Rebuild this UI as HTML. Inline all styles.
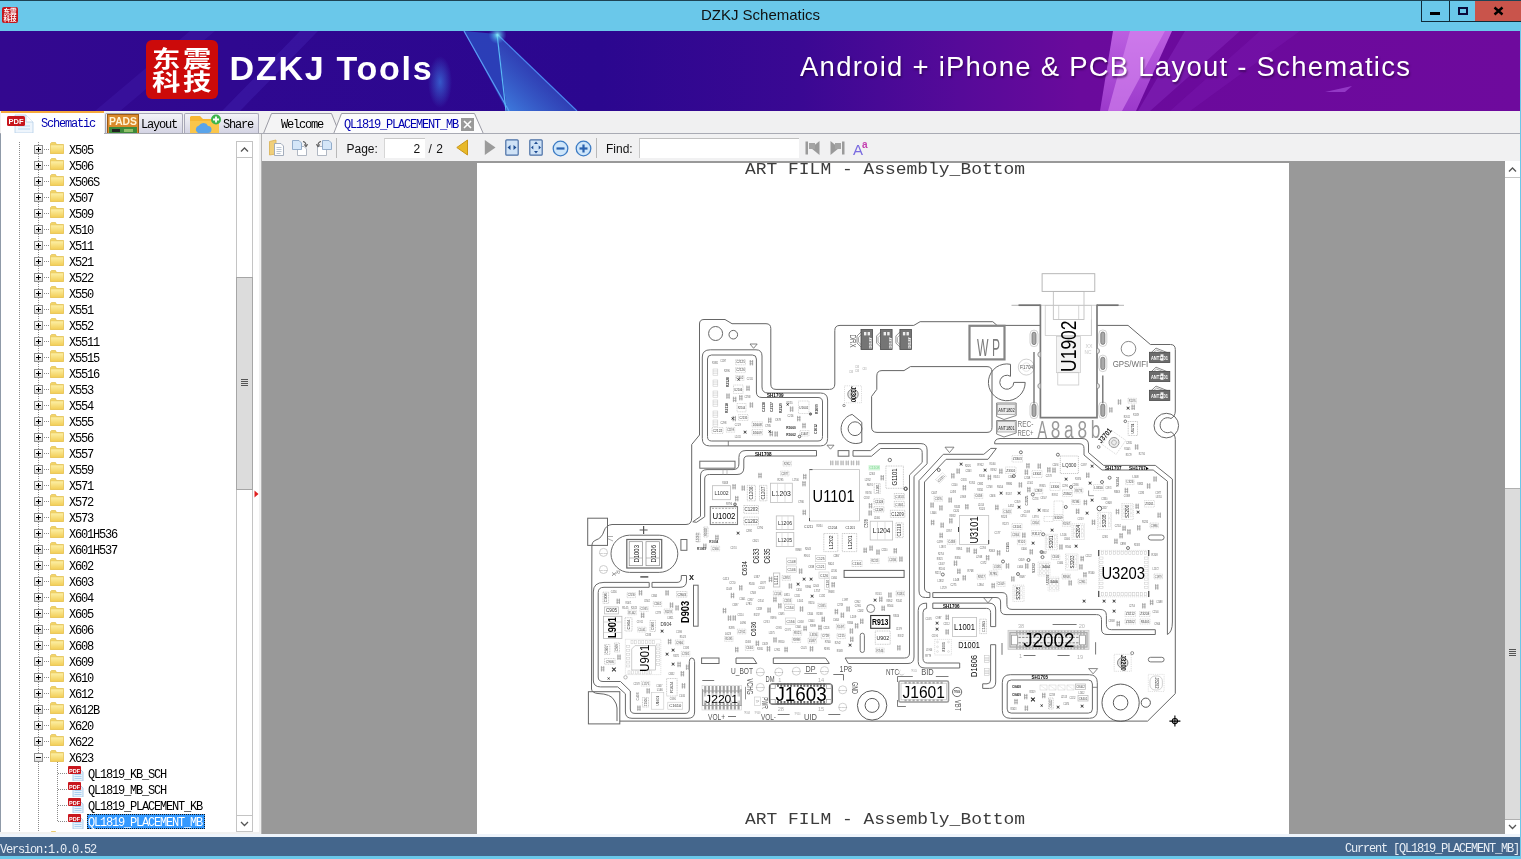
<!DOCTYPE html>
<html lang="en"><head><meta charset="utf-8"><title>DZKJ Schematics</title>
<style>
*{box-sizing:border-box;margin:0;padding:0}
html,body{width:1521px;height:859px;overflow:hidden;background:#6ac8ea;font-family:"Liberation Sans",sans-serif}
#win{position:absolute;left:0;top:0;width:1521px;height:859px;background:#6ac8ea;overflow:hidden;will-change:transform}
.abs{position:absolute}
.mono{font-family:"Liberation Mono","Noto Sans CJK SC",monospace;font-size:12px;letter-spacing:-1.2px;white-space:pre;line-height:12px}
#titlebar{left:0;top:0;width:1521px;height:31px;background:#6ac8ea;border-top:1px solid #1d4354}
#title{left:0;top:6px;width:1521px;text-align:center;font-size:15px;color:#111;line-height:18px}
#banner{left:0;top:31px;width:1520px;height:80px;overflow:hidden;background:linear-gradient(90deg,#33088f 0,#2f0890 230px,#2b078f 600px,#3a0893 800px,#560a99 960px,#6a0a9c 1080px,#6e0a9d 1520px)}
#tabbar{left:0;top:111px;width:1520px;height:23px;background:#f0f0f1}
#tree{left:1px;top:134px;width:258px;height:698px;background:#fff;overflow:hidden;will-change:transform}
.row{position:absolute;left:0;height:16px;width:258px}
.pm{position:absolute;left:33px;top:3px;width:9px;height:9px;border:1px solid #919191;background:linear-gradient(#fff,#ddd)}
.pm:before{content:"";position:absolute;left:1px;top:3px;width:5px;height:1px;background:#000}
.pm.plus:after{content:"";position:absolute;left:3px;top:1px;width:1px;height:5px;background:#000}
.fold{position:absolute;left:49px;top:0px;width:14px;height:12px}
.lbl{position:absolute;left:68px;top:3px;color:#000}
.flbl{position:absolute;left:87px;top:3px;color:#000}
.hdot{position:absolute;height:1px;top:7px;background-image:linear-gradient(90deg,#8a8a8a 1px,transparent 1px);background-size:2px 1px}
.vdot{position:absolute;width:1px;background-image:linear-gradient(#8a8a8a 1px,transparent 1px);background-size:1px 2px}
#status{left:0;top:837px;width:1520px;height:19px;background:#44668c;color:#e8eef5;will-change:transform}
</style></head>
<body><div id="win">
<div id="titlebar" class="abs"></div>
<svg class="abs" style="left:2px;top:7px" width="16" height="16" viewBox="0 0 16 16"><rect width="16" height="16" rx="2" fill="#c4161c"/><text x="8" y="7.3" font-family="Noto Sans CJK SC,sans-serif" font-weight="bold" font-size="6.6" fill="#fff" text-anchor="middle">东震</text><text x="8" y="14.2" font-family="Noto Sans CJK SC,sans-serif" font-weight="bold" font-size="6.6" fill="#fff" text-anchor="middle">科技</text></svg>
<div id="title" class="abs"><span id="titlespan">DZKJ Schematics</span></div>
<div class="abs" style="left:1421px;top:1px;width:29px;height:21px;border:1px solid #0f2a38;border-top:none;background:#6ac8ea"></div>
<div class="abs" style="left:1449px;top:1px;width:27px;height:21px;border:1px solid #0f2a38;border-top:none;background:#6ac8ea"></div>
<div class="abs" style="left:1475px;top:1px;width:46px;height:21px;background:#c9544b;border-bottom:1px solid #0f2a38"></div>
<div class="abs" style="left:1430px;top:12px;width:10px;height:3px;background:#000"></div>
<div class="abs" style="left:1458px;top:7px;width:10px;height:8px;border:2px solid #0a0a3a;border-top-width:2px"></div>
<svg class="abs" style="left:1493px;top:6px" width="11" height="10" viewBox="0 0 11 10"><path d="M1.5 1.5 L9.5 8.5 M9.5 1.5 L1.5 8.5" stroke="#000" stroke-width="2.4"/></svg>
<div id="banner" class="abs"><svg class="abs" style="left:0;top:0" width="1520" height="80" viewBox="0 31 1520 80"><defs><linearGradient id="tri" x1="0.1" y1="1" x2="0.8" y2="0.3"><stop offset="0" stop-color="#3f82e2" stop-opacity="0.95"/><stop offset="1" stop-color="#2a3fb4" stop-opacity="0.55"/></linearGradient><radialGradient id="glow"><stop offset="0" stop-color="#3c8ef0" stop-opacity="0.6"/><stop offset="1" stop-color="#3c8ef0" stop-opacity="0"/></radialGradient><radialGradient id="apx"><stop offset="0" stop-color="#8ff0f8" stop-opacity="0.95"/><stop offset="0.35" stop-color="#5fd0f0" stop-opacity="0.6"/><stop offset="1" stop-color="#4aa0f0" stop-opacity="0"/></radialGradient><linearGradient id="pk" x1="0" y1="0" x2="0" y2="1"><stop offset="0" stop-color="#c468e8"/><stop offset="1" stop-color="#a13fd0"/></linearGradient></defs><path d="M190 31 L215 31 L120 111 L95 111 Z" fill="#4420b0" opacity="0.35"/><path d="M300 31 L318 31 L240 111 L222 111 Z" fill="#4b2fc0" opacity="0.3"/><ellipse cx="440" cy="82" rx="12" ry="26" fill="url(#glow)"/><path d="M464 31 L497 34 L507 111 Z" fill="#2c4cc0" opacity="0.8"/><path d="M497 34 L577 111 L507 111 Z" fill="url(#tri)"/><path d="M464 31 L509 111" stroke="#5a9cf5" stroke-width="1.2" fill="none"/><path d="M497 34 L506 111" stroke="#59b8f5" stroke-width="1.2" fill="none"/><path d="M497 34 L577 111" stroke="#4a86ee" stroke-width="1.2" fill="none"/><circle cx="497.5" cy="35" r="9" fill="url(#apx)"/><path d="M1113 31 L1172 31 L1136 111 L1100 111 Z" fill="url(#pk)" opacity="0.9"/><path d="M1130 31 L1165 31 L1122 111 L1108 111 Z" fill="#d98af2" opacity="0.6"/><path d="M1185 31 L1240 31 L1150 111 L1138 111 Z" fill="#8a2cc0" opacity="0.45"/><path d="M1260 31 L1300 31 L1190 111 L1170 111 Z" fill="#7d1eb4" opacity="0.35"/><path d="M1325 92 L1352 86 L1345 92 Z" fill="#a24bd6" opacity="0.7"/></svg><div class="abs" style="left:146px;top:9px;width:72px;height:59px;background:#cc0a0a;border-radius:6px"></div><div class="abs" style="left:147px;top:14.5px;width:72px;text-align:center;font-family:'Noto Sans CJK SC',sans-serif;font-weight:bold;font-size:22.5px;line-height:23.4px;color:#fff;letter-spacing:2px;transform:scaleX(1.26);transform-origin:36px 0">东震<br>科技</div><div class="abs" style="left:229.6px;top:16.5px;font-weight:bold;font-size:34px;line-height:40px;color:#fff;white-space:nowrap;letter-spacing:1.75px" id="dzkj">DZKJ Tools</div><div class="abs" style="left:800px;top:18.6px;font-size:27.5px;line-height:34px;color:#fff;white-space:nowrap;letter-spacing:1.25px;text-shadow:1px 2px 2px rgba(40,0,60,0.6)" id="slogan">Android + iPhone &amp; PCB Layout - Schematics</div></div>
<div id="tabbar" class="abs"><div class="abs" style="left:1px;top:0px;width:103px;height:23px;background:#fff;border-top:2px solid #f5a93b"></div><span class="abs mono" style="left:41px;top:7px;color:#0000b0">Schematic</span><div class="abs" style="left:105px;top:2px;width:78px;height:20px;background:linear-gradient(#f4f4f8,#d4d4e4);border:1px solid #a8a8b8;border-bottom:none;border-radius:2px 2px 0 0"></div><svg class="abs" style="left:107px;top:3px" width="32" height="20" viewBox="0 0 32 20"><rect x="0.5" y="0.5" width="31" height="20" fill="#d98a2b" stroke="#9c5a14"/><text x="16" y="11" font-family="Liberation Sans,sans-serif" font-weight="bold" font-size="10.5" fill="#fff5d6" text-anchor="middle" textLength="28" lengthAdjust="spacingAndGlyphs">PADS</text><rect x="2" y="13" width="28" height="7" fill="#3d8a3a"/><rect x="5" y="15" width="8" height="3" fill="#222"/><rect x="17" y="15" width="9" height="3" fill="#8fc06a"/></svg><span class="abs mono" style="left:141px;top:8px;color:#000">Layout</span><div class="abs" style="left:184px;top:2px;width:75px;height:20px;background:linear-gradient(#f4f4f8,#d4d4e4);border:1px solid #a8a8b8;border-bottom:none;border-radius:2px 2px 0 0"></div><svg class="abs" style="left:189px;top:3px" width="34" height="20" viewBox="0 0 34 20"><path d="M1 3 L1 20 L30 20 L30 5 L14 5 L11 2 L2 2 Z" fill="#f7b733"/><rect x="1" y="7" width="29" height="13" fill="#fbc64a"/><path d="M9 19 a4 4 0 0 1 1 -7.5 a5 5 0 0 1 9 0.5 a3.5 3.5 0 0 1 0 7 Z" fill="#5aa4ea"/><circle cx="27" cy="5.5" r="5" fill="#3db54a"/><path d="M27 2.5v6M24 5.5h6" stroke="#fff" stroke-width="1.8"/></svg><span class="abs mono" style="left:223px;top:8px;color:#000">Share</span><svg class="abs" style="left:258px;top:0" width="240" height="23" viewBox="258 111 240 23"><path d="M263.5 133.5 L271.5 113.5 L331.5 113.5 L339.5 133.5" fill="#f4f4f5" stroke="#9b9ba5" stroke-width="1"/><path d="M333.5 134 L341.5 113.5 L474.5 113.5 L483.5 134 Z" fill="#fcfcfd" stroke="#9b9ba5" stroke-width="1"/><path d="M258 133.5 L334 133.5 M483 133.5 L498 133.5" stroke="#9b9ba5" stroke-width="1"/><rect x="461" y="118" width="13" height="13" fill="#9a9a9a"/><path d="M464 121 L471 128 M471 121 L464 128" stroke="#fff" stroke-width="1.6"/></svg><span class="abs mono" style="left:281px;top:8px;color:#000">Welcome</span><span class="abs mono" style="left:344px;top:8px;color:#0000b0">QL1819_PLACEMENT_MB</span></div>
<div class="abs" style="left:0;top:133px;width:1520px;height:1px;background:#a9abb4"></div>
<div class="abs" style="left:1px;top:111px;width:103px;height:24px;background:#fff;border-top:2px solid #f5a93b"></div>
<svg class="abs" style="left:6px;top:113px" width="34" height="20" viewBox="0 0 34 20"><path d="M9 2 L20 2 L27 9 L27 20 L9 20 Z" fill="#eef5fc" stroke="#b5cfe8" stroke-width="0.8"/><path d="M20 2 L20 9 L27 9" fill="#fff" stroke="#b5cfe8" stroke-width="0.8"/><path d="M12 13h12M12 16h12" stroke="#b9d8f2" stroke-width="1.2"/><rect x="1" y="3" width="18" height="10" rx="1.5" fill="#c8161d"/><text x="10" y="11" font-family="Liberation Sans,sans-serif" font-weight="bold" font-size="8" fill="#fff" text-anchor="middle" textLength="15" lengthAdjust="spacingAndGlyphs">PDF</text></svg>
<span class="abs mono" style="left:41px;top:118px;color:#0000b0">Schematic</span>
<div class="abs" style="left:0;top:134px;width:1px;height:703px;background:#8f9aa8"></div>
<div id="tree" class="abs"><div class="vdot" style="left:18px;top:8px;height:690px"></div>
<div class="vdot" style="left:37px;top:8px;height:690px"></div>
<div class="row" style="top:8px"><div class="hdot" style="left:43px;width:6px"></div><div class="pm plus"></div><svg class="fold" viewBox="0 0 14 12"><defs><linearGradient id="fg" x1="0" y1="0" x2="0" y2="1"><stop offset="0" stop-color="#fdf1a8"/><stop offset="1" stop-color="#f2cd55"/></linearGradient></defs><path d="M0.5 1.5 L0.5 11.5 L13.5 11.5 L13.5 2.5 L6.5 2.5 L5.5 0.5 L1.5 0.5 Z" fill="#f2d468" stroke="#dfb840" stroke-width="0.6"/><rect x="0.5" y="3" width="13" height="8.5" fill="url(#fg)" stroke="#e6c25a" stroke-width="0.5"/></svg><span class="lbl mono">X505</span></div>
<div class="row" style="top:24px"><div class="hdot" style="left:43px;width:6px"></div><div class="pm plus"></div><svg class="fold" viewBox="0 0 14 12"><path d="M0.5 1.5 L0.5 11.5 L13.5 11.5 L13.5 2.5 L6.5 2.5 L5.5 0.5 L1.5 0.5 Z" fill="#f2d468" stroke="#dfb840" stroke-width="0.6"/><rect x="0.5" y="3" width="13" height="8.5" fill="url(#fg)" stroke="#e6c25a" stroke-width="0.5"/></svg><span class="lbl mono">X506</span></div>
<div class="row" style="top:40px"><div class="hdot" style="left:43px;width:6px"></div><div class="pm plus"></div><svg class="fold" viewBox="0 0 14 12"><path d="M0.5 1.5 L0.5 11.5 L13.5 11.5 L13.5 2.5 L6.5 2.5 L5.5 0.5 L1.5 0.5 Z" fill="#f2d468" stroke="#dfb840" stroke-width="0.6"/><rect x="0.5" y="3" width="13" height="8.5" fill="url(#fg)" stroke="#e6c25a" stroke-width="0.5"/></svg><span class="lbl mono">X506S</span></div>
<div class="row" style="top:56px"><div class="hdot" style="left:43px;width:6px"></div><div class="pm plus"></div><svg class="fold" viewBox="0 0 14 12"><path d="M0.5 1.5 L0.5 11.5 L13.5 11.5 L13.5 2.5 L6.5 2.5 L5.5 0.5 L1.5 0.5 Z" fill="#f2d468" stroke="#dfb840" stroke-width="0.6"/><rect x="0.5" y="3" width="13" height="8.5" fill="url(#fg)" stroke="#e6c25a" stroke-width="0.5"/></svg><span class="lbl mono">X507</span></div>
<div class="row" style="top:72px"><div class="hdot" style="left:43px;width:6px"></div><div class="pm plus"></div><svg class="fold" viewBox="0 0 14 12"><path d="M0.5 1.5 L0.5 11.5 L13.5 11.5 L13.5 2.5 L6.5 2.5 L5.5 0.5 L1.5 0.5 Z" fill="#f2d468" stroke="#dfb840" stroke-width="0.6"/><rect x="0.5" y="3" width="13" height="8.5" fill="url(#fg)" stroke="#e6c25a" stroke-width="0.5"/></svg><span class="lbl mono">X509</span></div>
<div class="row" style="top:88px"><div class="hdot" style="left:43px;width:6px"></div><div class="pm plus"></div><svg class="fold" viewBox="0 0 14 12"><path d="M0.5 1.5 L0.5 11.5 L13.5 11.5 L13.5 2.5 L6.5 2.5 L5.5 0.5 L1.5 0.5 Z" fill="#f2d468" stroke="#dfb840" stroke-width="0.6"/><rect x="0.5" y="3" width="13" height="8.5" fill="url(#fg)" stroke="#e6c25a" stroke-width="0.5"/></svg><span class="lbl mono">X510</span></div>
<div class="row" style="top:104px"><div class="hdot" style="left:43px;width:6px"></div><div class="pm plus"></div><svg class="fold" viewBox="0 0 14 12"><path d="M0.5 1.5 L0.5 11.5 L13.5 11.5 L13.5 2.5 L6.5 2.5 L5.5 0.5 L1.5 0.5 Z" fill="#f2d468" stroke="#dfb840" stroke-width="0.6"/><rect x="0.5" y="3" width="13" height="8.5" fill="url(#fg)" stroke="#e6c25a" stroke-width="0.5"/></svg><span class="lbl mono">X511</span></div>
<div class="row" style="top:120px"><div class="hdot" style="left:43px;width:6px"></div><div class="pm plus"></div><svg class="fold" viewBox="0 0 14 12"><path d="M0.5 1.5 L0.5 11.5 L13.5 11.5 L13.5 2.5 L6.5 2.5 L5.5 0.5 L1.5 0.5 Z" fill="#f2d468" stroke="#dfb840" stroke-width="0.6"/><rect x="0.5" y="3" width="13" height="8.5" fill="url(#fg)" stroke="#e6c25a" stroke-width="0.5"/></svg><span class="lbl mono">X521</span></div>
<div class="row" style="top:136px"><div class="hdot" style="left:43px;width:6px"></div><div class="pm plus"></div><svg class="fold" viewBox="0 0 14 12"><path d="M0.5 1.5 L0.5 11.5 L13.5 11.5 L13.5 2.5 L6.5 2.5 L5.5 0.5 L1.5 0.5 Z" fill="#f2d468" stroke="#dfb840" stroke-width="0.6"/><rect x="0.5" y="3" width="13" height="8.5" fill="url(#fg)" stroke="#e6c25a" stroke-width="0.5"/></svg><span class="lbl mono">X522</span></div>
<div class="row" style="top:152px"><div class="hdot" style="left:43px;width:6px"></div><div class="pm plus"></div><svg class="fold" viewBox="0 0 14 12"><path d="M0.5 1.5 L0.5 11.5 L13.5 11.5 L13.5 2.5 L6.5 2.5 L5.5 0.5 L1.5 0.5 Z" fill="#f2d468" stroke="#dfb840" stroke-width="0.6"/><rect x="0.5" y="3" width="13" height="8.5" fill="url(#fg)" stroke="#e6c25a" stroke-width="0.5"/></svg><span class="lbl mono">X550</span></div>
<div class="row" style="top:168px"><div class="hdot" style="left:43px;width:6px"></div><div class="pm plus"></div><svg class="fold" viewBox="0 0 14 12"><path d="M0.5 1.5 L0.5 11.5 L13.5 11.5 L13.5 2.5 L6.5 2.5 L5.5 0.5 L1.5 0.5 Z" fill="#f2d468" stroke="#dfb840" stroke-width="0.6"/><rect x="0.5" y="3" width="13" height="8.5" fill="url(#fg)" stroke="#e6c25a" stroke-width="0.5"/></svg><span class="lbl mono">X551</span></div>
<div class="row" style="top:184px"><div class="hdot" style="left:43px;width:6px"></div><div class="pm plus"></div><svg class="fold" viewBox="0 0 14 12"><path d="M0.5 1.5 L0.5 11.5 L13.5 11.5 L13.5 2.5 L6.5 2.5 L5.5 0.5 L1.5 0.5 Z" fill="#f2d468" stroke="#dfb840" stroke-width="0.6"/><rect x="0.5" y="3" width="13" height="8.5" fill="url(#fg)" stroke="#e6c25a" stroke-width="0.5"/></svg><span class="lbl mono">X552</span></div>
<div class="row" style="top:200px"><div class="hdot" style="left:43px;width:6px"></div><div class="pm plus"></div><svg class="fold" viewBox="0 0 14 12"><path d="M0.5 1.5 L0.5 11.5 L13.5 11.5 L13.5 2.5 L6.5 2.5 L5.5 0.5 L1.5 0.5 Z" fill="#f2d468" stroke="#dfb840" stroke-width="0.6"/><rect x="0.5" y="3" width="13" height="8.5" fill="url(#fg)" stroke="#e6c25a" stroke-width="0.5"/></svg><span class="lbl mono">X5511</span></div>
<div class="row" style="top:216px"><div class="hdot" style="left:43px;width:6px"></div><div class="pm plus"></div><svg class="fold" viewBox="0 0 14 12"><path d="M0.5 1.5 L0.5 11.5 L13.5 11.5 L13.5 2.5 L6.5 2.5 L5.5 0.5 L1.5 0.5 Z" fill="#f2d468" stroke="#dfb840" stroke-width="0.6"/><rect x="0.5" y="3" width="13" height="8.5" fill="url(#fg)" stroke="#e6c25a" stroke-width="0.5"/></svg><span class="lbl mono">X5515</span></div>
<div class="row" style="top:232px"><div class="hdot" style="left:43px;width:6px"></div><div class="pm plus"></div><svg class="fold" viewBox="0 0 14 12"><path d="M0.5 1.5 L0.5 11.5 L13.5 11.5 L13.5 2.5 L6.5 2.5 L5.5 0.5 L1.5 0.5 Z" fill="#f2d468" stroke="#dfb840" stroke-width="0.6"/><rect x="0.5" y="3" width="13" height="8.5" fill="url(#fg)" stroke="#e6c25a" stroke-width="0.5"/></svg><span class="lbl mono">X5516</span></div>
<div class="row" style="top:248px"><div class="hdot" style="left:43px;width:6px"></div><div class="pm plus"></div><svg class="fold" viewBox="0 0 14 12"><path d="M0.5 1.5 L0.5 11.5 L13.5 11.5 L13.5 2.5 L6.5 2.5 L5.5 0.5 L1.5 0.5 Z" fill="#f2d468" stroke="#dfb840" stroke-width="0.6"/><rect x="0.5" y="3" width="13" height="8.5" fill="url(#fg)" stroke="#e6c25a" stroke-width="0.5"/></svg><span class="lbl mono">X553</span></div>
<div class="row" style="top:264px"><div class="hdot" style="left:43px;width:6px"></div><div class="pm plus"></div><svg class="fold" viewBox="0 0 14 12"><path d="M0.5 1.5 L0.5 11.5 L13.5 11.5 L13.5 2.5 L6.5 2.5 L5.5 0.5 L1.5 0.5 Z" fill="#f2d468" stroke="#dfb840" stroke-width="0.6"/><rect x="0.5" y="3" width="13" height="8.5" fill="url(#fg)" stroke="#e6c25a" stroke-width="0.5"/></svg><span class="lbl mono">X554</span></div>
<div class="row" style="top:280px"><div class="hdot" style="left:43px;width:6px"></div><div class="pm plus"></div><svg class="fold" viewBox="0 0 14 12"><path d="M0.5 1.5 L0.5 11.5 L13.5 11.5 L13.5 2.5 L6.5 2.5 L5.5 0.5 L1.5 0.5 Z" fill="#f2d468" stroke="#dfb840" stroke-width="0.6"/><rect x="0.5" y="3" width="13" height="8.5" fill="url(#fg)" stroke="#e6c25a" stroke-width="0.5"/></svg><span class="lbl mono">X555</span></div>
<div class="row" style="top:296px"><div class="hdot" style="left:43px;width:6px"></div><div class="pm plus"></div><svg class="fold" viewBox="0 0 14 12"><path d="M0.5 1.5 L0.5 11.5 L13.5 11.5 L13.5 2.5 L6.5 2.5 L5.5 0.5 L1.5 0.5 Z" fill="#f2d468" stroke="#dfb840" stroke-width="0.6"/><rect x="0.5" y="3" width="13" height="8.5" fill="url(#fg)" stroke="#e6c25a" stroke-width="0.5"/></svg><span class="lbl mono">X556</span></div>
<div class="row" style="top:312px"><div class="hdot" style="left:43px;width:6px"></div><div class="pm plus"></div><svg class="fold" viewBox="0 0 14 12"><path d="M0.5 1.5 L0.5 11.5 L13.5 11.5 L13.5 2.5 L6.5 2.5 L5.5 0.5 L1.5 0.5 Z" fill="#f2d468" stroke="#dfb840" stroke-width="0.6"/><rect x="0.5" y="3" width="13" height="8.5" fill="url(#fg)" stroke="#e6c25a" stroke-width="0.5"/></svg><span class="lbl mono">X557</span></div>
<div class="row" style="top:328px"><div class="hdot" style="left:43px;width:6px"></div><div class="pm plus"></div><svg class="fold" viewBox="0 0 14 12"><path d="M0.5 1.5 L0.5 11.5 L13.5 11.5 L13.5 2.5 L6.5 2.5 L5.5 0.5 L1.5 0.5 Z" fill="#f2d468" stroke="#dfb840" stroke-width="0.6"/><rect x="0.5" y="3" width="13" height="8.5" fill="url(#fg)" stroke="#e6c25a" stroke-width="0.5"/></svg><span class="lbl mono">X559</span></div>
<div class="row" style="top:344px"><div class="hdot" style="left:43px;width:6px"></div><div class="pm plus"></div><svg class="fold" viewBox="0 0 14 12"><path d="M0.5 1.5 L0.5 11.5 L13.5 11.5 L13.5 2.5 L6.5 2.5 L5.5 0.5 L1.5 0.5 Z" fill="#f2d468" stroke="#dfb840" stroke-width="0.6"/><rect x="0.5" y="3" width="13" height="8.5" fill="url(#fg)" stroke="#e6c25a" stroke-width="0.5"/></svg><span class="lbl mono">X571</span></div>
<div class="row" style="top:360px"><div class="hdot" style="left:43px;width:6px"></div><div class="pm plus"></div><svg class="fold" viewBox="0 0 14 12"><path d="M0.5 1.5 L0.5 11.5 L13.5 11.5 L13.5 2.5 L6.5 2.5 L5.5 0.5 L1.5 0.5 Z" fill="#f2d468" stroke="#dfb840" stroke-width="0.6"/><rect x="0.5" y="3" width="13" height="8.5" fill="url(#fg)" stroke="#e6c25a" stroke-width="0.5"/></svg><span class="lbl mono">X572</span></div>
<div class="row" style="top:376px"><div class="hdot" style="left:43px;width:6px"></div><div class="pm plus"></div><svg class="fold" viewBox="0 0 14 12"><path d="M0.5 1.5 L0.5 11.5 L13.5 11.5 L13.5 2.5 L6.5 2.5 L5.5 0.5 L1.5 0.5 Z" fill="#f2d468" stroke="#dfb840" stroke-width="0.6"/><rect x="0.5" y="3" width="13" height="8.5" fill="url(#fg)" stroke="#e6c25a" stroke-width="0.5"/></svg><span class="lbl mono">X573</span></div>
<div class="row" style="top:392px"><div class="hdot" style="left:43px;width:6px"></div><div class="pm plus"></div><svg class="fold" viewBox="0 0 14 12"><path d="M0.5 1.5 L0.5 11.5 L13.5 11.5 L13.5 2.5 L6.5 2.5 L5.5 0.5 L1.5 0.5 Z" fill="#f2d468" stroke="#dfb840" stroke-width="0.6"/><rect x="0.5" y="3" width="13" height="8.5" fill="url(#fg)" stroke="#e6c25a" stroke-width="0.5"/></svg><span class="lbl mono">X601H536</span></div>
<div class="row" style="top:408px"><div class="hdot" style="left:43px;width:6px"></div><div class="pm plus"></div><svg class="fold" viewBox="0 0 14 12"><path d="M0.5 1.5 L0.5 11.5 L13.5 11.5 L13.5 2.5 L6.5 2.5 L5.5 0.5 L1.5 0.5 Z" fill="#f2d468" stroke="#dfb840" stroke-width="0.6"/><rect x="0.5" y="3" width="13" height="8.5" fill="url(#fg)" stroke="#e6c25a" stroke-width="0.5"/></svg><span class="lbl mono">X601H537</span></div>
<div class="row" style="top:424px"><div class="hdot" style="left:43px;width:6px"></div><div class="pm plus"></div><svg class="fold" viewBox="0 0 14 12"><path d="M0.5 1.5 L0.5 11.5 L13.5 11.5 L13.5 2.5 L6.5 2.5 L5.5 0.5 L1.5 0.5 Z" fill="#f2d468" stroke="#dfb840" stroke-width="0.6"/><rect x="0.5" y="3" width="13" height="8.5" fill="url(#fg)" stroke="#e6c25a" stroke-width="0.5"/></svg><span class="lbl mono">X602</span></div>
<div class="row" style="top:440px"><div class="hdot" style="left:43px;width:6px"></div><div class="pm plus"></div><svg class="fold" viewBox="0 0 14 12"><path d="M0.5 1.5 L0.5 11.5 L13.5 11.5 L13.5 2.5 L6.5 2.5 L5.5 0.5 L1.5 0.5 Z" fill="#f2d468" stroke="#dfb840" stroke-width="0.6"/><rect x="0.5" y="3" width="13" height="8.5" fill="url(#fg)" stroke="#e6c25a" stroke-width="0.5"/></svg><span class="lbl mono">X603</span></div>
<div class="row" style="top:456px"><div class="hdot" style="left:43px;width:6px"></div><div class="pm plus"></div><svg class="fold" viewBox="0 0 14 12"><path d="M0.5 1.5 L0.5 11.5 L13.5 11.5 L13.5 2.5 L6.5 2.5 L5.5 0.5 L1.5 0.5 Z" fill="#f2d468" stroke="#dfb840" stroke-width="0.6"/><rect x="0.5" y="3" width="13" height="8.5" fill="url(#fg)" stroke="#e6c25a" stroke-width="0.5"/></svg><span class="lbl mono">X604</span></div>
<div class="row" style="top:472px"><div class="hdot" style="left:43px;width:6px"></div><div class="pm plus"></div><svg class="fold" viewBox="0 0 14 12"><path d="M0.5 1.5 L0.5 11.5 L13.5 11.5 L13.5 2.5 L6.5 2.5 L5.5 0.5 L1.5 0.5 Z" fill="#f2d468" stroke="#dfb840" stroke-width="0.6"/><rect x="0.5" y="3" width="13" height="8.5" fill="url(#fg)" stroke="#e6c25a" stroke-width="0.5"/></svg><span class="lbl mono">X605</span></div>
<div class="row" style="top:488px"><div class="hdot" style="left:43px;width:6px"></div><div class="pm plus"></div><svg class="fold" viewBox="0 0 14 12"><path d="M0.5 1.5 L0.5 11.5 L13.5 11.5 L13.5 2.5 L6.5 2.5 L5.5 0.5 L1.5 0.5 Z" fill="#f2d468" stroke="#dfb840" stroke-width="0.6"/><rect x="0.5" y="3" width="13" height="8.5" fill="url(#fg)" stroke="#e6c25a" stroke-width="0.5"/></svg><span class="lbl mono">X606</span></div>
<div class="row" style="top:504px"><div class="hdot" style="left:43px;width:6px"></div><div class="pm plus"></div><svg class="fold" viewBox="0 0 14 12"><path d="M0.5 1.5 L0.5 11.5 L13.5 11.5 L13.5 2.5 L6.5 2.5 L5.5 0.5 L1.5 0.5 Z" fill="#f2d468" stroke="#dfb840" stroke-width="0.6"/><rect x="0.5" y="3" width="13" height="8.5" fill="url(#fg)" stroke="#e6c25a" stroke-width="0.5"/></svg><span class="lbl mono">X608</span></div>
<div class="row" style="top:520px"><div class="hdot" style="left:43px;width:6px"></div><div class="pm plus"></div><svg class="fold" viewBox="0 0 14 12"><path d="M0.5 1.5 L0.5 11.5 L13.5 11.5 L13.5 2.5 L6.5 2.5 L5.5 0.5 L1.5 0.5 Z" fill="#f2d468" stroke="#dfb840" stroke-width="0.6"/><rect x="0.5" y="3" width="13" height="8.5" fill="url(#fg)" stroke="#e6c25a" stroke-width="0.5"/></svg><span class="lbl mono">X609</span></div>
<div class="row" style="top:536px"><div class="hdot" style="left:43px;width:6px"></div><div class="pm plus"></div><svg class="fold" viewBox="0 0 14 12"><path d="M0.5 1.5 L0.5 11.5 L13.5 11.5 L13.5 2.5 L6.5 2.5 L5.5 0.5 L1.5 0.5 Z" fill="#f2d468" stroke="#dfb840" stroke-width="0.6"/><rect x="0.5" y="3" width="13" height="8.5" fill="url(#fg)" stroke="#e6c25a" stroke-width="0.5"/></svg><span class="lbl mono">X610</span></div>
<div class="row" style="top:552px"><div class="hdot" style="left:43px;width:6px"></div><div class="pm plus"></div><svg class="fold" viewBox="0 0 14 12"><path d="M0.5 1.5 L0.5 11.5 L13.5 11.5 L13.5 2.5 L6.5 2.5 L5.5 0.5 L1.5 0.5 Z" fill="#f2d468" stroke="#dfb840" stroke-width="0.6"/><rect x="0.5" y="3" width="13" height="8.5" fill="url(#fg)" stroke="#e6c25a" stroke-width="0.5"/></svg><span class="lbl mono">X612</span></div>
<div class="row" style="top:568px"><div class="hdot" style="left:43px;width:6px"></div><div class="pm plus"></div><svg class="fold" viewBox="0 0 14 12"><path d="M0.5 1.5 L0.5 11.5 L13.5 11.5 L13.5 2.5 L6.5 2.5 L5.5 0.5 L1.5 0.5 Z" fill="#f2d468" stroke="#dfb840" stroke-width="0.6"/><rect x="0.5" y="3" width="13" height="8.5" fill="url(#fg)" stroke="#e6c25a" stroke-width="0.5"/></svg><span class="lbl mono">X612B</span></div>
<div class="row" style="top:584px"><div class="hdot" style="left:43px;width:6px"></div><div class="pm plus"></div><svg class="fold" viewBox="0 0 14 12"><path d="M0.5 1.5 L0.5 11.5 L13.5 11.5 L13.5 2.5 L6.5 2.5 L5.5 0.5 L1.5 0.5 Z" fill="#f2d468" stroke="#dfb840" stroke-width="0.6"/><rect x="0.5" y="3" width="13" height="8.5" fill="url(#fg)" stroke="#e6c25a" stroke-width="0.5"/></svg><span class="lbl mono">X620</span></div>
<div class="row" style="top:600px"><div class="hdot" style="left:43px;width:6px"></div><div class="pm plus"></div><svg class="fold" viewBox="0 0 14 12"><path d="M0.5 1.5 L0.5 11.5 L13.5 11.5 L13.5 2.5 L6.5 2.5 L5.5 0.5 L1.5 0.5 Z" fill="#f2d468" stroke="#dfb840" stroke-width="0.6"/><rect x="0.5" y="3" width="13" height="8.5" fill="url(#fg)" stroke="#e6c25a" stroke-width="0.5"/></svg><span class="lbl mono">X622</span></div>
<div class="row" style="top:616px"><div class="hdot" style="left:43px;width:6px"></div><div class="pm"></div><svg class="fold" viewBox="0 0 14 12"><path d="M0.5 1.5 L0.5 11.5 L13.5 11.5 L13.5 2.5 L6.5 2.5 L5.5 0.5 L1.5 0.5 Z" fill="#f2d468" stroke="#dfb840" stroke-width="0.6"/><rect x="0.5" y="3" width="13" height="8.5" fill="url(#fg)" stroke="#e6c25a" stroke-width="0.5"/></svg><span class="lbl mono">X623</span></div>
<div class="vdot" style="left:56px;top:628px;height:60px"></div>
<div class="row" style="top:632px"><div class="hdot" style="left:57px;width:10px"></div><svg class="abs" style="left:67px;top:-1px" width="16.0" height="16.0" viewBox="0 0 16 16"><path d="M5 3.5 L11.5 3.5 L15 7 L15 16 L5 16 Z" fill="#e8f2fb" stroke="#9fc3e6" stroke-width="0.8"/><path d="M6.5 9.5h7M6.5 11.5h7M6.5 13.5h7" stroke="#a9d0f0" stroke-width="1"/><rect x="0" y="1" width="13" height="8" rx="1" fill="#c8161d"/><text x="6.5" y="7.6" font-family="Liberation Sans,sans-serif" font-weight="bold" font-size="6.2" fill="#fff" text-anchor="middle" textLength="11" lengthAdjust="spacingAndGlyphs">PDF</text></svg><span class="flbl mono">QL1819_KB_SCH</span></div>
<div class="row" style="top:648px"><div class="hdot" style="left:57px;width:10px"></div><svg class="abs" style="left:67px;top:-1px" width="16.0" height="16.0" viewBox="0 0 16 16"><path d="M5 3.5 L11.5 3.5 L15 7 L15 16 L5 16 Z" fill="#e8f2fb" stroke="#9fc3e6" stroke-width="0.8"/><path d="M6.5 9.5h7M6.5 11.5h7M6.5 13.5h7" stroke="#a9d0f0" stroke-width="1"/><rect x="0" y="1" width="13" height="8" rx="1" fill="#c8161d"/><text x="6.5" y="7.6" font-family="Liberation Sans,sans-serif" font-weight="bold" font-size="6.2" fill="#fff" text-anchor="middle" textLength="11" lengthAdjust="spacingAndGlyphs">PDF</text></svg><span class="flbl mono">QL1819_MB_SCH</span></div>
<div class="row" style="top:664px"><div class="hdot" style="left:57px;width:10px"></div><svg class="abs" style="left:67px;top:-1px" width="16.0" height="16.0" viewBox="0 0 16 16"><path d="M5 3.5 L11.5 3.5 L15 7 L15 16 L5 16 Z" fill="#e8f2fb" stroke="#9fc3e6" stroke-width="0.8"/><path d="M6.5 9.5h7M6.5 11.5h7M6.5 13.5h7" stroke="#a9d0f0" stroke-width="1"/><rect x="0" y="1" width="13" height="8" rx="1" fill="#c8161d"/><text x="6.5" y="7.6" font-family="Liberation Sans,sans-serif" font-weight="bold" font-size="6.2" fill="#fff" text-anchor="middle" textLength="11" lengthAdjust="spacingAndGlyphs">PDF</text></svg><span class="flbl mono">QL1819_PLACEMENT_KB</span></div>
<div class="row" style="top:680px"><div class="hdot" style="left:57px;width:10px"></div><svg class="abs" style="left:67px;top:-1px" width="16.0" height="16.0" viewBox="0 0 16 16"><path d="M5 3.5 L11.5 3.5 L15 7 L15 16 L5 16 Z" fill="#e8f2fb" stroke="#9fc3e6" stroke-width="0.8"/><path d="M6.5 9.5h7M6.5 11.5h7M6.5 13.5h7" stroke="#a9d0f0" stroke-width="1"/><rect x="0" y="1" width="13" height="8" rx="1" fill="#c8161d"/><text x="6.5" y="7.6" font-family="Liberation Sans,sans-serif" font-weight="bold" font-size="6.2" fill="#fff" text-anchor="middle" textLength="11" lengthAdjust="spacingAndGlyphs">PDF</text></svg><div class="abs" style="left:86px;top:0px;width:118px;height:15px;background:#3399ff;outline:1px dotted #1a1a1a;outline-offset:-1px"></div><span class="flbl mono" style="color:#fff">QL1819_PLACEMENT_MB</span></div>
<div class="row" style="top:697px"><svg class="fold" viewBox="0 0 14 12"><path d="M0.5 1.5 L0.5 11.5 L13.5 11.5 L13.5 2.5 L6.5 2.5 L5.5 0.5 L1.5 0.5 Z" fill="#f2d468" stroke="#dfb840" stroke-width="0.6"/><rect x="0.5" y="3" width="13" height="8.5" fill="url(#fg)" stroke="#e6c25a" stroke-width="0.5"/></svg></div>
<div class="abs" style="left:235px;top:7px;width:17px;height:691px;background:#fff;border:1px solid #c4c4c4"></div>
<div class="abs" style="left:235px;top:7px;width:17px;height:17px;border:1px solid #c4c4c4;background:#fff"></div>
<svg class="abs" style="left:235px;top:7px" width="17" height="17"><path d="M5 10.5 L8.5 7 L12 10.5" fill="none" stroke="#555" stroke-width="1.3"/></svg>
<div class="abs" style="left:235px;top:681px;width:17px;height:17px;border:1px solid #c4c4c4;background:#fff"></div>
<svg class="abs" style="left:235px;top:681px" width="17" height="17"><path d="M5 7 L8.5 10.5 L12 7" fill="none" stroke="#555" stroke-width="1.3"/></svg>
<div class="abs" style="left:235px;top:143px;width:17px;height:213px;background:#dcdcdc;border:1px solid #a6a6a6"></div>
<div class="abs" style="left:240px;top:245px;width:7px;height:8px;background:linear-gradient(#555 1px,transparent 1px);background-size:7px 2px"></div></div>
<div class="abs" style="left:0px;top:832px;width:262px;height:5px;background:#f0f0f0"></div>
<div class="abs" style="left:259px;top:134px;width:3px;height:703px;background:#f0f0f0"></div>
<div class="abs" style="left:261px;top:134px;width:1px;height:700px;background:#b4b4b4"></div>
<svg class="abs" style="left:254px;top:490px" width="5" height="8"><path d="M0.5 0.5 L4.5 4 L0.5 7.5 Z" fill="#e02020"/></svg>
<div class="abs" style="left:262px;top:134px;width:1258px;height:27px;background:#f1f1f2"></div><svg class="abs" style="left:268px;top:139px" width="17" height="18" viewBox="0 0 17 18"><path d="M1.5 2.5 L8 1 L8 15 L1.5 16 Z" fill="#f0cf7a" stroke="#d9b050" stroke-width="0.8"/><path d="M6.5 4.5 L13 4.5 L15.5 7 L15.5 16.5 L6.5 16.5 Z" fill="#fdfdfd" stroke="#9aa5b5" stroke-width="0.9"/><path d="M8.5 8.5h5M8.5 10.5h5M8.5 12.5h5M8.5 14.5h4" stroke="#a9b8c8" stroke-width="0.8"/></svg><svg class="abs" style="left:291px;top:139px" width="18" height="18" viewBox="0 0 18 18"><path d="M6.5 7.5 L13 7.5 L15.5 10 L15.5 16.5 L6.5 16.5 Z" fill="#fff" stroke="#a8b0bc" stroke-width="0.9"/><path d="M1.5 1.5 L8 1.5 L10.5 4 L10.5 10.5 L1.5 10.5 Z" fill="#d4e6f8" stroke="#8aa6c6" stroke-width="0.9"/><path d="M12 2.5 q3 0.5 3 4" fill="none" stroke="#555" stroke-width="1.1"/><path d="M13.3 5.5 l1.7 2 l1.6 -2.2" fill="none" stroke="#555" stroke-width="1.1"/></svg><svg class="abs" style="left:315px;top:139px" width="18" height="18" viewBox="0 0 18 18"><path d="M2.5 7.5 L9 7.5 L11.5 10 L11.5 16.5 L2.5 16.5 Z" fill="#fff" stroke="#a8b0bc" stroke-width="0.9"/><path d="M7.5 1.5 L14 1.5 L16.5 4 L16.5 10.5 L7.5 10.5 Z" fill="#d4e6f8" stroke="#8aa6c6" stroke-width="0.9"/><path d="M6 2.5 q-3 0.5 -3 4" fill="none" stroke="#555" stroke-width="1.1"/><path d="M4.7 5.5 l-1.7 2 l-1.6 -2.2" fill="none" stroke="#555" stroke-width="1.1"/></svg><div class="abs" style="left:336px;top:138px;width:1px;height:20px;background:#b9b9b9"></div><span class="abs" style="left:346.5px;top:141px;font-size:12px;line-height:16px;color:#111" id="pagelbl">Page:</span><div class="abs" style="left:384px;top:138px;width:41px;height:20px;background:#fff;border-top:1px solid #c9c9c9;border-left:1px solid #d6d6d6"></div><span class="abs" style="left:413.5px;top:141px;font-size:12px;line-height:16px;color:#111">2</span><span class="abs" style="left:428.5px;top:141px;font-size:12px;line-height:16px;color:#111;letter-spacing:0.6px">/ 2</span><svg class="abs" style="left:456px;top:139px" width="13" height="17"><path d="M0.8 8.5 L11.5 1 L11.5 16 Z" fill="#e8b92a" stroke="#c9961a" stroke-width="1"/></svg><svg class="abs" style="left:484px;top:139px" width="13" height="17"><path d="M11.5 8.5 L0.8 1 L0.8 16 Z" fill="#9b9b9b"/></svg><svg class="abs" style="left:505px;top:139px" width="14" height="17" viewBox="0 0 14 17"><rect x="0.8" y="0.8" width="12.4" height="15.4" rx="1" fill="#cfe2f6" stroke="#4a6fa5" stroke-width="1.2"/><path d="M5.5 6 L2.5 8.5 L5.5 11 Z M8.5 6 L11.5 8.5 L8.5 11 Z" fill="#1f4e94"/></svg><svg class="abs" style="left:529px;top:139px" width="14" height="17" viewBox="0 0 14 17"><rect x="0.8" y="0.8" width="12.4" height="15.4" rx="1" fill="#cfe2f6" stroke="#4a6fa5" stroke-width="1.2"/><path d="M7 2.5 L9 5 L5 5 Z M7 14.5 L9 12 L5 12 Z M2 8.5 L4.3 6.5 L4.3 10.5 Z M12 8.5 L9.7 6.5 L9.7 10.5 Z" fill="#1f4e94"/></svg><svg class="abs" style="left:552px;top:140px" width="17" height="17" viewBox="0 0 17 17"><circle cx="8.5" cy="8.5" r="7.3" fill="#cfe6fa" stroke="#3d7cc4" stroke-width="1.3"/><rect x="4.5" y="7.4" width="8" height="2.2" fill="#2a63b0"/></svg><svg class="abs" style="left:575px;top:140px" width="17" height="17" viewBox="0 0 17 17"><circle cx="8.5" cy="8.5" r="7.3" fill="#cfe6fa" stroke="#3d7cc4" stroke-width="1.3"/><rect x="4.5" y="7.4" width="8" height="2.2" fill="#2a63b0"/><rect x="7.4" y="4.5" width="2.2" height="8" fill="#2a63b0"/></svg><div class="abs" style="left:596px;top:138px;width:1px;height:20px;background:#b9b9b9"></div><span class="abs" style="left:606px;top:141px;font-size:12px;line-height:16px;color:#111" id="findlbl">Find:</span><div class="abs" style="left:639px;top:138px;width:160px;height:20px;background:#fff;border-top:1px solid #c0c0c0;border-left:1px solid #c9c9c9"></div><svg class="abs" style="left:805px;top:140px" width="16" height="16" viewBox="0 0 16 16"><rect x="0.5" y="1.5" width="2.5" height="13" fill="#9a9a9a"/><path d="M14.5 1 L14.5 15 L6 8 Z" fill="#9a9a9a"/><rect x="4" y="3" width="6" height="6" fill="#a4a4a4"/></svg><svg class="abs" style="left:829px;top:140px" width="16" height="16" viewBox="0 0 16 16"><rect x="13" y="1.5" width="2.5" height="13" fill="#9a9a9a"/><path d="M1.5 1 L1.5 15 L10 8 Z" fill="#9a9a9a"/><rect x="6" y="3" width="6" height="6" fill="#a4a4a4"/></svg><svg class="abs" style="left:853px;top:139px" width="16" height="18" viewBox="0 0 16 18"><text x="0" y="16" font-family="Liberation Sans,sans-serif" font-size="15" fill="#7a6be0">A</text><text x="9" y="9" font-family="Liberation Sans,sans-serif" font-weight="bold" font-size="10" fill="#c43fb0">a</text></svg>
<div class="abs" style="left:262px;top:161px;width:1243px;height:673px;background:#999"></div>
<div class="abs" style="left:477px;top:163px;width:812px;height:671px;background:#fff"></div>
<div class="abs" style="left:1505px;top:161px;width:15px;height:673px;background:#fff"></div>
<div class="abs" style="left:1505px;top:161px;width:15px;height:17px;background:#fff;border-bottom:1px solid #c4c4c4"></div>
<svg class="abs" style="left:1505px;top:161px" width="15" height="17"><path d="M4 10.5 L7.5 7 L11 10.5" fill="none" stroke="#555" stroke-width="1.3"/></svg>
<div class="abs" style="left:1505px;top:488px;width:15px;height:332px;background:#dcdcdc;border-top:1px solid #b0b0b0;border-bottom:1px solid #b0b0b0"></div>
<div class="abs" style="left:1509px;top:649px;width:7px;height:8px;background:linear-gradient(#555 1px,transparent 1px);background-size:7px 2px"></div>
<svg class="abs" style="left:1505px;top:820px" width="15" height="14"><path d="M4 5 L7.5 8.5 L11 5" fill="none" stroke="#555" stroke-width="1.3"/></svg>
<div class="abs" style="left:0;top:834px;width:1520px;height:3px;background:#eef4fb"></div>
<div id="status" class="abs"><span class="abs mono" style="left:0px;top:7px">Version:1.0.0.52</span><span class="abs mono" style="right:1px;top:6px">Current [QL1819_PLACEMENT_MB]</span></div>
<svg class="abs" style="left:0;top:0;will-change:transform" width="1521" height="859" viewBox="0 0 1521 859" id="pcb">
<text x="745.0" y="173.8" font-family="Liberation Mono,monospace" font-size="15.6" font-weight="normal" fill="#3c3c3c" text-anchor="start" textLength="280" lengthAdjust="spacingAndGlyphs" >ART FILM - Assembly_Bottom</text>
<text x="745.0" y="824.2" font-family="Liberation Mono,monospace" font-size="15.6" font-weight="normal" fill="#3c3c3c" text-anchor="start" textLength="280" lengthAdjust="spacingAndGlyphs" >ART FILM - Assembly_Bottom</text>
<path d="M699.5 435 L699.5 324 Q699.5 319.5 704 319.5 L725 319.5 L732 323.7 L766 323.7 Q770.8 323.7 770.8 328.5 L770.8 384 Q770.8 389.4 776 389.4 L829.5 389.4 Q834.8 389.4 834.8 384 L834.8 330.5 Q834.8 325.4 840 325.4 L913.8 325.4 L920.1 321.7 L992.8 321.7 L997 325.4 L1040.4 325.4" fill="none" stroke="#666666" stroke-width="1.0" />
<path d="M1097 325.4 L1128 325.4 L1150.4 344.5 L1170.5 344.5 Q1175.3 344.5 1175.3 349.5 L1175.3 411 Q1175.2 416.5 1171 418.5 A7.5 7.5 0 1 0 1171 431.9 Q1175.2 434 1175.3 439.5 L1175.3 693.6 L1147.6 721.1 L619.8 721.1" fill="none" stroke="#666666" stroke-width="1.0" />
<path d="M699.5 435 L691.7 444.5 L691.7 518 Q691.7 524.5 686 524.5 L612 524.5 Q606 525 604 531 Q602 538 596 540 Q591.9 541.5 591.9 546 L591.5 689 Q592 693 598 693.5 Q611 694 614 700 Q617 704 617 708 L617 721.1" fill="none" stroke="#666666" stroke-width="1.0" />
<rect x="587.7" y="518.2" width="19.8" height="27.2" rx="0" fill="none" stroke="#666666" stroke-width="1.0" />
<rect x="588.4" y="691.7" width="31.4" height="32.2" rx="0" fill="none" stroke="#666666" stroke-width="1.0" />
<circle cx="1166.3" cy="425.6" r="12.3" fill="none" stroke="#666666" stroke-width="1.0"/>
<circle cx="715.6" cy="333.5" r="7.0" fill="none" stroke="#666666" stroke-width="1.0"/>
<circle cx="733.3" cy="334.7" r="4.3" fill="none" stroke="#666666" stroke-width="1.0"/>
<path d="M750 344 L757.2 344 L753.6 348.3 Z" fill="none" stroke="#666666" stroke-width="0.8" />
<path d="M910.4 366.6 L987 366.6 Q992 366.6 992 372 L992 427.4 Q992 432.4 987 432.4 L877 432.4 Q871.6 432.4 871.6 427 L871.6 396.4 L876.8 389.4 L876.8 376 Q876.8 370.6 882 370.6 L904 370.6 Z" fill="none" stroke="#666666" stroke-width="1.0" />
<path d="M861.8 422.3 L852.2 414.4 A14.8 14.8 0 1 0 861.8 442.3 Z" fill="none" stroke="#666666" stroke-width="1.0" />
<circle cx="855.0" cy="428.7" r="6.9" fill="none" stroke="#666666" stroke-width="1.0"/>
<path d="M1010.5 364.3 A18.4 18.4 0 1 0 1025.2 382.4 L1013.8 382.4 A7 7 0 1 1 1010.5 376.3 Z" fill="none" stroke="#666666" stroke-width="1.0" />
<circle cx="1026.3" cy="367.1" r="8.0" fill="none" stroke="#c4c4c4" stroke-width="0.8"/>
<circle cx="1026.3" cy="367.1" r="4.2" fill="none" stroke="#dadada" stroke-width="0.7"/>
<text x="1026.6" y="369.2" font-family="Liberation Sans,sans-serif" font-size="5.8" font-weight="normal" fill="#555" text-anchor="middle" textLength="13" lengthAdjust="spacingAndGlyphs" >F1704</text>
<rect x="969.5" y="325.8" width="35.0" height="33.6" rx="0" fill="none" stroke="#858585" stroke-width="2.2" />
<text x="977.0" y="356.0" font-family="Liberation Sans,sans-serif" font-size="23" font-weight="normal" fill="#7c7c7c" text-anchor="start" textLength="11.5" lengthAdjust="spacingAndGlyphs" >W</text>
<text x="992.0" y="356.0" font-family="Liberation Sans,sans-serif" font-size="23" font-weight="normal" fill="#7c7c7c" text-anchor="start" textLength="8" lengthAdjust="spacingAndGlyphs" >P</text>
<text x="850.0" y="341.0" font-family="Liberation Sans,sans-serif" font-size="9" font-weight="normal" fill="#6a6a6a" text-anchor="middle" transform="rotate(90 850.0 341.0)" textLength="13" lengthAdjust="spacingAndGlyphs" >DRX</text>
<path d="M862 331 L857 336 L857 343 L862 348" fill="none" stroke="#7a7a7a" stroke-width="0.8" />
<path d="M862 334 L858.5 337.5 L858.5 342 L862 345.5" fill="none" stroke="#8a8a8a" stroke-width="0.7" />
<rect x="861.0" y="329.5" width="11.5" height="20.0" rx="0" fill="#757575" stroke="#4a4a4a" stroke-width="0.8" />
<rect x="864.0" y="332.0" width="2.4" height="3.4" rx="0" fill="#eee" stroke="none" stroke-width="0" />
<rect x="867.6" y="332.0" width="2.4" height="3.4" rx="0" fill="#eee" stroke="none" stroke-width="0" />
<text x="869.2" y="343.0" font-family="Liberation Sans,sans-serif" font-size="4.2" font-weight="bold" fill="#fff" text-anchor="middle" transform="rotate(90 869.2 343.0)" textLength="11" lengthAdjust="spacingAndGlyphs" >ANT1803</text>
<path d="M881.6 331 L876.6 336 L876.6 343 L881.6 348" fill="none" stroke="#7a7a7a" stroke-width="0.8" />
<path d="M881.6 334 L878.1 337.5 L878.1 342 L881.6 345.5" fill="none" stroke="#8a8a8a" stroke-width="0.7" />
<rect x="880.6" y="329.5" width="11.5" height="20.0" rx="0" fill="#757575" stroke="#4a4a4a" stroke-width="0.8" />
<rect x="883.6" y="332.0" width="2.4" height="3.4" rx="0" fill="#eee" stroke="none" stroke-width="0" />
<rect x="887.2" y="332.0" width="2.4" height="3.4" rx="0" fill="#eee" stroke="none" stroke-width="0" />
<text x="888.8" y="343.0" font-family="Liberation Sans,sans-serif" font-size="4.2" font-weight="bold" fill="#fff" text-anchor="middle" transform="rotate(90 888.8 343.0)" textLength="11" lengthAdjust="spacingAndGlyphs" >ANT1803</text>
<path d="M900.9 331 L895.9 336 L895.9 343 L900.9 348" fill="none" stroke="#7a7a7a" stroke-width="0.8" />
<path d="M900.9 334 L897.4 337.5 L897.4 342 L900.9 345.5" fill="none" stroke="#8a8a8a" stroke-width="0.7" />
<rect x="899.9" y="329.5" width="11.5" height="20.0" rx="0" fill="#757575" stroke="#4a4a4a" stroke-width="0.8" />
<rect x="902.9" y="332.0" width="2.4" height="3.4" rx="0" fill="#eee" stroke="none" stroke-width="0" />
<rect x="906.5" y="332.0" width="2.4" height="3.4" rx="0" fill="#eee" stroke="none" stroke-width="0" />
<text x="908.1" y="343.0" font-family="Liberation Sans,sans-serif" font-size="4.2" font-weight="bold" fill="#fff" text-anchor="middle" transform="rotate(90 908.1 343.0)" textLength="11" lengthAdjust="spacingAndGlyphs" >ANT1803</text>
<path d="M1150.5 353.3 L1156 348.1 L1169 353.3" fill="none" stroke="#6a6a6a" stroke-width="0.8" />
<path d="M1152.5 353.3 L1156.5 350.1 L1166 353.3" fill="none" stroke="#8a8a8a" stroke-width="0.7" />
<rect x="1149.4" y="352.3" width="20.4" height="10.2" rx="0" fill="#6c6c6c" stroke="#4a4a4a" stroke-width="0.8" />
<rect x="1160.5" y="354.3" width="3.0" height="2.4" rx="0" fill="#eee" stroke="none" stroke-width="0" />
<rect x="1160.5" y="358.3" width="3.0" height="2.4" rx="0" fill="#eee" stroke="none" stroke-width="0" />
<text x="1151.0" y="359.9" font-family="Liberation Sans,sans-serif" font-size="4.6" font-weight="bold" fill="#fff" text-anchor="start" textLength="17" lengthAdjust="spacingAndGlyphs" >ANT1701</text>
<path d="M1150.5 372.4 L1156 367.2 L1169 372.4" fill="none" stroke="#6a6a6a" stroke-width="0.8" />
<path d="M1152.5 372.4 L1156.5 369.2 L1166 372.4" fill="none" stroke="#8a8a8a" stroke-width="0.7" />
<rect x="1149.4" y="371.4" width="20.4" height="10.2" rx="0" fill="#6c6c6c" stroke="#4a4a4a" stroke-width="0.8" />
<rect x="1160.5" y="373.4" width="3.0" height="2.4" rx="0" fill="#eee" stroke="none" stroke-width="0" />
<rect x="1160.5" y="377.4" width="3.0" height="2.4" rx="0" fill="#eee" stroke="none" stroke-width="0" />
<text x="1151.0" y="379.0" font-family="Liberation Sans,sans-serif" font-size="4.6" font-weight="bold" fill="#fff" text-anchor="start" textLength="17" lengthAdjust="spacingAndGlyphs" >ANT1701</text>
<path d="M1150.5 391.3 L1156 386.1 L1169 391.3" fill="none" stroke="#6a6a6a" stroke-width="0.8" />
<path d="M1152.5 391.3 L1156.5 388.1 L1166 391.3" fill="none" stroke="#8a8a8a" stroke-width="0.7" />
<rect x="1149.4" y="390.3" width="20.4" height="10.2" rx="0" fill="#6c6c6c" stroke="#4a4a4a" stroke-width="0.8" />
<rect x="1160.5" y="392.3" width="3.0" height="2.4" rx="0" fill="#eee" stroke="none" stroke-width="0" />
<rect x="1160.5" y="396.3" width="3.0" height="2.4" rx="0" fill="#eee" stroke="none" stroke-width="0" />
<text x="1151.0" y="397.9" font-family="Liberation Sans,sans-serif" font-size="4.6" font-weight="bold" fill="#fff" text-anchor="start" textLength="17" lengthAdjust="spacingAndGlyphs" >ANT1701</text>
<text x="1112.7" y="367.2" font-family="Liberation Sans,sans-serif" font-size="9" font-weight="normal" fill="#6f6f6f" text-anchor="start" textLength="35.5" lengthAdjust="spacingAndGlyphs" >GPS/WIFI</text>
<circle cx="1128.5" cy="348.7" r="7.3" fill="none" stroke="#6a6a6a" stroke-width="0.8"/>
<rect x="1042.1" y="273.7" width="52.7" height="17.7" rx="0" fill="none" stroke="#b0b0b0" stroke-width="0.9" />
<rect x="1053.3" y="291.4" width="30.7" height="28.0" rx="0" fill="none" stroke="#b8b8b8" stroke-width="0.8" />
<path d="M1040.4 305.3 L1097 305.3" fill="none" stroke="#c4c4c4" stroke-width="0.8" />
<rect x="1045.2" y="305.3" width="46.2" height="30.3" rx="0" fill="none" stroke="#c4c4c4" stroke-width="0.7" />
<path d="M1058.7 305.3 L1058.7 319.4 M1078.7 305.3 L1078.7 319.4 M1091.4 319.4 L1091.4 336" fill="none" stroke="#c4c4c4" stroke-width="0.7" />
<rect x="1056.4" y="336.6" width="24.1" height="36.1" rx="0" fill="#f4f4f4" stroke="#c9c9c9" stroke-width="0.7" />
<rect x="1057.8" y="372.7" width="21.0" height="12.3" rx="0" fill="none" stroke="#c4c4c4" stroke-width="0.7" />
<path d="M1011.5 305.3 L1040.4 305.3 M1097 305.3 L1124 305.3" fill="none" stroke="#b4b4b4" stroke-width="1.0" />
<path d="M1018.5 305.2 L1040.4 305.2" fill="none" stroke="#727272" stroke-width="1.7" />
<path d="M1097 305.2 L1118.6 305.2" fill="none" stroke="#727272" stroke-width="1.7" />
<path d="M1040.4 304.6 L1040.4 417.6 L1097 417.6 L1097 304.6" fill="none" stroke="#7a7a7a" stroke-width="1.7" />
<text x="1076.4" y="346.2" font-family="Liberation Sans,sans-serif" font-size="21.6" font-weight="normal" fill="#000" text-anchor="middle" transform="rotate(-90 1076.4 346.2)" textLength="51.6" lengthAdjust="spacingAndGlyphs" >U1902</text>
<text x="1089.0" y="348.0" font-family="Liberation Sans,sans-serif" font-size="5" font-weight="normal" fill="#c8c8c8" text-anchor="middle" textLength="7" lengthAdjust="spacingAndGlyphs" >XX</text>
<text x="1088.0" y="354.0" font-family="Liberation Sans,sans-serif" font-size="5" font-weight="normal" fill="#c8c8c8" text-anchor="middle" textLength="7" lengthAdjust="spacingAndGlyphs" >NC</text>
<rect x="1030.0" y="330.1" width="8.0" height="16.6" rx="4" fill="none" stroke="#c0c0c0" stroke-width="0.7" />
<rect x="1032.0" y="332.2" width="4.0" height="12.4" rx="2" fill="#a9a9a9" stroke="#6f6f6f" stroke-width="0.8" />
<rect x="1030.0" y="402.1" width="8.0" height="16.6" rx="4" fill="none" stroke="#c0c0c0" stroke-width="0.7" />
<rect x="1032.0" y="404.2" width="4.0" height="12.4" rx="2" fill="#a9a9a9" stroke="#6f6f6f" stroke-width="0.8" />
<rect x="1098.8" y="329.9" width="8.0" height="16.6" rx="4" fill="none" stroke="#c0c0c0" stroke-width="0.7" />
<rect x="1100.8" y="332.0" width="4.0" height="12.4" rx="2" fill="#a9a9a9" stroke="#6f6f6f" stroke-width="0.8" />
<rect x="1098.8" y="355.1" width="8.0" height="16.6" rx="4" fill="none" stroke="#c0c0c0" stroke-width="0.7" />
<rect x="1100.8" y="357.2" width="4.0" height="12.4" rx="2" fill="#a9a9a9" stroke="#6f6f6f" stroke-width="0.8" />
<rect x="1098.8" y="401.9" width="8.0" height="16.6" rx="4" fill="none" stroke="#c0c0c0" stroke-width="0.7" />
<rect x="1100.8" y="404.0" width="4.0" height="12.4" rx="2" fill="#a9a9a9" stroke="#6f6f6f" stroke-width="0.8" />
<path d="M1034 352 L1034 403.5" fill="none" stroke="#6a6a6a" stroke-width="1.3" />
<path d="M1102.8 375.5 L1102.8 403" fill="none" stroke="#6a6a6a" stroke-width="1.3" />
<path d="M1040.4 351.9 A2.6 2.6 0 0 0 1040.4 357.1" fill="#ddd" stroke="#8a8a8a" stroke-width="0.8" />
<path d="M1040.4 383.4 A2.6 2.6 0 0 0 1040.4 388.6" fill="#ddd" stroke="#8a8a8a" stroke-width="0.8" />
<path d="M1097 348.4 A2.6 2.6 0 0 1 1097 353.6" fill="#ddd" stroke="#8a8a8a" stroke-width="0.8" />
<path d="M1097 383.4 A2.6 2.6 0 0 1 1097 388.6" fill="#ddd" stroke="#8a8a8a" stroke-width="0.8" />
<path d="M996.6 403 L1016.2 403 L1016.2 415.5 L1004 419.5 L996.6 416.5 Z" fill="none" stroke="#6a6a6a" stroke-width="0.8" />
<rect x="997.6" y="404.2" width="17.6" height="10.3" rx="0" fill="#ececec" stroke="#8a8a8a" stroke-width="0.6" />
<text x="998.2" y="412.0" font-family="Liberation Sans,sans-serif" font-size="5.2" font-weight="normal" fill="#222" text-anchor="start" textLength="16.5" lengthAdjust="spacingAndGlyphs" >ANT1802</text>
<path d="M996.6 420.5 L1016.2 420.5 L1016.2 433.0 L1004 437.0 L996.6 434.0 Z" fill="none" stroke="#6a6a6a" stroke-width="0.8" />
<rect x="997.6" y="421.7" width="17.6" height="10.3" rx="0" fill="#ececec" stroke="#8a8a8a" stroke-width="0.6" />
<text x="998.2" y="429.5" font-family="Liberation Sans,sans-serif" font-size="5.2" font-weight="normal" fill="#222" text-anchor="start" textLength="16.5" lengthAdjust="spacingAndGlyphs" >ANT1801</text>
<text x="1017.5" y="427.2" font-family="Liberation Sans,sans-serif" font-size="8.5" font-weight="normal" fill="#777" text-anchor="start" textLength="16" lengthAdjust="spacingAndGlyphs" >REC-</text>
<text x="1017.5" y="436.4" font-family="Liberation Sans,sans-serif" font-size="8.5" font-weight="normal" fill="#777" text-anchor="start" textLength="16" lengthAdjust="spacingAndGlyphs" >REC+</text>
<text x="1037.5" y="437.6" font-family="Liberation Sans,sans-serif" font-size="23.5" font-weight="normal" fill="#999" text-anchor="start" textLength="9.6" lengthAdjust="spacingAndGlyphs" >A</text>
<text x="1050.8" y="437.6" font-family="Liberation Sans,sans-serif" font-size="23.5" font-weight="normal" fill="#999" text-anchor="start" textLength="9.6" lengthAdjust="spacingAndGlyphs" >8</text>
<text x="1064.1" y="437.6" font-family="Liberation Sans,sans-serif" font-size="23.5" font-weight="normal" fill="#999" text-anchor="start" textLength="9.6" lengthAdjust="spacingAndGlyphs" >a</text>
<text x="1077.4" y="437.6" font-family="Liberation Sans,sans-serif" font-size="23.5" font-weight="normal" fill="#999" text-anchor="start" textLength="9.6" lengthAdjust="spacingAndGlyphs" >8</text>
<text x="1090.7" y="437.6" font-family="Liberation Sans,sans-serif" font-size="23.5" font-weight="normal" fill="#999" text-anchor="start" textLength="9.6" lengthAdjust="spacingAndGlyphs" >b</text>
<path d="M710.3 349.8 L756 349.8 Q762 349.8 762 356 L762 387 Q762 393 768 393 L820.5 393 Q827.6 393 827.6 400 L827.6 438.5 Q827.6 445.9 820.5 445.9 L709.5 445.9 Q702.3 445.9 702.3 438.5 L702.3 357 Q702.3 349.8 710.3 349.8 Z" fill="none" stroke="#6a6a6a" stroke-width="1.0" />
<path d="M711.5 355 L752.4 355 Q756.4 355 756.4 359 L756.4 392 Q756.4 397.5 762 397.5 L818 397.5 Q822.5 397.5 822.5 402 L822.5 436.5 Q822.5 441 818 441 L711.5 441 Q707.5 441 707.5 436.5 L707.5 359 Q707.5 355 711.5 355 Z" fill="none" stroke="#6a6a6a" stroke-width="1.0" />
<path d="M728.3 441 L728.3 445.9" fill="none" stroke="#6a6a6a" stroke-width="0.8" />
<text x="767.0" y="397.1" font-family="Liberation Sans,sans-serif" font-size="5.6" font-weight="bold" fill="#000" text-anchor="start" textLength="16.5" lengthAdjust="spacingAndGlyphs" >SH1709</text>
<path d="M816.5 450.5 L746 450.5 Q738.9 450.5 738.9 457.5 L738.9 464 Q738.9 469.6 733 469.6 L707 469.6 Q700.5 469.6 700.5 476 L700.5 516.4 L692.8 521.8 L696.5 522.3 L704.7 516.8 L704.7 479 Q704.7 474.5 709.5 474.5 L737 474.5 Q743.8 474.5 743.8 468 L743.8 460 Q743.8 456 748 456 L816.5 456 Z" fill="none" stroke="#6a6a6a" stroke-width="1.0" />
<text x="755.0" y="455.6" font-family="Liberation Sans,sans-serif" font-size="5.6" font-weight="bold" fill="#000" text-anchor="start" textLength="16.5" lengthAdjust="spacingAndGlyphs" >SH1708</text>
<rect x="699.8" y="461.2" width="35.2" height="7.0" rx="0" fill="none" stroke="#6a6a6a" stroke-width="1.0" />
<path d="M723 469.6 L723 474.5 M727 469.6 L727 474.5" fill="none" stroke="#999" stroke-width="0.6" />
<rect x="838.1" y="450.6" width="10.8" height="5.6" rx="0" fill="none" stroke="#6a6a6a" stroke-width="1.0" />
<path d="M827 445.2 L834 445.2 L830.5 449.2 Z" fill="none" stroke="#666666" stroke-width="0.8" />
<path d="M853 450.6 L870.5 450.6 L878.9 443.6 L921 443.6 Q927.1 443.6 927.1 450 L927.1 463.8 L914 476.4 L914 657 Q914 663.5 908 663.5 L848.3 663.5 L845.1 658 L904.5 658 Q909.5 658 909.5 653 L909.5 475 L922.2 462.4 L922.2 452.5 Q922.2 448.5 918 448.5 L880.5 448.5 L871.5 456.2 L853 456.2 Z" fill="none" stroke="#6a6a6a" stroke-width="1.0" />
<rect x="701.6" y="658.0" width="17.4" height="5.5" rx="0" fill="none" stroke="#6a6a6a" stroke-width="1.0" />
<path d="M736 658 L753.3 658 L756.8 663.5 L736 663.5 Z" fill="none" stroke="#6a6a6a" stroke-width="1.0" />
<path d="M773.3 658 L825.5 658 L829.4 663.5 L773.3 663.5 Z" fill="none" stroke="#6a6a6a" stroke-width="1.0" />
<path d="M919 591 L919 480.6 L943.3 454.3 L983.8 454.3 L990.8 448.4 L996.4 448.4 L988 459.3 L946.1 459.3 L924.5 482 L924.5 588 Q924.5 592.6 929.9 592.6 L929.9 597.5 L925.5 597.5 Q919 597.5 919 591 Z" fill="none" stroke="#6a6a6a" stroke-width="1.0" />
<path d="M945 447.2 L954 447.2 L949.5 452.6 Z" fill="none" stroke="#666666" stroke-width="0.8" />
<path d="M932.8 592.6 L1002 592.6 Q1006.9 592.6 1006.9 597.5 L1006.9 604.5 Q1006.9 609.4 1012 609.4 L1100 609.4 Q1106.4 609.4 1106.4 615.5 L1106.4 624.5 Q1106.4 629.7 1111.5 629.7 L1155.3 629.7 L1155.3 634.5 L1107 634.5 Q1101.5 634.5 1101.5 629 L1101.5 619.5 Q1101.5 614.6 1096.5 614.6 L1006 614.6 Q1000.6 614.6 1000.6 609.4 L1000.6 602 Q1000.6 597.5 996 597.5 L932.8 597.5 Z" fill="none" stroke="#6a6a6a" stroke-width="1.0" />
<path d="M1000 438.5 Q994.2 439 994.6 443.8 L1079 443.8 Q1084 443.5 1084 448.5 L1084 455 L1102 470 L1153.2 470 L1167.4 481.2 L1167.4 634.5 Q1172.4 632 1172.4 622 L1172.4 479.1 L1155.3 465.4 L1103.6 465.4 L1088.5 452.6 L1088.5 445 Q1088.5 438.5 1082 438.5 L1000 438.5 Z" fill="none" stroke="#6a6a6a" stroke-width="1.0" />
<text x="1105.0" y="469.5" font-family="Liberation Sans,sans-serif" font-size="5.6" font-weight="bold" fill="#000" text-anchor="start" textLength="16.5" lengthAdjust="spacingAndGlyphs" >SH1707</text>
<text x="1129.0" y="469.5" font-family="Liberation Sans,sans-serif" font-size="5.6" font-weight="bold" fill="#000" text-anchor="start" textLength="19.5" lengthAdjust="spacingAndGlyphs" >SH1707▸</text>
<path d="M932.8 603.1 L989 603.1 Q995.7 603.1 995.7 610 L995.7 626.6 L990.6 626.6 L990.6 612.5 Q990.6 608.4 986.5 608.4 L932.8 608.4 Z" fill="none" stroke="#6a6a6a" stroke-width="1.0" />
<path d="M926.6 603.1 L926.6 608.4 Q923 608.6 923 612.5 L923 658.5 Q923 663 927.5 663 L959.7 663 L959.7 668 L925 668 Q918.2 668 918.2 661.5 L918.2 610.5 Q918.2 603.1 926.6 603.1 Z" fill="none" stroke="#6a6a6a" stroke-width="1.0" />
<path d="M990.6 644.7 L995.7 644.7 L995.7 682 Q995.7 688.4 989.5 688.4 L982.7 688.4 L982.7 683.8 L987 683.8 Q990.6 683.8 990.6 680 Z" fill="none" stroke="#6a6a6a" stroke-width="1.0" />
<text x="943.0" y="607.6" font-family="Liberation Sans,sans-serif" font-size="5.6" font-weight="bold" fill="#000" text-anchor="start" textLength="16.5" lengthAdjust="spacingAndGlyphs" >SH1706</text>
<path d="M983.5 597.6 L992.5 597.6 L988 602.8 Z" fill="none" stroke="#666666" stroke-width="0.8" />
<path d="M1010.3 674.7 L1089.3 674.7 Q1097.3 674.7 1097.3 682.7 L1097.3 710.3 Q1097.3 718.3 1089.3 718.3 L1010.3 718.3 Q1002.3 718.3 1002.3 710.3 L1002.3 682.7 Q1002.3 674.7 1010.3 674.7 Z" fill="none" stroke="#6a6a6a" stroke-width="1.0" />
<path d="M1011.2 680 L1088.4 680 Q1092.4 680 1092.4 684 L1092.4 709.1 Q1092.4 713.1 1088.4 713.1 L1011.2 713.1 Q1007.2 713.1 1007.2 709.1 L1007.2 684 Q1007.2 680 1011.2 680 Z" fill="none" stroke="#6a6a6a" stroke-width="1.0" />
<path d="M1092.4 687.3 L1097.3 687.3" fill="none" stroke="#6a6a6a" stroke-width="0.8" />
<text x="1031.5" y="679.4" font-family="Liberation Sans,sans-serif" font-size="5.6" font-weight="bold" fill="#000" text-anchor="start" textLength="16.5" lengthAdjust="spacingAndGlyphs" >SH1705</text>
<path d="M1088.6 668.6 L1097.6 668.6 L1093.1 673.8 Z" fill="none" stroke="#666666" stroke-width="0.8" />
<path d="M649.2 582.4 L604 582.4 Q593.3 582.4 593.3 592 L593.3 680 Q593.3 686.9 600.5 686.9 L617.7 686.9 L625.4 693.8 L625.4 712 Q625.4 718.3 632 718.3 L688 718.3 Q694.6 718.3 694.6 712 L694.6 661.7 Q694.6 658 691.8 658 Q689.3 658 689.3 661.7 L689.3 709 Q689.3 713.4 685 713.4 L635 713.4 Q630.3 713.4 630.3 709 L630.3 691 L620.5 681.5 L603 681.5 Q598.2 681.5 598.2 677 L598.2 592.5 Q598.2 587.3 604 587.3 L649.2 587.3 Z" fill="none" stroke="#6a6a6a" stroke-width="1.0" />
<path d="M652 582.4 L677 582.4 Q681.3 582.4 681.3 578 L681.3 575.5 L686.5 575.5 L686.5 581 Q686.5 587.3 680 587.3 L652 587.3 Z" fill="none" stroke="#6a6a6a" stroke-width="1.0" />
<rect x="693.5" y="585.2" width="4.6" height="41.0" rx="0" fill="none" stroke="#6a6a6a" stroke-width="1.0" />
<text x="691.4" y="579.5" font-family="Liberation Sans,sans-serif" font-size="9" font-weight="bold" fill="#222" text-anchor="middle" >x</text>
<rect x="611.0" y="535.2" width="66.8" height="37.2" rx="18.6" fill="none" stroke="#6a6a6a" stroke-width="1.0" />
<rect x="626.8" y="539.5" width="34.9" height="28.5" rx="0" fill="none" stroke="#666" stroke-width="1.2" />
<rect x="629.2" y="541.7" width="13.2" height="24.0" rx="0" fill="none" stroke="#8a8a8a" stroke-width="0.7" />
<rect x="646.0" y="541.7" width="13.4" height="24.0" rx="0" fill="none" stroke="#8a8a8a" stroke-width="0.7" />
<path d="M629.2 558 L642.4 558 M646 558 L659.4 558" fill="none" stroke="#9a9a9a" stroke-width="0.6" />
<text x="638.6" y="553.8" font-family="Liberation Sans,sans-serif" font-size="7" font-weight="normal" fill="#111" text-anchor="middle" transform="rotate(-90 638.6 553.8)" textLength="17.5" lengthAdjust="spacingAndGlyphs" >D1003</text>
<text x="655.6" y="553.8" font-family="Liberation Sans,sans-serif" font-size="7" font-weight="normal" fill="#111" text-anchor="middle" transform="rotate(-90 655.6 553.8)" textLength="17.5" lengthAdjust="spacingAndGlyphs" >D1006</text>
<path d="M639.6 530 L647.6 530 M643.6 526 L643.6 534" fill="none" stroke="#555" stroke-width="1.2" />
<path d="M640.3 576.9 L648.3 576.9" fill="none" stroke="#555" stroke-width="1.5" />
<rect x="680.9" y="539.5" width="6.0" height="10.8" rx="0" fill="none" stroke="#6a6a6a" stroke-width="1.0" />
<circle cx="603.5" cy="552.4" r="4.0" fill="none" stroke="#c2c2c2" stroke-width="0.8"/>
<text x="603.5" y="553.6" font-family="Liberation Sans,sans-serif" font-size="2.4" font-weight="normal" fill="#999" text-anchor="middle" >TP1601</text>
<circle cx="603.5" cy="569.5" r="4.0" fill="none" stroke="#c2c2c2" stroke-width="0.8"/>
<text x="603.5" y="570.7" font-family="Liberation Sans,sans-serif" font-size="2.4" font-weight="normal" fill="#999" text-anchor="middle" >TP1601</text>
<text x="612.0" y="574.0" font-family="Liberation Sans,sans-serif" font-size="6" font-weight="normal" fill="#555" text-anchor="middle" transform="rotate(90 612.0 574.0)" >X</text>
<text x="616.0" y="572.0" font-family="Liberation Sans,sans-serif" font-size="5" font-weight="normal" fill="#888" text-anchor="middle" transform="rotate(90 616.0 572.0)" >R</text>
<path d="M607.5 536.5 L613 536.5 M607.5 538.5 L613 541" fill="none" stroke="#777" stroke-width="0.6" />
<text x="737.8" y="425.6" font-family="Liberation Sans,sans-serif" font-size="3.2" font-weight="normal" fill="#5e5e5e" text-anchor="middle" textLength="6" lengthAdjust="spacingAndGlyphs" >C2129</text>
<text x="790.5" y="417.4" font-family="Liberation Sans,sans-serif" font-size="3.2" font-weight="normal" fill="#5e5e5e" text-anchor="middle" textLength="6" lengthAdjust="spacingAndGlyphs" >C216</text>
<rect x="774.5" y="431.3" width="1.2" height="5.4" rx="0" fill="#b4b4b4" stroke="none" stroke-width="0" />
<rect x="776.7" y="431.3" width="1.2" height="5.4" rx="0" fill="#b4b4b4" stroke="none" stroke-width="0" />
<path d="M774.5 432.9 h3.4 M774.5 435.1 h3.4" fill="none" stroke="#959595" stroke-width="0.6" />
<text x="744.9" y="434.1" font-family="Liberation Sans,sans-serif" font-size="4.6" font-weight="bold" fill="#2a2a2a" text-anchor="middle" >✕</text>
<rect x="726.3" y="427.4" width="8.4" height="4.8" rx="0" fill="none" stroke="#bdbdbd" stroke-width="0.6" stroke-dasharray="1 0.6"/>
<text x="730.5" y="430.9" font-family="Liberation Sans,sans-serif" font-size="3.2" font-weight="normal" fill="#4a4a4a" text-anchor="middle" textLength="7" lengthAdjust="spacingAndGlyphs" >C2199</text>
<text x="789.6" y="403.7" font-family="Liberation Sans,sans-serif" font-size="3.2" font-weight="normal" fill="#5e5e5e" text-anchor="middle" textLength="6" lengthAdjust="spacingAndGlyphs" >R2355</text>
<text x="768.0" y="427.0" font-family="Liberation Sans,sans-serif" font-size="3.2" font-weight="normal" fill="#5e5e5e" text-anchor="middle" textLength="6" lengthAdjust="spacingAndGlyphs" >C785</text>
<rect x="735.6" y="375.6" width="8.4" height="4.8" rx="0" fill="none" stroke="#bdbdbd" stroke-width="0.6" stroke-dasharray="1 0.6"/>
<text x="739.8" y="379.1" font-family="Liberation Sans,sans-serif" font-size="3.2" font-weight="normal" fill="#4a4a4a" text-anchor="middle" textLength="7" lengthAdjust="spacingAndGlyphs" >C802</text>
<text x="715.1" y="363.9" font-family="Liberation Sans,sans-serif" font-size="3.2" font-weight="normal" fill="#5e5e5e" text-anchor="middle" textLength="6" lengthAdjust="spacingAndGlyphs" >R3831</text>
<rect x="746.3" y="385.6" width="1.2" height="5.4" rx="0" fill="#b4b4b4" stroke="none" stroke-width="0" />
<rect x="748.5" y="385.6" width="1.2" height="5.4" rx="0" fill="#b4b4b4" stroke="none" stroke-width="0" />
<path d="M746.3 387.2 h3.4 M746.3 389.4 h3.4" fill="none" stroke="#959595" stroke-width="0.6" />
<text x="737.7" y="437.7" font-family="Liberation Sans,sans-serif" font-size="3.2" font-weight="normal" fill="#5e5e5e" text-anchor="middle" textLength="6" lengthAdjust="spacingAndGlyphs" >L2411</text>
<rect x="768.0" y="417.6" width="1.2" height="5.4" rx="0" fill="#b4b4b4" stroke="none" stroke-width="0" />
<rect x="770.2" y="417.6" width="1.2" height="5.4" rx="0" fill="#b4b4b4" stroke="none" stroke-width="0" />
<path d="M768.0 419.2 h3.4 M768.0 421.4 h3.4" fill="none" stroke="#959595" stroke-width="0.6" />
<rect x="769.6" y="430.9" width="1.2" height="5.4" rx="0" fill="#b4b4b4" stroke="none" stroke-width="0" />
<rect x="771.8" y="430.9" width="1.2" height="5.4" rx="0" fill="#b4b4b4" stroke="none" stroke-width="0" />
<path d="M769.6 432.5 h3.4 M769.6 434.7 h3.4" fill="none" stroke="#959595" stroke-width="0.6" />
<text x="723.2" y="362.3" font-family="Liberation Sans,sans-serif" font-size="3.2" font-weight="normal" fill="#5e5e5e" text-anchor="middle" textLength="6" lengthAdjust="spacingAndGlyphs" >C1197</text>
<rect x="789.9" y="406.4" width="1.2" height="5.4" rx="0" fill="#b4b4b4" stroke="none" stroke-width="0" />
<rect x="792.1" y="406.4" width="1.2" height="5.4" rx="0" fill="#b4b4b4" stroke="none" stroke-width="0" />
<path d="M789.9 408.0 h3.4 M789.9 410.2 h3.4" fill="none" stroke="#959595" stroke-width="0.6" />
<rect x="749.7" y="360.0" width="1.2" height="5.4" rx="0" fill="#b4b4b4" stroke="none" stroke-width="0" />
<rect x="751.9" y="360.0" width="1.2" height="5.4" rx="0" fill="#b4b4b4" stroke="none" stroke-width="0" />
<path d="M749.7 361.6 h3.4 M749.7 363.8 h3.4" fill="none" stroke="#959595" stroke-width="0.6" />
<rect x="797.0" y="415.9" width="1.2" height="5.4" rx="0" fill="#b4b4b4" stroke="none" stroke-width="0" />
<rect x="799.2" y="415.9" width="1.2" height="5.4" rx="0" fill="#b4b4b4" stroke="none" stroke-width="0" />
<path d="M797.0 417.5 h3.4 M797.0 419.7 h3.4" fill="none" stroke="#959595" stroke-width="0.6" />
<rect x="749.7" y="402.3" width="1.2" height="5.4" rx="0" fill="#b4b4b4" stroke="none" stroke-width="0" />
<rect x="751.9" y="402.3" width="1.2" height="5.4" rx="0" fill="#b4b4b4" stroke="none" stroke-width="0" />
<path d="M749.7 403.9 h3.4 M749.7 406.1 h3.4" fill="none" stroke="#959595" stroke-width="0.6" />
<text x="778.0" y="421.3" font-family="Liberation Sans,sans-serif" font-size="3.2" font-weight="normal" fill="#5e5e5e" text-anchor="middle" textLength="6" lengthAdjust="spacingAndGlyphs" >C978</text>
<text x="727.0" y="371.9" font-family="Liberation Sans,sans-serif" font-size="3.2" font-weight="normal" fill="#5e5e5e" text-anchor="middle" textLength="6" lengthAdjust="spacingAndGlyphs" >R2890</text>
<text x="747.5" y="398.0" font-family="Liberation Sans,sans-serif" font-size="3.2" font-weight="normal" fill="#5e5e5e" text-anchor="middle" textLength="6" lengthAdjust="spacingAndGlyphs" >C2768</text>
<text x="723.4" y="423.7" font-family="Liberation Sans,sans-serif" font-size="3.2" font-weight="normal" fill="#5e5e5e" text-anchor="middle" textLength="6" lengthAdjust="spacingAndGlyphs" >C298</text>
<rect x="726.3" y="393.4" width="1.2" height="5.4" rx="0" fill="#b4b4b4" stroke="none" stroke-width="0" />
<rect x="728.5" y="393.4" width="1.2" height="5.4" rx="0" fill="#b4b4b4" stroke="none" stroke-width="0" />
<path d="M726.3 395.0 h3.4 M726.3 397.2 h3.4" fill="none" stroke="#959595" stroke-width="0.6" />
<rect x="739.1" y="395.0" width="1.2" height="5.4" rx="0" fill="#b4b4b4" stroke="none" stroke-width="0" />
<rect x="741.3" y="395.0" width="1.2" height="5.4" rx="0" fill="#b4b4b4" stroke="none" stroke-width="0" />
<path d="M739.1 396.6 h3.4 M739.1 398.8 h3.4" fill="none" stroke="#959595" stroke-width="0.6" />
<rect x="802.3" y="422.9" width="1.2" height="5.4" rx="0" fill="#b4b4b4" stroke="none" stroke-width="0" />
<rect x="804.5" y="422.9" width="1.2" height="5.4" rx="0" fill="#b4b4b4" stroke="none" stroke-width="0" />
<path d="M802.3 424.5 h3.4 M802.3 426.7 h3.4" fill="none" stroke="#959595" stroke-width="0.6" />
<rect x="732.6" y="415.9" width="1.2" height="5.4" rx="0" fill="#b4b4b4" stroke="none" stroke-width="0" />
<rect x="734.8" y="415.9" width="1.2" height="5.4" rx="0" fill="#b4b4b4" stroke="none" stroke-width="0" />
<path d="M732.6 417.5 h3.4 M732.6 419.7 h3.4" fill="none" stroke="#959595" stroke-width="0.6" />
<rect x="732.9" y="396.7" width="1.2" height="5.4" rx="0" fill="#b4b4b4" stroke="none" stroke-width="0" />
<rect x="735.1" y="396.7" width="1.2" height="5.4" rx="0" fill="#b4b4b4" stroke="none" stroke-width="0" />
<path d="M732.9 398.3 h3.4 M732.9 400.5 h3.4" fill="none" stroke="#959595" stroke-width="0.6" />
<text x="749.8" y="380.2" font-family="Liberation Sans,sans-serif" font-size="3.2" font-weight="normal" fill="#5e5e5e" text-anchor="middle" textLength="6" lengthAdjust="spacingAndGlyphs" >C2115</text>
<text x="735.3" y="605.8" font-family="Liberation Sans,sans-serif" font-size="3.2" font-weight="normal" fill="#5e5e5e" text-anchor="middle" textLength="6" lengthAdjust="spacingAndGlyphs" >C3597</text>
<text x="752.9" y="594.2" font-family="Liberation Sans,sans-serif" font-size="3.2" font-weight="normal" fill="#5e5e5e" text-anchor="middle" textLength="6" lengthAdjust="spacingAndGlyphs" >C748</text>
<rect x="792.2" y="637.7" width="8.4" height="4.8" rx="0" fill="none" stroke="#bdbdbd" stroke-width="0.6" stroke-dasharray="1 0.6"/>
<text x="796.4" y="641.2" font-family="Liberation Sans,sans-serif" font-size="3.2" font-weight="normal" fill="#4a4a4a" text-anchor="middle" textLength="7" lengthAdjust="spacingAndGlyphs" >R3988</text>
<rect x="817.8" y="603.4" width="8.4" height="4.8" rx="0" fill="none" stroke="#bdbdbd" stroke-width="0.6" stroke-dasharray="1 0.6"/>
<text x="822.0" y="606.9" font-family="Liberation Sans,sans-serif" font-size="3.2" font-weight="normal" fill="#4a4a4a" text-anchor="middle" textLength="7" lengthAdjust="spacingAndGlyphs" >C1835</text>
<text x="786.9" y="596.0" font-family="Liberation Sans,sans-serif" font-size="3.2" font-weight="normal" fill="#5e5e5e" text-anchor="middle" textLength="6" lengthAdjust="spacingAndGlyphs" >L811</text>
<rect x="778.1" y="603.1" width="1.2" height="5.4" rx="0" fill="#b4b4b4" stroke="none" stroke-width="0" />
<rect x="780.3" y="603.1" width="1.2" height="5.4" rx="0" fill="#b4b4b4" stroke="none" stroke-width="0" />
<path d="M778.1 604.7 h3.4 M778.1 606.9 h3.4" fill="none" stroke="#959595" stroke-width="0.6" />
<rect x="809.6" y="632.3" width="8.4" height="4.8" rx="0" fill="none" stroke="#bdbdbd" stroke-width="0.6" stroke-dasharray="1 0.6"/>
<text x="813.8" y="635.8" font-family="Liberation Sans,sans-serif" font-size="3.2" font-weight="normal" fill="#4a4a4a" text-anchor="middle" textLength="7" lengthAdjust="spacingAndGlyphs" >L3334</text>
<text x="765.0" y="644.6" font-family="Liberation Sans,sans-serif" font-size="3.2" font-weight="normal" fill="#5e5e5e" text-anchor="middle" textLength="6" lengthAdjust="spacingAndGlyphs" >C3029</text>
<text x="797.2" y="597.1" font-family="Liberation Sans,sans-serif" font-size="3.2" font-weight="normal" fill="#5e5e5e" text-anchor="middle" textLength="6" lengthAdjust="spacingAndGlyphs" >C2151</text>
<rect x="784.4" y="646.8" width="1.2" height="5.4" rx="0" fill="#b4b4b4" stroke="none" stroke-width="0" />
<rect x="786.6" y="646.8" width="1.2" height="5.4" rx="0" fill="#b4b4b4" stroke="none" stroke-width="0" />
<path d="M784.4 648.4 h3.4 M784.4 650.6 h3.4" fill="none" stroke="#959595" stroke-width="0.6" />
<text x="810.2" y="615.0" font-family="Liberation Sans,sans-serif" font-size="3.2" font-weight="normal" fill="#5e5e5e" text-anchor="middle" textLength="6" lengthAdjust="spacingAndGlyphs" >C3504</text>
<text x="811.5" y="604.2" font-family="Liberation Sans,sans-serif" font-size="3.2" font-weight="normal" fill="#5e5e5e" text-anchor="middle" textLength="6" lengthAdjust="spacingAndGlyphs" >R3150</text>
<text x="731.7" y="628.5" font-family="Liberation Sans,sans-serif" font-size="3.2" font-weight="normal" fill="#5e5e5e" text-anchor="middle" textLength="6" lengthAdjust="spacingAndGlyphs" >R2895</text>
<text x="808.2" y="588.2" font-family="Liberation Sans,sans-serif" font-size="3.2" font-weight="normal" fill="#5e5e5e" text-anchor="middle" textLength="6" lengthAdjust="spacingAndGlyphs" >R3964</text>
<text x="771.7" y="633.5" font-family="Liberation Sans,sans-serif" font-size="3.2" font-weight="normal" fill="#5e5e5e" text-anchor="middle" textLength="6" lengthAdjust="spacingAndGlyphs" >L1575</text>
<text x="728.0" y="634.5" font-family="Liberation Sans,sans-serif" font-size="3.2" font-weight="normal" fill="#5e5e5e" text-anchor="middle" textLength="6" lengthAdjust="spacingAndGlyphs" >L623</text>
<text x="811.9" y="597.9" font-family="Liberation Sans,sans-serif" font-size="4.6" font-weight="bold" fill="#2a2a2a" text-anchor="middle" >✕</text>
<text x="756.7" y="615.7" font-family="Liberation Sans,sans-serif" font-size="3.2" font-weight="normal" fill="#5e5e5e" text-anchor="middle" textLength="6" lengthAdjust="spacingAndGlyphs" >R3237</text>
<rect x="821.2" y="633.9" width="8.4" height="4.8" rx="0" fill="none" stroke="#bdbdbd" stroke-width="0.6" stroke-dasharray="1 0.6"/>
<text x="825.4" y="637.4" font-family="Liberation Sans,sans-serif" font-size="3.2" font-weight="normal" fill="#4a4a4a" text-anchor="middle" textLength="7" lengthAdjust="spacingAndGlyphs" >C728</text>
<rect x="724.7" y="636.5" width="8.4" height="4.8" rx="0" fill="none" stroke="#bdbdbd" stroke-width="0.6" stroke-dasharray="1 0.6"/>
<text x="728.9" y="640.0" font-family="Liberation Sans,sans-serif" font-size="3.2" font-weight="normal" fill="#4a4a4a" text-anchor="middle" textLength="7" lengthAdjust="spacingAndGlyphs" >R2495</text>
<text x="728.9" y="590.2" font-family="Liberation Sans,sans-serif" font-size="3.2" font-weight="normal" fill="#5e5e5e" text-anchor="middle" textLength="6" lengthAdjust="spacingAndGlyphs" >C1048</text>
<rect x="730.8" y="592.8" width="1.2" height="5.4" rx="0" fill="#b4b4b4" stroke="none" stroke-width="0" />
<rect x="733.0" y="592.8" width="1.2" height="5.4" rx="0" fill="#b4b4b4" stroke="none" stroke-width="0" />
<path d="M730.8 594.4 h3.4 M730.8 596.6 h3.4" fill="none" stroke="#959595" stroke-width="0.6" />
<text x="751.7" y="585.4" font-family="Liberation Sans,sans-serif" font-size="3.2" font-weight="normal" fill="#5e5e5e" text-anchor="middle" textLength="6" lengthAdjust="spacingAndGlyphs" >R530</text>
<rect x="745.4" y="645.7" width="8.4" height="4.8" rx="0" fill="none" stroke="#bdbdbd" stroke-width="0.6" stroke-dasharray="1 0.6"/>
<text x="749.6" y="649.2" font-family="Liberation Sans,sans-serif" font-size="3.2" font-weight="normal" fill="#4a4a4a" text-anchor="middle" textLength="7" lengthAdjust="spacingAndGlyphs" >C3401</text>
<rect x="768.8" y="576.7" width="1.2" height="5.4" rx="0" fill="#b4b4b4" stroke="none" stroke-width="0" />
<rect x="771.0" y="576.7" width="1.2" height="5.4" rx="0" fill="#b4b4b4" stroke="none" stroke-width="0" />
<path d="M768.8 578.3 h3.4 M768.8 580.5 h3.4" fill="none" stroke="#959595" stroke-width="0.6" />
<text x="826.5" y="629.3" font-family="Liberation Sans,sans-serif" font-size="3.2" font-weight="normal" fill="#5e5e5e" text-anchor="middle" textLength="6" lengthAdjust="spacingAndGlyphs" >C2226</text>
<rect x="755.7" y="640.6" width="1.2" height="5.4" rx="0" fill="#b4b4b4" stroke="none" stroke-width="0" />
<rect x="757.9" y="640.6" width="1.2" height="5.4" rx="0" fill="#b4b4b4" stroke="none" stroke-width="0" />
<path d="M755.7 642.2 h3.4 M755.7 644.4 h3.4" fill="none" stroke="#959595" stroke-width="0.6" />
<text x="725.8" y="579.5" font-family="Liberation Sans,sans-serif" font-size="3.2" font-weight="normal" fill="#5e5e5e" text-anchor="middle" textLength="6" lengthAdjust="spacingAndGlyphs" >C413</text>
<text x="827.7" y="642.8" font-family="Liberation Sans,sans-serif" font-size="3.2" font-weight="normal" fill="#5e5e5e" text-anchor="middle" textLength="6" lengthAdjust="spacingAndGlyphs" >R740</text>
<rect x="809.8" y="646.1" width="1.2" height="5.4" rx="0" fill="#b4b4b4" stroke="none" stroke-width="0" />
<rect x="812.0" y="646.1" width="1.2" height="5.4" rx="0" fill="#b4b4b4" stroke="none" stroke-width="0" />
<path d="M809.8 647.7 h3.4 M809.8 649.9 h3.4" fill="none" stroke="#959595" stroke-width="0.6" />
<text x="773.5" y="618.5" font-family="Liberation Sans,sans-serif" font-size="3.2" font-weight="normal" fill="#5e5e5e" text-anchor="middle" textLength="6" lengthAdjust="spacingAndGlyphs" >R3990</text>
<rect x="732.6" y="615.3" width="1.2" height="5.4" rx="0" fill="#b4b4b4" stroke="none" stroke-width="0" />
<rect x="734.8" y="615.3" width="1.2" height="5.4" rx="0" fill="#b4b4b4" stroke="none" stroke-width="0" />
<path d="M732.6 616.9 h3.4 M732.6 619.1 h3.4" fill="none" stroke="#959595" stroke-width="0.6" />
<text x="811.3" y="622.3" font-family="Liberation Sans,sans-serif" font-size="3.2" font-weight="normal" fill="#5e5e5e" text-anchor="middle" textLength="6" lengthAdjust="spacingAndGlyphs" >C3044</text>
<text x="781.3" y="615.2" font-family="Liberation Sans,sans-serif" font-size="3.2" font-weight="normal" fill="#5e5e5e" text-anchor="middle" textLength="6" lengthAdjust="spacingAndGlyphs" >C3095</text>
<text x="803.7" y="648.7" font-family="Liberation Sans,sans-serif" font-size="3.2" font-weight="normal" fill="#5e5e5e" text-anchor="middle" textLength="6" lengthAdjust="spacingAndGlyphs" >C1021</text>
<rect x="773.4" y="591.0" width="8.4" height="4.8" rx="0" fill="none" stroke="#bdbdbd" stroke-width="0.6" stroke-dasharray="1 0.6"/>
<text x="777.6" y="594.5" font-family="Liberation Sans,sans-serif" font-size="3.2" font-weight="normal" fill="#4a4a4a" text-anchor="middle" textLength="7" lengthAdjust="spacingAndGlyphs" >C1534</text>
<rect x="821.6" y="616.6" width="1.2" height="5.4" rx="0" fill="#b4b4b4" stroke="none" stroke-width="0" />
<rect x="823.8" y="616.6" width="1.2" height="5.4" rx="0" fill="#b4b4b4" stroke="none" stroke-width="0" />
<path d="M821.6 618.2 h3.4 M821.6 620.4 h3.4" fill="none" stroke="#959595" stroke-width="0.6" />
<text x="826.9" y="649.5" font-family="Liberation Sans,sans-serif" font-size="3.2" font-weight="normal" fill="#5e5e5e" text-anchor="middle" textLength="6" lengthAdjust="spacingAndGlyphs" >R1985</text>
<text x="742.3" y="599.6" font-family="Liberation Sans,sans-serif" font-size="3.2" font-weight="normal" fill="#5e5e5e" text-anchor="middle" textLength="6" lengthAdjust="spacingAndGlyphs" >C1601</text>
<text x="813.0" y="626.6" font-family="Liberation Sans,sans-serif" font-size="3.2" font-weight="normal" fill="#5e5e5e" text-anchor="middle" textLength="6" lengthAdjust="spacingAndGlyphs" >R3989</text>
<text x="748.7" y="605.4" font-family="Liberation Sans,sans-serif" font-size="3.2" font-weight="normal" fill="#5e5e5e" text-anchor="middle" textLength="6" lengthAdjust="spacingAndGlyphs" >L781</text>
<text x="760.0" y="649.8" font-family="Liberation Sans,sans-serif" font-size="3.2" font-weight="normal" fill="#5e5e5e" text-anchor="middle" textLength="6" lengthAdjust="spacingAndGlyphs" >R3310</text>
<text x="761.6" y="588.6" font-family="Liberation Sans,sans-serif" font-size="3.2" font-weight="normal" fill="#5e5e5e" text-anchor="middle" textLength="6" lengthAdjust="spacingAndGlyphs" >C1503</text>
<rect x="793.3" y="630.4" width="8.4" height="4.8" rx="0" fill="none" stroke="#bdbdbd" stroke-width="0.6" stroke-dasharray="1 0.6"/>
<text x="797.5" y="633.9" font-family="Liberation Sans,sans-serif" font-size="3.2" font-weight="normal" fill="#4a4a4a" text-anchor="middle" textLength="7" lengthAdjust="spacingAndGlyphs" >R321</text>
<rect x="735.0" y="646.9" width="1.2" height="5.4" rx="0" fill="#b4b4b4" stroke="none" stroke-width="0" />
<rect x="737.2" y="646.9" width="1.2" height="5.4" rx="0" fill="#b4b4b4" stroke="none" stroke-width="0" />
<path d="M735.0 648.5 h3.4 M735.0 650.7 h3.4" fill="none" stroke="#959595" stroke-width="0.6" />
<text x="798.2" y="585.8" font-family="Liberation Sans,sans-serif" font-size="4.6" font-weight="bold" fill="#2a2a2a" text-anchor="middle" >✕</text>
<text x="819.6" y="614.6" font-family="Liberation Sans,sans-serif" font-size="3.2" font-weight="normal" fill="#5e5e5e" text-anchor="middle" textLength="6" lengthAdjust="spacingAndGlyphs" >R2388</text>
<rect x="782.1" y="575.5" width="8.4" height="4.8" rx="0" fill="none" stroke="#bdbdbd" stroke-width="0.6" stroke-dasharray="1 0.6"/>
<text x="786.3" y="579.0" font-family="Liberation Sans,sans-serif" font-size="3.2" font-weight="normal" fill="#4a4a4a" text-anchor="middle" textLength="7" lengthAdjust="spacingAndGlyphs" >L2892</text>
<text x="740.6" y="616.0" font-family="Liberation Sans,sans-serif" font-size="3.2" font-weight="normal" fill="#5e5e5e" text-anchor="middle" textLength="6" lengthAdjust="spacingAndGlyphs" >C1110</text>
<rect x="773.3" y="637.2" width="1.2" height="5.4" rx="0" fill="#b4b4b4" stroke="none" stroke-width="0" />
<rect x="775.5" y="637.2" width="1.2" height="5.4" rx="0" fill="#b4b4b4" stroke="none" stroke-width="0" />
<path d="M773.3 638.8 h3.4 M773.3 641.0 h3.4" fill="none" stroke="#959595" stroke-width="0.6" />
<text x="781.4" y="642.6" font-family="Liberation Sans,sans-serif" font-size="3.2" font-weight="normal" fill="#5e5e5e" text-anchor="middle" textLength="6" lengthAdjust="spacingAndGlyphs" >R810</text>
<rect x="737.4" y="629.1" width="8.4" height="4.8" rx="0" fill="none" stroke="#bdbdbd" stroke-width="0.6" stroke-dasharray="1 0.6"/>
<text x="741.6" y="632.6" font-family="Liberation Sans,sans-serif" font-size="3.2" font-weight="normal" fill="#4a4a4a" text-anchor="middle" textLength="7" lengthAdjust="spacingAndGlyphs" >C2912</text>
<rect x="767.4" y="607.4" width="1.2" height="5.4" rx="0" fill="#b4b4b4" stroke="none" stroke-width="0" />
<rect x="769.6" y="607.4" width="1.2" height="5.4" rx="0" fill="#b4b4b4" stroke="none" stroke-width="0" />
<path d="M767.4 609.0 h3.4 M767.4 611.2 h3.4" fill="none" stroke="#959595" stroke-width="0.6" />
<text x="800.2" y="601.6" font-family="Liberation Sans,sans-serif" font-size="3.2" font-weight="normal" fill="#5e5e5e" text-anchor="middle" textLength="6" lengthAdjust="spacingAndGlyphs" >L501</text>
<text x="811.3" y="580.9" font-family="Liberation Sans,sans-serif" font-size="4.6" font-weight="bold" fill="#2a2a2a" text-anchor="middle" >✕</text>
<text x="815.9" y="586.9" font-family="Liberation Sans,sans-serif" font-size="3.2" font-weight="normal" fill="#5e5e5e" text-anchor="middle" textLength="6" lengthAdjust="spacingAndGlyphs" >C2044</text>
<rect x="799.8" y="606.3" width="1.2" height="5.4" rx="0" fill="#b4b4b4" stroke="none" stroke-width="0" />
<rect x="802.0" y="606.3" width="1.2" height="5.4" rx="0" fill="#b4b4b4" stroke="none" stroke-width="0" />
<path d="M799.8 607.9 h3.4 M799.8 610.1 h3.4" fill="none" stroke="#959595" stroke-width="0.6" />
<text x="777.3" y="651.3" font-family="Liberation Sans,sans-serif" font-size="3.2" font-weight="normal" fill="#5e5e5e" text-anchor="middle" textLength="6" lengthAdjust="spacingAndGlyphs" >L2911</text>
<rect x="788.7" y="583.3" width="1.2" height="5.4" rx="0" fill="#b4b4b4" stroke="none" stroke-width="0" />
<rect x="790.9" y="583.3" width="1.2" height="5.4" rx="0" fill="#b4b4b4" stroke="none" stroke-width="0" />
<path d="M788.7 584.9 h3.4 M788.7 587.1 h3.4" fill="none" stroke="#959595" stroke-width="0.6" />
<rect x="727.8" y="615.4" width="1.2" height="5.4" rx="0" fill="#b4b4b4" stroke="none" stroke-width="0" />
<rect x="730.0" y="615.4" width="1.2" height="5.4" rx="0" fill="#b4b4b4" stroke="none" stroke-width="0" />
<path d="M727.8 617.0 h3.4 M727.8 619.2 h3.4" fill="none" stroke="#959595" stroke-width="0.6" />
<rect x="739.0" y="585.1" width="1.2" height="5.4" rx="0" fill="#b4b4b4" stroke="none" stroke-width="0" />
<rect x="741.2" y="585.1" width="1.2" height="5.4" rx="0" fill="#b4b4b4" stroke="none" stroke-width="0" />
<path d="M739.0 586.7 h3.4 M739.0 588.9 h3.4" fill="none" stroke="#959595" stroke-width="0.6" />
<text x="743.1" y="624.0" font-family="Liberation Sans,sans-serif" font-size="3.2" font-weight="normal" fill="#5e5e5e" text-anchor="middle" textLength="6" lengthAdjust="spacingAndGlyphs" >L696</text>
<text x="787.8" y="631.1" font-family="Liberation Sans,sans-serif" font-size="3.2" font-weight="normal" fill="#5e5e5e" text-anchor="middle" textLength="6" lengthAdjust="spacingAndGlyphs" >C1971</text>
<text x="798.3" y="628.2" font-family="Liberation Sans,sans-serif" font-size="3.2" font-weight="normal" fill="#5e5e5e" text-anchor="middle" textLength="6" lengthAdjust="spacingAndGlyphs" >C3001</text>
<rect x="766.8" y="646.1" width="1.2" height="5.4" rx="0" fill="#b4b4b4" stroke="none" stroke-width="0" />
<rect x="769.0" y="646.1" width="1.2" height="5.4" rx="0" fill="#b4b4b4" stroke="none" stroke-width="0" />
<path d="M766.8 647.7 h3.4 M766.8 649.9 h3.4" fill="none" stroke="#959595" stroke-width="0.6" />
<text x="760.7" y="602.3" font-family="Liberation Sans,sans-serif" font-size="3.2" font-weight="normal" fill="#5e5e5e" text-anchor="middle" textLength="6" lengthAdjust="spacingAndGlyphs" >C3514</text>
<rect x="818.3" y="624.8" width="1.2" height="5.4" rx="0" fill="#b4b4b4" stroke="none" stroke-width="0" />
<rect x="820.5" y="624.8" width="1.2" height="5.4" rx="0" fill="#b4b4b4" stroke="none" stroke-width="0" />
<path d="M818.3 626.4 h3.4 M818.3 628.6 h3.4" fill="none" stroke="#959595" stroke-width="0.6" />
<rect x="773.2" y="596.8" width="1.2" height="5.4" rx="0" fill="#b4b4b4" stroke="none" stroke-width="0" />
<rect x="775.4" y="596.8" width="1.2" height="5.4" rx="0" fill="#b4b4b4" stroke="none" stroke-width="0" />
<path d="M773.2 598.4 h3.4 M773.2 600.6 h3.4" fill="none" stroke="#959595" stroke-width="0.6" />
<rect x="803.4" y="625.7" width="1.2" height="5.4" rx="0" fill="#b4b4b4" stroke="none" stroke-width="0" />
<rect x="805.6" y="625.7" width="1.2" height="5.4" rx="0" fill="#b4b4b4" stroke="none" stroke-width="0" />
<path d="M803.4 627.3 h3.4 M803.4 629.5 h3.4" fill="none" stroke="#959595" stroke-width="0.6" />
<rect x="722.8" y="607.9" width="1.2" height="5.4" rx="0" fill="#b4b4b4" stroke="none" stroke-width="0" />
<rect x="725.0" y="607.9" width="1.2" height="5.4" rx="0" fill="#b4b4b4" stroke="none" stroke-width="0" />
<path d="M722.8 609.5 h3.4 M722.8 611.7 h3.4" fill="none" stroke="#959595" stroke-width="0.6" />
<text x="759.2" y="610.1" font-family="Liberation Sans,sans-serif" font-size="3.2" font-weight="normal" fill="#5e5e5e" text-anchor="middle" textLength="6" lengthAdjust="spacingAndGlyphs" >C3239</text>
<text x="732.3" y="583.9" font-family="Liberation Sans,sans-serif" font-size="3.2" font-weight="normal" fill="#5e5e5e" text-anchor="middle" textLength="6" lengthAdjust="spacingAndGlyphs" >C720</text>
<text x="747.9" y="643.1" font-family="Liberation Sans,sans-serif" font-size="3.2" font-weight="normal" fill="#5e5e5e" text-anchor="middle" textLength="6" lengthAdjust="spacingAndGlyphs" >C1684</text>
<text x="766.6" y="623.4" font-family="Liberation Sans,sans-serif" font-size="3.2" font-weight="normal" fill="#5e5e5e" text-anchor="middle" textLength="6" lengthAdjust="spacingAndGlyphs" >C1913</text>
<text x="778.7" y="628.8" font-family="Liberation Sans,sans-serif" font-size="3.2" font-weight="normal" fill="#5e5e5e" text-anchor="middle" textLength="6" lengthAdjust="spacingAndGlyphs" >C1981</text>
<rect x="808.0" y="638.3" width="8.4" height="4.8" rx="0" fill="none" stroke="#bdbdbd" stroke-width="0.6" stroke-dasharray="1 0.6"/>
<text x="812.2" y="641.8" font-family="Liberation Sans,sans-serif" font-size="3.2" font-weight="normal" fill="#4a4a4a" text-anchor="middle" textLength="7" lengthAdjust="spacingAndGlyphs" >L587</text>
<text x="822.1" y="596.6" font-family="Liberation Sans,sans-serif" font-size="3.2" font-weight="normal" fill="#5e5e5e" text-anchor="middle" textLength="6" lengthAdjust="spacingAndGlyphs" >C1232</text>
<text x="756.8" y="577.9" font-family="Liberation Sans,sans-serif" font-size="3.2" font-weight="normal" fill="#5e5e5e" text-anchor="middle" textLength="6" lengthAdjust="spacingAndGlyphs" >L337</text>
<rect x="783.3" y="598.4" width="8.4" height="4.8" rx="0" fill="none" stroke="#bdbdbd" stroke-width="0.6" stroke-dasharray="1 0.6"/>
<text x="787.5" y="601.9" font-family="Liberation Sans,sans-serif" font-size="3.2" font-weight="normal" fill="#4a4a4a" text-anchor="middle" textLength="7" lengthAdjust="spacingAndGlyphs" >C2333</text>
<text x="750.4" y="601.1" font-family="Liberation Sans,sans-serif" font-size="3.2" font-weight="normal" fill="#5e5e5e" text-anchor="middle" textLength="6" lengthAdjust="spacingAndGlyphs" >C1957</text>
<text x="800.6" y="623.1" font-family="Liberation Sans,sans-serif" font-size="3.2" font-weight="normal" fill="#5e5e5e" text-anchor="middle" textLength="6" lengthAdjust="spacingAndGlyphs" >C1658</text>
<text x="762.9" y="583.7" font-family="Liberation Sans,sans-serif" font-size="3.2" font-weight="normal" fill="#5e5e5e" text-anchor="middle" textLength="6" lengthAdjust="spacingAndGlyphs" >L1877</text>
<text x="850.2" y="623.6" font-family="Liberation Sans,sans-serif" font-size="3.2" font-weight="normal" fill="#5e5e5e" text-anchor="middle" textLength="6" lengthAdjust="spacingAndGlyphs" >R3346</text>
<text x="837.7" y="644.3" font-family="Liberation Sans,sans-serif" font-size="3.2" font-weight="normal" fill="#5e5e5e" text-anchor="middle" textLength="6" lengthAdjust="spacingAndGlyphs" >R2942</text>
<text x="857.4" y="602.5" font-family="Liberation Sans,sans-serif" font-size="3.2" font-weight="normal" fill="#5e5e5e" text-anchor="middle" textLength="6" lengthAdjust="spacingAndGlyphs" >C2942</text>
<text x="839.7" y="651.6" font-family="Liberation Sans,sans-serif" font-size="3.2" font-weight="normal" fill="#5e5e5e" text-anchor="middle" textLength="6" lengthAdjust="spacingAndGlyphs" >R3083</text>
<rect x="846.4" y="606.3" width="1.2" height="5.4" rx="0" fill="#b4b4b4" stroke="none" stroke-width="0" />
<rect x="848.6" y="606.3" width="1.2" height="5.4" rx="0" fill="#b4b4b4" stroke="none" stroke-width="0" />
<path d="M846.4 607.9 h3.4 M846.4 610.1 h3.4" fill="none" stroke="#959595" stroke-width="0.6" />
<rect x="834.7" y="608.9" width="1.2" height="5.4" rx="0" fill="#b4b4b4" stroke="none" stroke-width="0" />
<rect x="836.9" y="608.9" width="1.2" height="5.4" rx="0" fill="#b4b4b4" stroke="none" stroke-width="0" />
<path d="M834.7 610.5 h3.4 M834.7 612.7 h3.4" fill="none" stroke="#959595" stroke-width="0.6" />
<rect x="836.4" y="624.2" width="8.4" height="4.8" rx="0" fill="none" stroke="#bdbdbd" stroke-width="0.6" stroke-dasharray="1 0.6"/>
<text x="840.6" y="627.7" font-family="Liberation Sans,sans-serif" font-size="3.2" font-weight="normal" fill="#4a4a4a" text-anchor="middle" textLength="7" lengthAdjust="spacingAndGlyphs" >R1497</text>
<text x="853.3" y="618.1" font-family="Liberation Sans,sans-serif" font-size="3.2" font-weight="normal" fill="#5e5e5e" text-anchor="middle" textLength="6" lengthAdjust="spacingAndGlyphs" >L209</text>
<rect x="849.7" y="628.3" width="1.2" height="5.4" rx="0" fill="#b4b4b4" stroke="none" stroke-width="0" />
<rect x="851.9" y="628.3" width="1.2" height="5.4" rx="0" fill="#b4b4b4" stroke="none" stroke-width="0" />
<path d="M849.7 629.9 h3.4 M849.7 632.1 h3.4" fill="none" stroke="#959595" stroke-width="0.6" />
<rect x="860.0" y="618.6" width="1.2" height="5.4" rx="0" fill="#b4b4b4" stroke="none" stroke-width="0" />
<rect x="862.2" y="618.6" width="1.2" height="5.4" rx="0" fill="#b4b4b4" stroke="none" stroke-width="0" />
<path d="M860.0 620.2 h3.4 M860.0 622.4 h3.4" fill="none" stroke="#959595" stroke-width="0.6" />
<rect x="837.0" y="633.8" width="8.4" height="4.8" rx="0" fill="none" stroke="#bdbdbd" stroke-width="0.6" stroke-dasharray="1 0.6"/>
<text x="841.2" y="637.3" font-family="Liberation Sans,sans-serif" font-size="3.2" font-weight="normal" fill="#4a4a4a" text-anchor="middle" textLength="7" lengthAdjust="spacingAndGlyphs" >C215</text>
<text x="840.0" y="605.8" font-family="Liberation Sans,sans-serif" font-size="3.2" font-weight="normal" fill="#5e5e5e" text-anchor="middle" textLength="6" lengthAdjust="spacingAndGlyphs" >C2728</text>
<text x="860.5" y="611.9" font-family="Liberation Sans,sans-serif" font-size="3.2" font-weight="normal" fill="#5e5e5e" text-anchor="middle" textLength="6" lengthAdjust="spacingAndGlyphs" >C2482</text>
<text x="850.2" y="647.4" font-family="Liberation Sans,sans-serif" font-size="4.6" font-weight="bold" fill="#2a2a2a" text-anchor="middle" >✕</text>
<text x="836.0" y="620.9" font-family="Liberation Sans,sans-serif" font-size="3.2" font-weight="normal" fill="#5e5e5e" text-anchor="middle" textLength="6" lengthAdjust="spacingAndGlyphs" >C3404</text>
<rect x="854.9" y="623.1" width="1.2" height="5.4" rx="0" fill="#b4b4b4" stroke="none" stroke-width="0" />
<rect x="857.1" y="623.1" width="1.2" height="5.4" rx="0" fill="#b4b4b4" stroke="none" stroke-width="0" />
<path d="M854.9 624.7 h3.4 M854.9 626.9 h3.4" fill="none" stroke="#959595" stroke-width="0.6" />
<text x="857.8" y="607.3" font-family="Liberation Sans,sans-serif" font-size="3.2" font-weight="normal" fill="#5e5e5e" text-anchor="middle" textLength="6" lengthAdjust="spacingAndGlyphs" >C2965</text>
<rect x="850.0" y="636.6" width="1.2" height="5.4" rx="0" fill="#b4b4b4" stroke="none" stroke-width="0" />
<rect x="852.2" y="636.6" width="1.2" height="5.4" rx="0" fill="#b4b4b4" stroke="none" stroke-width="0" />
<path d="M850.0 638.2 h3.4 M850.0 640.4 h3.4" fill="none" stroke="#959595" stroke-width="0.6" />
<text x="845.3" y="600.9" font-family="Liberation Sans,sans-serif" font-size="3.2" font-weight="normal" fill="#5e5e5e" text-anchor="middle" textLength="6" lengthAdjust="spacingAndGlyphs" >L1997</text>
<rect x="840.7" y="612.5" width="1.2" height="5.4" rx="0" fill="#b4b4b4" stroke="none" stroke-width="0" />
<rect x="842.9" y="612.5" width="1.2" height="5.4" rx="0" fill="#b4b4b4" stroke="none" stroke-width="0" />
<path d="M840.7 614.1 h3.4 M840.7 616.3 h3.4" fill="none" stroke="#959595" stroke-width="0.6" />
<rect x="897.1" y="645.1" width="1.2" height="5.4" rx="0" fill="#b4b4b4" stroke="none" stroke-width="0" />
<rect x="899.3" y="645.1" width="1.2" height="5.4" rx="0" fill="#b4b4b4" stroke="none" stroke-width="0" />
<path d="M897.1 646.7 h3.4 M897.1 648.9 h3.4" fill="none" stroke="#959595" stroke-width="0.6" />
<rect x="896.1" y="591.1" width="8.4" height="4.8" rx="0" fill="none" stroke="#bdbdbd" stroke-width="0.6" stroke-dasharray="1 0.6"/>
<text x="900.3" y="594.6" font-family="Liberation Sans,sans-serif" font-size="3.2" font-weight="normal" fill="#4a4a4a" text-anchor="middle" textLength="7" lengthAdjust="spacingAndGlyphs" >R1181</text>
<text x="889.5" y="602.3" font-family="Liberation Sans,sans-serif" font-size="3.2" font-weight="normal" fill="#5e5e5e" text-anchor="middle" textLength="6" lengthAdjust="spacingAndGlyphs" >R3942</text>
<text x="898.9" y="630.4" font-family="Liberation Sans,sans-serif" font-size="3.2" font-weight="normal" fill="#5e5e5e" text-anchor="middle" textLength="6" lengthAdjust="spacingAndGlyphs" >C1379</text>
<rect x="881.5" y="605.6" width="1.2" height="5.4" rx="0" fill="#b4b4b4" stroke="none" stroke-width="0" />
<rect x="883.7" y="605.6" width="1.2" height="5.4" rx="0" fill="#b4b4b4" stroke="none" stroke-width="0" />
<path d="M881.5 607.2 h3.4 M881.5 609.4 h3.4" fill="none" stroke="#959595" stroke-width="0.6" />
<rect x="888.2" y="592.3" width="1.2" height="5.4" rx="0" fill="#b4b4b4" stroke="none" stroke-width="0" />
<rect x="890.4" y="592.3" width="1.2" height="5.4" rx="0" fill="#b4b4b4" stroke="none" stroke-width="0" />
<path d="M888.2 593.9 h3.4 M888.2 596.1 h3.4" fill="none" stroke="#959595" stroke-width="0.6" />
<text x="899.0" y="602.1" font-family="Liberation Sans,sans-serif" font-size="3.2" font-weight="normal" fill="#5e5e5e" text-anchor="middle" textLength="6" lengthAdjust="spacingAndGlyphs" >R1542</text>
<text x="896.2" y="616.8" font-family="Liberation Sans,sans-serif" font-size="3.2" font-weight="normal" fill="#5e5e5e" text-anchor="middle" textLength="6" lengthAdjust="spacingAndGlyphs" >R3516</text>
<text x="900.7" y="637.3" font-family="Liberation Sans,sans-serif" font-size="3.2" font-weight="normal" fill="#5e5e5e" text-anchor="middle" textLength="6" lengthAdjust="spacingAndGlyphs" >R3742</text>
<rect x="875.8" y="648.0" width="8.4" height="4.8" rx="0" fill="none" stroke="#bdbdbd" stroke-width="0.6" stroke-dasharray="1 0.6"/>
<text x="880.0" y="651.5" font-family="Liberation Sans,sans-serif" font-size="3.2" font-weight="normal" fill="#4a4a4a" text-anchor="middle" textLength="7" lengthAdjust="spacingAndGlyphs" >R746</text>
<text x="878.6" y="594.9" font-family="Liberation Sans,sans-serif" font-size="3.2" font-weight="normal" fill="#5e5e5e" text-anchor="middle" textLength="6" lengthAdjust="spacingAndGlyphs" >R1341</text>
<text x="890.3" y="607.3" font-family="Liberation Sans,sans-serif" font-size="3.2" font-weight="normal" fill="#5e5e5e" text-anchor="middle" textLength="6" lengthAdjust="spacingAndGlyphs" >R564</text>
<rect x="879.0" y="596.6" width="1.2" height="5.4" rx="0" fill="#b4b4b4" stroke="none" stroke-width="0" />
<rect x="881.2" y="596.6" width="1.2" height="5.4" rx="0" fill="#b4b4b4" stroke="none" stroke-width="0" />
<path d="M879.0 598.2 h3.4 M879.0 600.4 h3.4" fill="none" stroke="#959595" stroke-width="0.6" />
<text x="874.9" y="602.4" font-family="Liberation Sans,sans-serif" font-size="4.6" font-weight="bold" fill="#2a2a2a" text-anchor="middle" >✕</text>
<text x="807.9" y="549.5" font-family="Liberation Sans,sans-serif" font-size="3.2" font-weight="normal" fill="#5e5e5e" text-anchor="middle" textLength="6" lengthAdjust="spacingAndGlyphs" >R2643</text>
<text x="836.5" y="557.4" font-family="Liberation Sans,sans-serif" font-size="3.2" font-weight="normal" fill="#5e5e5e" text-anchor="middle" textLength="6" lengthAdjust="spacingAndGlyphs" >C2867</text>
<text x="806.8" y="557.4" font-family="Liberation Sans,sans-serif" font-size="3.2" font-weight="normal" fill="#5e5e5e" text-anchor="middle" textLength="6" lengthAdjust="spacingAndGlyphs" >R901</text>
<rect x="798.9" y="568.4" width="1.2" height="5.4" rx="0" fill="#b4b4b4" stroke="none" stroke-width="0" />
<rect x="801.1" y="568.4" width="1.2" height="5.4" rx="0" fill="#b4b4b4" stroke="none" stroke-width="0" />
<path d="M798.9 570.0 h3.4 M798.9 572.2 h3.4" fill="none" stroke="#959595" stroke-width="0.6" />
<text x="831.4" y="593.2" font-family="Liberation Sans,sans-serif" font-size="3.2" font-weight="normal" fill="#5e5e5e" text-anchor="middle" textLength="6" lengthAdjust="spacingAndGlyphs" >R683</text>
<text x="799.0" y="591.0" font-family="Liberation Sans,sans-serif" font-size="3.2" font-weight="normal" fill="#5e5e5e" text-anchor="middle" textLength="6" lengthAdjust="spacingAndGlyphs" >C410</text>
<rect x="831.5" y="582.0" width="1.2" height="5.4" rx="0" fill="#b4b4b4" stroke="none" stroke-width="0" />
<rect x="833.7" y="582.0" width="1.2" height="5.4" rx="0" fill="#b4b4b4" stroke="none" stroke-width="0" />
<path d="M831.5 583.6 h3.4 M831.5 585.8 h3.4" fill="none" stroke="#959595" stroke-width="0.6" />
<text x="817.3" y="591.9" font-family="Liberation Sans,sans-serif" font-size="3.2" font-weight="normal" fill="#5e5e5e" text-anchor="middle" textLength="6" lengthAdjust="spacingAndGlyphs" >L757</text>
<text x="834.0" y="578.6" font-family="Liberation Sans,sans-serif" font-size="3.2" font-weight="normal" fill="#5e5e5e" text-anchor="middle" textLength="6" lengthAdjust="spacingAndGlyphs" >C3406</text>
<text x="811.2" y="567.5" font-family="Liberation Sans,sans-serif" font-size="3.2" font-weight="normal" fill="#5e5e5e" text-anchor="middle" textLength="6" lengthAdjust="spacingAndGlyphs" >C838</text>
<text x="830.9" y="564.7" font-family="Liberation Sans,sans-serif" font-size="3.2" font-weight="normal" fill="#5e5e5e" text-anchor="middle" textLength="6" lengthAdjust="spacingAndGlyphs" >R424</text>
<text x="804.1" y="580.7" font-family="Liberation Sans,sans-serif" font-size="4.6" font-weight="bold" fill="#2a2a2a" text-anchor="middle" >✕</text>
<text x="833.9" y="572.2" font-family="Liberation Sans,sans-serif" font-size="3.2" font-weight="normal" fill="#5e5e5e" text-anchor="middle" textLength="6" lengthAdjust="spacingAndGlyphs" >L1530</text>
<text x="798.4" y="550.9" font-family="Liberation Sans,sans-serif" font-size="3.2" font-weight="normal" fill="#5e5e5e" text-anchor="middle" textLength="6" lengthAdjust="spacingAndGlyphs" >R3968</text>
<text x="737.8" y="534.5" font-family="Liberation Sans,sans-serif" font-size="4.6" font-weight="bold" fill="#2a2a2a" text-anchor="middle" >✕</text>
<text x="733.6" y="549.3" font-family="Liberation Sans,sans-serif" font-size="3.2" font-weight="normal" fill="#5e5e5e" text-anchor="middle" textLength="6" lengthAdjust="spacingAndGlyphs" >C2701</text>
<text x="749.0" y="532.3" font-family="Liberation Sans,sans-serif" font-size="3.2" font-weight="normal" fill="#5e5e5e" text-anchor="middle" textLength="6" lengthAdjust="spacingAndGlyphs" >C2892</text>
<rect x="703.1" y="543.5" width="1.2" height="5.4" rx="0" fill="#b4b4b4" stroke="none" stroke-width="0" />
<rect x="705.3" y="543.5" width="1.2" height="5.4" rx="0" fill="#b4b4b4" stroke="none" stroke-width="0" />
<path d="M703.1 545.1 h3.4 M703.1 547.3 h3.4" fill="none" stroke="#959595" stroke-width="0.6" />
<text x="755.6" y="541.7" font-family="Liberation Sans,sans-serif" font-size="3.2" font-weight="normal" fill="#5e5e5e" text-anchor="middle" textLength="6" lengthAdjust="spacingAndGlyphs" >C3621</text>
<rect x="711.2" y="546.1" width="8.4" height="4.8" rx="0" fill="none" stroke="#bdbdbd" stroke-width="0.6" stroke-dasharray="1 0.6"/>
<text x="715.4" y="549.6" font-family="Liberation Sans,sans-serif" font-size="3.2" font-weight="normal" fill="#4a4a4a" text-anchor="middle" textLength="7" lengthAdjust="spacingAndGlyphs" >C2460</text>
<rect x="715.2" y="534.8" width="1.2" height="5.4" rx="0" fill="#b4b4b4" stroke="none" stroke-width="0" />
<rect x="717.4" y="534.8" width="1.2" height="5.4" rx="0" fill="#b4b4b4" stroke="none" stroke-width="0" />
<path d="M715.2 536.4 h3.4 M715.2 538.6 h3.4" fill="none" stroke="#959595" stroke-width="0.6" />
<text x="760.1" y="529.0" font-family="Liberation Sans,sans-serif" font-size="3.2" font-weight="normal" fill="#5e5e5e" text-anchor="middle" textLength="6" lengthAdjust="spacingAndGlyphs" >C790</text>
<text x="795.6" y="481.0" font-family="Liberation Sans,sans-serif" font-size="3.2" font-weight="normal" fill="#5e5e5e" text-anchor="middle" textLength="6" lengthAdjust="spacingAndGlyphs" >L2706</text>
<rect x="783.0" y="461.2" width="8.4" height="4.8" rx="0" fill="none" stroke="#bdbdbd" stroke-width="0.6" stroke-dasharray="1 0.6"/>
<text x="787.2" y="464.7" font-family="Liberation Sans,sans-serif" font-size="3.2" font-weight="normal" fill="#4a4a4a" text-anchor="middle" textLength="7" lengthAdjust="spacingAndGlyphs" >R2912</text>
<rect x="802.6" y="509.7" width="1.2" height="5.4" rx="0" fill="#b4b4b4" stroke="none" stroke-width="0" />
<rect x="804.8" y="509.7" width="1.2" height="5.4" rx="0" fill="#b4b4b4" stroke="none" stroke-width="0" />
<path d="M802.6 511.3 h3.4 M802.6 513.5 h3.4" fill="none" stroke="#959595" stroke-width="0.6" />
<rect x="780.6" y="471.1" width="8.4" height="4.8" rx="0" fill="none" stroke="#bdbdbd" stroke-width="0.6" stroke-dasharray="1 0.6"/>
<text x="784.8" y="474.6" font-family="Liberation Sans,sans-serif" font-size="3.2" font-weight="normal" fill="#4a4a4a" text-anchor="middle" textLength="7" lengthAdjust="spacingAndGlyphs" >C2877</text>
<rect x="803.0" y="473.9" width="1.2" height="5.4" rx="0" fill="#b4b4b4" stroke="none" stroke-width="0" />
<rect x="805.2" y="473.9" width="1.2" height="5.4" rx="0" fill="#b4b4b4" stroke="none" stroke-width="0" />
<path d="M803.0 475.5 h3.4 M803.0 477.7 h3.4" fill="none" stroke="#959595" stroke-width="0.6" />
<text x="780.5" y="480.5" font-family="Liberation Sans,sans-serif" font-size="3.2" font-weight="normal" fill="#5e5e5e" text-anchor="middle" textLength="6" lengthAdjust="spacingAndGlyphs" >R295</text>
<rect x="802.3" y="481.0" width="1.2" height="5.4" rx="0" fill="#b4b4b4" stroke="none" stroke-width="0" />
<rect x="804.5" y="481.0" width="1.2" height="5.4" rx="0" fill="#b4b4b4" stroke="none" stroke-width="0" />
<path d="M802.3 482.6 h3.4 M802.3 484.8 h3.4" fill="none" stroke="#959595" stroke-width="0.6" />
<text x="801.0" y="503.4" font-family="Liberation Sans,sans-serif" font-size="3.2" font-weight="normal" fill="#5e5e5e" text-anchor="middle" textLength="6" lengthAdjust="spacingAndGlyphs" >C780</text>
<rect x="758.3" y="472.8" width="1.2" height="5.4" rx="0" fill="#b4b4b4" stroke="none" stroke-width="0" />
<rect x="760.5" y="472.8" width="1.2" height="5.4" rx="0" fill="#b4b4b4" stroke="none" stroke-width="0" />
<path d="M758.3 474.4 h3.4 M758.3 476.6 h3.4" fill="none" stroke="#959595" stroke-width="0.6" />
<rect x="893.6" y="548.0" width="1.2" height="5.4" rx="0" fill="#b4b4b4" stroke="none" stroke-width="0" />
<rect x="895.8" y="548.0" width="1.2" height="5.4" rx="0" fill="#b4b4b4" stroke="none" stroke-width="0" />
<path d="M893.6 549.6 h3.4 M893.6 551.8 h3.4" fill="none" stroke="#959595" stroke-width="0.6" />
<text x="866.7" y="499.1" font-family="Liberation Sans,sans-serif" font-size="3.2" font-weight="normal" fill="#5e5e5e" text-anchor="middle" textLength="6" lengthAdjust="spacingAndGlyphs" >C1592</text>
<rect x="899.2" y="556.4" width="1.2" height="5.4" rx="0" fill="#b4b4b4" stroke="none" stroke-width="0" />
<rect x="901.4" y="556.4" width="1.2" height="5.4" rx="0" fill="#b4b4b4" stroke="none" stroke-width="0" />
<path d="M899.2 558.0 h3.4 M899.2 560.2 h3.4" fill="none" stroke="#959595" stroke-width="0.6" />
<rect x="888.4" y="557.0" width="8.4" height="4.8" rx="0" fill="none" stroke="#bdbdbd" stroke-width="0.6" stroke-dasharray="1 0.6"/>
<text x="892.6" y="560.5" font-family="Liberation Sans,sans-serif" font-size="3.2" font-weight="normal" fill="#4a4a4a" text-anchor="middle" textLength="7" lengthAdjust="spacingAndGlyphs" >C1834</text>
<rect x="870.7" y="558.6" width="8.4" height="4.8" rx="0" fill="none" stroke="#bdbdbd" stroke-width="0.6" stroke-dasharray="1 0.6"/>
<text x="874.9" y="562.1" font-family="Liberation Sans,sans-serif" font-size="3.2" font-weight="normal" fill="#4a4a4a" text-anchor="middle" textLength="7" lengthAdjust="spacingAndGlyphs" >R2223</text>
<rect x="868.5" y="510.3" width="1.2" height="5.4" rx="0" fill="#b4b4b4" stroke="none" stroke-width="0" />
<rect x="870.7" y="510.3" width="1.2" height="5.4" rx="0" fill="#b4b4b4" stroke="none" stroke-width="0" />
<path d="M868.5 511.9 h3.4 M868.5 514.1 h3.4" fill="none" stroke="#959595" stroke-width="0.6" />
<rect x="863.5" y="547.6" width="1.2" height="5.4" rx="0" fill="#b4b4b4" stroke="none" stroke-width="0" />
<rect x="865.7" y="547.6" width="1.2" height="5.4" rx="0" fill="#b4b4b4" stroke="none" stroke-width="0" />
<path d="M863.5 549.2 h3.4 M863.5 551.4 h3.4" fill="none" stroke="#959595" stroke-width="0.6" />
<rect x="869.4" y="545.5" width="1.2" height="5.4" rx="0" fill="#b4b4b4" stroke="none" stroke-width="0" />
<rect x="871.6" y="545.5" width="1.2" height="5.4" rx="0" fill="#b4b4b4" stroke="none" stroke-width="0" />
<path d="M869.4 547.1 h3.4 M869.4 549.3 h3.4" fill="none" stroke="#959595" stroke-width="0.6" />
<text x="884.4" y="551.1" font-family="Liberation Sans,sans-serif" font-size="3.2" font-weight="normal" fill="#5e5e5e" text-anchor="middle" textLength="6" lengthAdjust="spacingAndGlyphs" >C2250</text>
<rect x="876.3" y="549.4" width="1.2" height="5.4" rx="0" fill="#b4b4b4" stroke="none" stroke-width="0" />
<rect x="878.5" y="549.4" width="1.2" height="5.4" rx="0" fill="#b4b4b4" stroke="none" stroke-width="0" />
<path d="M876.3 551.0 h3.4 M876.3 553.2 h3.4" fill="none" stroke="#959595" stroke-width="0.6" />
<text x="876.9" y="518.7" font-family="Liberation Sans,sans-serif" font-size="3.2" font-weight="normal" fill="#5e5e5e" text-anchor="middle" textLength="6" lengthAdjust="spacingAndGlyphs" >L2460</text>
<rect x="868.8" y="503.0" width="1.2" height="5.4" rx="0" fill="#b4b4b4" stroke="none" stroke-width="0" />
<rect x="871.0" y="503.0" width="1.2" height="5.4" rx="0" fill="#b4b4b4" stroke="none" stroke-width="0" />
<path d="M868.8 504.6 h3.4 M868.8 506.8 h3.4" fill="none" stroke="#959595" stroke-width="0.6" />
<text x="869.8" y="486.2" font-family="Liberation Sans,sans-serif" font-size="3.2" font-weight="normal" fill="#5e5e5e" text-anchor="middle" textLength="6" lengthAdjust="spacingAndGlyphs" >R691</text>
<text x="867.8" y="480.6" font-family="Liberation Sans,sans-serif" font-size="3.2" font-weight="normal" fill="#5e5e5e" text-anchor="middle" textLength="6" lengthAdjust="spacingAndGlyphs" >L2952</text>
<text x="871.9" y="475.4" font-family="Liberation Sans,sans-serif" font-size="3.2" font-weight="normal" fill="#5e5e5e" text-anchor="middle" textLength="6" lengthAdjust="spacingAndGlyphs" >C2363</text>
<text x="868.6" y="493.6" font-family="Liberation Sans,sans-serif" font-size="3.2" font-weight="normal" fill="#5e5e5e" text-anchor="middle" textLength="6" lengthAdjust="spacingAndGlyphs" >R3736</text>
<rect x="880.6" y="475.0" width="1.2" height="5.4" rx="0" fill="#b4b4b4" stroke="none" stroke-width="0" />
<rect x="882.8" y="475.0" width="1.2" height="5.4" rx="0" fill="#b4b4b4" stroke="none" stroke-width="0" />
<path d="M880.6 476.6 h3.4 M880.6 478.8 h3.4" fill="none" stroke="#959595" stroke-width="0.6" />
<rect x="735.0" y="495.9" width="1.2" height="5.4" rx="0" fill="#b4b4b4" stroke="none" stroke-width="0" />
<rect x="737.2" y="495.9" width="1.2" height="5.4" rx="0" fill="#b4b4b4" stroke="none" stroke-width="0" />
<path d="M735.0 497.5 h3.4 M735.0 499.7 h3.4" fill="none" stroke="#959595" stroke-width="0.6" />
<text x="729.1" y="504.6" font-family="Liberation Sans,sans-serif" font-size="3.2" font-weight="normal" fill="#5e5e5e" text-anchor="middle" textLength="6" lengthAdjust="spacingAndGlyphs" >R796</text>
<rect x="741.6" y="485.4" width="1.2" height="5.4" rx="0" fill="#b4b4b4" stroke="none" stroke-width="0" />
<rect x="743.8" y="485.4" width="1.2" height="5.4" rx="0" fill="#b4b4b4" stroke="none" stroke-width="0" />
<path d="M741.6 487.0 h3.4 M741.6 489.2 h3.4" fill="none" stroke="#959595" stroke-width="0.6" />
<rect x="732.4" y="484.0" width="1.2" height="5.4" rx="0" fill="#b4b4b4" stroke="none" stroke-width="0" />
<rect x="734.6" y="484.0" width="1.2" height="5.4" rx="0" fill="#b4b4b4" stroke="none" stroke-width="0" />
<path d="M732.4 485.6 h3.4 M732.4 487.8 h3.4" fill="none" stroke="#959595" stroke-width="0.6" />
<text x="819.6" y="527.3" font-family="Liberation Sans,sans-serif" font-size="3.2" font-weight="normal" fill="#5e5e5e" text-anchor="middle" textLength="6" lengthAdjust="spacingAndGlyphs" >R1810</text>
<text x="725.2" y="484.2" font-family="Liberation Sans,sans-serif" font-size="3.2" font-weight="normal" fill="#5e5e5e" text-anchor="middle" textLength="6" lengthAdjust="spacingAndGlyphs" >R3418</text>
<rect x="653.3" y="601.7" width="8.4" height="4.8" rx="0" fill="none" stroke="#bdbdbd" stroke-width="0.6" stroke-dasharray="1 0.6"/>
<text x="657.5" y="605.2" font-family="Liberation Sans,sans-serif" font-size="3.2" font-weight="normal" fill="#4a4a4a" text-anchor="middle" textLength="7" lengthAdjust="spacingAndGlyphs" >C2662</text>
<rect x="617.3" y="654.5" width="1.2" height="5.4" rx="0" fill="#b4b4b4" stroke="none" stroke-width="0" />
<rect x="619.5" y="654.5" width="1.2" height="5.4" rx="0" fill="#b4b4b4" stroke="none" stroke-width="0" />
<path d="M617.3 656.1 h3.4 M617.3 658.3 h3.4" fill="none" stroke="#959595" stroke-width="0.6" />
<rect x="627.1" y="592.8" width="8.4" height="4.8" rx="0" fill="none" stroke="#bdbdbd" stroke-width="0.6" stroke-dasharray="1 0.6"/>
<text x="631.3" y="596.3" font-family="Liberation Sans,sans-serif" font-size="3.2" font-weight="normal" fill="#4a4a4a" text-anchor="middle" textLength="7" lengthAdjust="spacingAndGlyphs" >C2536</text>
<rect x="681.4" y="651.4" width="8.4" height="4.8" rx="0" fill="none" stroke="#bdbdbd" stroke-width="0.6" stroke-dasharray="1 0.6"/>
<text x="685.6" y="654.9" font-family="Liberation Sans,sans-serif" font-size="3.2" font-weight="normal" fill="#4a4a4a" text-anchor="middle" textLength="7" lengthAdjust="spacingAndGlyphs" >L2581</text>
<rect x="664.2" y="609.0" width="8.4" height="4.8" rx="0" fill="none" stroke="#bdbdbd" stroke-width="0.6" stroke-dasharray="1 0.6"/>
<text x="668.4" y="612.5" font-family="Liberation Sans,sans-serif" font-size="3.2" font-weight="normal" fill="#4a4a4a" text-anchor="middle" textLength="7" lengthAdjust="spacingAndGlyphs" >R1193</text>
<rect x="641.4" y="681.3" width="8.4" height="4.8" rx="0" fill="none" stroke="#bdbdbd" stroke-width="0.6" stroke-dasharray="1 0.6"/>
<text x="645.6" y="684.8" font-family="Liberation Sans,sans-serif" font-size="3.2" font-weight="normal" fill="#4a4a4a" text-anchor="middle" textLength="7" lengthAdjust="spacingAndGlyphs" >L1575</text>
<text x="659.8" y="690.6" font-family="Liberation Sans,sans-serif" font-size="3.2" font-weight="normal" fill="#5e5e5e" text-anchor="middle" textLength="6" lengthAdjust="spacingAndGlyphs" >L146</text>
<rect x="627.9" y="610.0" width="8.4" height="4.8" rx="0" fill="none" stroke="#bdbdbd" stroke-width="0.6" stroke-dasharray="1 0.6"/>
<text x="632.1" y="613.5" font-family="Liberation Sans,sans-serif" font-size="3.2" font-weight="normal" fill="#4a4a4a" text-anchor="middle" textLength="7" lengthAdjust="spacingAndGlyphs" >R1442</text>
<rect x="680.7" y="671.0" width="1.2" height="5.4" rx="0" fill="#b4b4b4" stroke="none" stroke-width="0" />
<rect x="682.9" y="671.0" width="1.2" height="5.4" rx="0" fill="#b4b4b4" stroke="none" stroke-width="0" />
<path d="M680.7 672.6 h3.4 M680.7 674.8 h3.4" fill="none" stroke="#959595" stroke-width="0.6" />
<text x="659.3" y="686.6" font-family="Liberation Sans,sans-serif" font-size="3.2" font-weight="normal" fill="#5e5e5e" text-anchor="middle" textLength="6" lengthAdjust="spacingAndGlyphs" >C1657</text>
<text x="654.2" y="596.5" font-family="Liberation Sans,sans-serif" font-size="3.2" font-weight="normal" fill="#5e5e5e" text-anchor="middle" textLength="6" lengthAdjust="spacingAndGlyphs" >C3305</text>
<text x="676.2" y="657.1" font-family="Liberation Sans,sans-serif" font-size="3.2" font-weight="normal" fill="#5e5e5e" text-anchor="middle" textLength="6" lengthAdjust="spacingAndGlyphs" >R3271</text>
<rect x="669.8" y="602.4" width="1.2" height="5.4" rx="0" fill="#b4b4b4" stroke="none" stroke-width="0" />
<rect x="672.0" y="602.4" width="1.2" height="5.4" rx="0" fill="#b4b4b4" stroke="none" stroke-width="0" />
<path d="M669.8 604.0 h3.4 M669.8 606.2 h3.4" fill="none" stroke="#959595" stroke-width="0.6" />
<text x="672.8" y="700.2" font-family="Liberation Sans,sans-serif" font-size="3.2" font-weight="normal" fill="#5e5e5e" text-anchor="middle" textLength="6" lengthAdjust="spacingAndGlyphs" >C3090</text>
<rect x="667.9" y="638.9" width="1.2" height="5.4" rx="0" fill="#b4b4b4" stroke="none" stroke-width="0" />
<rect x="670.1" y="638.9" width="1.2" height="5.4" rx="0" fill="#b4b4b4" stroke="none" stroke-width="0" />
<path d="M667.9 640.5 h3.4 M667.9 642.7 h3.4" fill="none" stroke="#959595" stroke-width="0.6" />
<rect x="677.4" y="661.8" width="1.2" height="5.4" rx="0" fill="#b4b4b4" stroke="none" stroke-width="0" />
<rect x="679.6" y="661.8" width="1.2" height="5.4" rx="0" fill="#b4b4b4" stroke="none" stroke-width="0" />
<path d="M677.4 663.4 h3.4 M677.4 665.6 h3.4" fill="none" stroke="#959595" stroke-width="0.6" />
<text x="679.0" y="632.6" font-family="Liberation Sans,sans-serif" font-size="3.2" font-weight="normal" fill="#5e5e5e" text-anchor="middle" textLength="6" lengthAdjust="spacingAndGlyphs" >C1394</text>
<rect x="665.4" y="590.2" width="1.2" height="5.4" rx="0" fill="#b4b4b4" stroke="none" stroke-width="0" />
<rect x="667.6" y="590.2" width="1.2" height="5.4" rx="0" fill="#b4b4b4" stroke="none" stroke-width="0" />
<path d="M665.4 591.8 h3.4 M665.4 594.0 h3.4" fill="none" stroke="#959595" stroke-width="0.6" />
<text x="646.9" y="602.4" font-family="Liberation Sans,sans-serif" font-size="3.2" font-weight="normal" fill="#5e5e5e" text-anchor="middle" textLength="6" lengthAdjust="spacingAndGlyphs" >C3562</text>
<text x="682.0" y="696.5" font-family="Liberation Sans,sans-serif" font-size="3.2" font-weight="normal" fill="#5e5e5e" text-anchor="middle" textLength="6" lengthAdjust="spacingAndGlyphs" >C1016</text>
<rect x="639.8" y="606.6" width="8.4" height="4.8" rx="0" fill="none" stroke="#bdbdbd" stroke-width="0.6" stroke-dasharray="1 0.6"/>
<text x="644.0" y="610.1" font-family="Liberation Sans,sans-serif" font-size="3.2" font-weight="normal" fill="#4a4a4a" text-anchor="middle" textLength="7" lengthAdjust="spacingAndGlyphs" >C1935</text>
<text x="613.7" y="593.3" font-family="Liberation Sans,sans-serif" font-size="3.2" font-weight="normal" fill="#5e5e5e" text-anchor="middle" textLength="6" lengthAdjust="spacingAndGlyphs" >C416</text>
<rect x="616.6" y="598.6" width="1.2" height="5.4" rx="0" fill="#b4b4b4" stroke="none" stroke-width="0" />
<rect x="618.8" y="598.6" width="1.2" height="5.4" rx="0" fill="#b4b4b4" stroke="none" stroke-width="0" />
<path d="M616.6 600.2 h3.4 M616.6 602.4 h3.4" fill="none" stroke="#959595" stroke-width="0.6" />
<text x="670.4" y="618.5" font-family="Liberation Sans,sans-serif" font-size="3.2" font-weight="normal" fill="#5e5e5e" text-anchor="middle" textLength="6" lengthAdjust="spacingAndGlyphs" >L3821</text>
<rect x="637.6" y="627.2" width="8.4" height="4.8" rx="0" fill="none" stroke="#bdbdbd" stroke-width="0.6" stroke-dasharray="1 0.6"/>
<text x="641.8" y="630.7" font-family="Liberation Sans,sans-serif" font-size="3.2" font-weight="normal" fill="#4a4a4a" text-anchor="middle" textLength="7" lengthAdjust="spacingAndGlyphs" >C1041</text>
<text x="628.5" y="604.4" font-family="Liberation Sans,sans-serif" font-size="3.2" font-weight="normal" fill="#5e5e5e" text-anchor="middle" textLength="6" lengthAdjust="spacingAndGlyphs" >R1671</text>
<rect x="646.5" y="688.2" width="1.2" height="5.4" rx="0" fill="#b4b4b4" stroke="none" stroke-width="0" />
<rect x="648.7" y="688.2" width="1.2" height="5.4" rx="0" fill="#b4b4b4" stroke="none" stroke-width="0" />
<path d="M646.5 689.8 h3.4 M646.5 692.0 h3.4" fill="none" stroke="#959595" stroke-width="0.6" />
<rect x="681.8" y="683.1" width="1.2" height="5.4" rx="0" fill="#b4b4b4" stroke="none" stroke-width="0" />
<rect x="684.0" y="683.1" width="1.2" height="5.4" rx="0" fill="#b4b4b4" stroke="none" stroke-width="0" />
<path d="M681.8 684.7 h3.4 M681.8 686.9 h3.4" fill="none" stroke="#959595" stroke-width="0.6" />
<rect x="638.8" y="590.1" width="1.2" height="5.4" rx="0" fill="#b4b4b4" stroke="none" stroke-width="0" />
<rect x="641.0" y="590.1" width="1.2" height="5.4" rx="0" fill="#b4b4b4" stroke="none" stroke-width="0" />
<path d="M638.8 591.7 h3.4 M638.8 593.9 h3.4" fill="none" stroke="#959595" stroke-width="0.6" />
<text x="648.2" y="635.8" font-family="Liberation Sans,sans-serif" font-size="3.2" font-weight="normal" fill="#5e5e5e" text-anchor="middle" textLength="6" lengthAdjust="spacingAndGlyphs" >C183</text>
<text x="658.2" y="614.3" font-family="Liberation Sans,sans-serif" font-size="3.2" font-weight="normal" fill="#5e5e5e" text-anchor="middle" textLength="6" lengthAdjust="spacingAndGlyphs" >C2779</text>
<rect x="640.9" y="612.6" width="1.2" height="5.4" rx="0" fill="#b4b4b4" stroke="none" stroke-width="0" />
<rect x="643.1" y="612.6" width="1.2" height="5.4" rx="0" fill="#b4b4b4" stroke="none" stroke-width="0" />
<path d="M640.9 614.2 h3.4 M640.9 616.4 h3.4" fill="none" stroke="#959595" stroke-width="0.6" />
<text x="639.8" y="622.7" font-family="Liberation Sans,sans-serif" font-size="3.2" font-weight="normal" fill="#5e5e5e" text-anchor="middle" textLength="6" lengthAdjust="spacingAndGlyphs" >C1911</text>
<text x="686.1" y="648.9" font-family="Liberation Sans,sans-serif" font-size="3.2" font-weight="normal" fill="#5e5e5e" text-anchor="middle" textLength="6" lengthAdjust="spacingAndGlyphs" >C1593</text>
<rect x="685.9" y="664.5" width="1.2" height="5.4" rx="0" fill="#b4b4b4" stroke="none" stroke-width="0" />
<rect x="688.1" y="664.5" width="1.2" height="5.4" rx="0" fill="#b4b4b4" stroke="none" stroke-width="0" />
<path d="M685.9 666.1 h3.4 M685.9 668.3 h3.4" fill="none" stroke="#959595" stroke-width="0.6" />
<text x="682.8" y="637.6" font-family="Liberation Sans,sans-serif" font-size="3.2" font-weight="normal" fill="#5e5e5e" text-anchor="middle" textLength="6" lengthAdjust="spacingAndGlyphs" >R1023</text>
<rect x="675.4" y="640.0" width="8.4" height="4.8" rx="0" fill="none" stroke="#bdbdbd" stroke-width="0.6" stroke-dasharray="1 0.6"/>
<text x="679.6" y="643.5" font-family="Liberation Sans,sans-serif" font-size="3.2" font-weight="normal" fill="#4a4a4a" text-anchor="middle" textLength="7" lengthAdjust="spacingAndGlyphs" >C966</text>
<rect x="637.2" y="705.5" width="1.2" height="5.4" rx="0" fill="#b4b4b4" stroke="none" stroke-width="0" />
<rect x="639.4" y="705.5" width="1.2" height="5.4" rx="0" fill="#b4b4b4" stroke="none" stroke-width="0" />
<path d="M637.2 707.1 h3.4 M637.2 709.3 h3.4" fill="none" stroke="#959595" stroke-width="0.6" />
<text x="634.0" y="608.5" font-family="Liberation Sans,sans-serif" font-size="3.2" font-weight="normal" fill="#5e5e5e" text-anchor="middle" textLength="6" lengthAdjust="spacingAndGlyphs" >R2023</text>
<text x="636.6" y="684.5" font-family="Liberation Sans,sans-serif" font-size="3.2" font-weight="normal" fill="#5e5e5e" text-anchor="middle" textLength="6" lengthAdjust="spacingAndGlyphs" >C2578</text>
<rect x="675.4" y="605.2" width="1.2" height="5.4" rx="0" fill="#b4b4b4" stroke="none" stroke-width="0" />
<rect x="677.6" y="605.2" width="1.2" height="5.4" rx="0" fill="#b4b4b4" stroke="none" stroke-width="0" />
<path d="M675.4 606.8 h3.4 M675.4 609.0 h3.4" fill="none" stroke="#959595" stroke-width="0.6" />
<text x="625.3" y="608.6" font-family="Liberation Sans,sans-serif" font-size="3.2" font-weight="normal" fill="#5e5e5e" text-anchor="middle" textLength="6" lengthAdjust="spacingAndGlyphs" >R145</text>
<text x="671.4" y="675.4" font-family="Liberation Sans,sans-serif" font-size="3.2" font-weight="normal" fill="#5e5e5e" text-anchor="middle" textLength="6" lengthAdjust="spacingAndGlyphs" >C3532</text>
<rect x="600.9" y="666.1" width="1.2" height="5.4" rx="0" fill="#b4b4b4" stroke="none" stroke-width="0" />
<rect x="603.1" y="666.1" width="1.2" height="5.4" rx="0" fill="#b4b4b4" stroke="none" stroke-width="0" />
<path d="M600.9 667.7 h3.4 M600.9 669.9 h3.4" fill="none" stroke="#959595" stroke-width="0.6" />
<text x="983.5" y="564.2" font-family="Liberation Sans,sans-serif" font-size="3.2" font-weight="normal" fill="#5e5e5e" text-anchor="middle" textLength="6" lengthAdjust="spacingAndGlyphs" >C372</text>
<rect x="996.7" y="581.6" width="8.4" height="4.8" rx="0" fill="none" stroke="#bdbdbd" stroke-width="0.6" stroke-dasharray="1 0.6"/>
<text x="1000.9" y="585.1" font-family="Liberation Sans,sans-serif" font-size="3.2" font-weight="normal" fill="#4a4a4a" text-anchor="middle" textLength="7" lengthAdjust="spacingAndGlyphs" >C1009</text>
<text x="993.6" y="471.2" font-family="Liberation Sans,sans-serif" font-size="3.2" font-weight="normal" fill="#5e5e5e" text-anchor="middle" textLength="6" lengthAdjust="spacingAndGlyphs" >R3962</text>
<rect x="962.7" y="485.0" width="1.2" height="5.4" rx="0" fill="#b4b4b4" stroke="none" stroke-width="0" />
<rect x="964.9" y="485.0" width="1.2" height="5.4" rx="0" fill="#b4b4b4" stroke="none" stroke-width="0" />
<path d="M962.7 486.6 h3.4 M962.7 488.8 h3.4" fill="none" stroke="#959595" stroke-width="0.6" />
<rect x="951.1" y="473.1" width="1.2" height="5.4" rx="0" fill="#b4b4b4" stroke="none" stroke-width="0" />
<rect x="953.3" y="473.1" width="1.2" height="5.4" rx="0" fill="#b4b4b4" stroke="none" stroke-width="0" />
<path d="M951.1 474.7 h3.4 M951.1 476.9 h3.4" fill="none" stroke="#959595" stroke-width="0.6" />
<text x="940.9" y="554.5" font-family="Liberation Sans,sans-serif" font-size="3.2" font-weight="normal" fill="#5e5e5e" text-anchor="middle" textLength="6" lengthAdjust="spacingAndGlyphs" >R2754</text>
<rect x="1052.3" y="467.5" width="1.2" height="5.4" rx="0" fill="#b4b4b4" stroke="none" stroke-width="0" />
<rect x="1054.5" y="467.5" width="1.2" height="5.4" rx="0" fill="#b4b4b4" stroke="none" stroke-width="0" />
<path d="M1052.3 469.1 h3.4 M1052.3 471.3 h3.4" fill="none" stroke="#959595" stroke-width="0.6" />
<text x="967.9" y="466.9" font-family="Liberation Sans,sans-serif" font-size="3.2" font-weight="normal" fill="#5e5e5e" text-anchor="middle" textLength="6" lengthAdjust="spacingAndGlyphs" >R2620</text>
<text x="953.5" y="585.9" font-family="Liberation Sans,sans-serif" font-size="3.2" font-weight="normal" fill="#5e5e5e" text-anchor="middle" textLength="6" lengthAdjust="spacingAndGlyphs" >C275</text>
<text x="981.9" y="510.1" font-family="Liberation Sans,sans-serif" font-size="3.2" font-weight="normal" fill="#5e5e5e" text-anchor="middle" textLength="6" lengthAdjust="spacingAndGlyphs" >R1124</text>
<rect x="956.5" y="468.4" width="1.2" height="5.4" rx="0" fill="#b4b4b4" stroke="none" stroke-width="0" />
<rect x="958.7" y="468.4" width="1.2" height="5.4" rx="0" fill="#b4b4b4" stroke="none" stroke-width="0" />
<path d="M956.5 470.0 h3.4 M956.5 472.2 h3.4" fill="none" stroke="#959595" stroke-width="0.6" />
<rect x="1002.9" y="509.1" width="8.4" height="4.8" rx="0" fill="none" stroke="#bdbdbd" stroke-width="0.6" stroke-dasharray="1 0.6"/>
<text x="1007.1" y="512.6" font-family="Liberation Sans,sans-serif" font-size="3.2" font-weight="normal" fill="#4a4a4a" text-anchor="middle" textLength="7" lengthAdjust="spacingAndGlyphs" >C343</text>
<rect x="939.2" y="505.2" width="1.2" height="5.4" rx="0" fill="#b4b4b4" stroke="none" stroke-width="0" />
<rect x="941.4" y="505.2" width="1.2" height="5.4" rx="0" fill="#b4b4b4" stroke="none" stroke-width="0" />
<path d="M939.2 506.8 h3.4 M939.2 509.0 h3.4" fill="none" stroke="#959595" stroke-width="0.6" />
<text x="1023.9" y="550.0" font-family="Liberation Sans,sans-serif" font-size="3.2" font-weight="normal" fill="#5e5e5e" text-anchor="middle" textLength="6" lengthAdjust="spacingAndGlyphs" >C600</text>
<text x="1065.5" y="481.2" font-family="Liberation Sans,sans-serif" font-size="4.6" font-weight="bold" fill="#2a2a2a" text-anchor="middle" >✕</text>
<text x="980.6" y="466.0" font-family="Liberation Sans,sans-serif" font-size="3.2" font-weight="normal" fill="#5e5e5e" text-anchor="middle" textLength="6" lengthAdjust="spacingAndGlyphs" >R952</text>
<rect x="985.9" y="555.0" width="1.2" height="5.4" rx="0" fill="#b4b4b4" stroke="none" stroke-width="0" />
<rect x="988.1" y="555.0" width="1.2" height="5.4" rx="0" fill="#b4b4b4" stroke="none" stroke-width="0" />
<path d="M985.9 556.6 h3.4 M985.9 558.8 h3.4" fill="none" stroke="#959595" stroke-width="0.6" />
<rect x="1027.1" y="486.9" width="1.2" height="5.4" rx="0" fill="#b4b4b4" stroke="none" stroke-width="0" />
<rect x="1029.3" y="486.9" width="1.2" height="5.4" rx="0" fill="#b4b4b4" stroke="none" stroke-width="0" />
<path d="M1027.1 488.5 h3.4 M1027.1 490.7 h3.4" fill="none" stroke="#959595" stroke-width="0.6" />
<text x="1092.1" y="468.4" font-family="Liberation Sans,sans-serif" font-size="4.6" font-weight="bold" fill="#2a2a2a" text-anchor="middle" >✕</text>
<text x="940.6" y="582.3" font-family="Liberation Sans,sans-serif" font-size="3.2" font-weight="normal" fill="#5e5e5e" text-anchor="middle" textLength="6" lengthAdjust="spacingAndGlyphs" >L2832</text>
<rect x="965.1" y="504.0" width="1.2" height="5.4" rx="0" fill="#b4b4b4" stroke="none" stroke-width="0" />
<rect x="967.3" y="504.0" width="1.2" height="5.4" rx="0" fill="#b4b4b4" stroke="none" stroke-width="0" />
<path d="M965.1 505.6 h3.4 M965.1 507.8 h3.4" fill="none" stroke="#959595" stroke-width="0.6" />
<rect x="1075.9" y="508.6" width="1.2" height="5.4" rx="0" fill="#b4b4b4" stroke="none" stroke-width="0" />
<rect x="1078.1" y="508.6" width="1.2" height="5.4" rx="0" fill="#b4b4b4" stroke="none" stroke-width="0" />
<path d="M1075.9 510.2 h3.4 M1075.9 512.4 h3.4" fill="none" stroke="#959595" stroke-width="0.6" />
<rect x="1011.1" y="576.2" width="1.2" height="5.4" rx="0" fill="#b4b4b4" stroke="none" stroke-width="0" />
<rect x="1013.3" y="576.2" width="1.2" height="5.4" rx="0" fill="#b4b4b4" stroke="none" stroke-width="0" />
<path d="M1011.1 577.8 h3.4 M1011.1 580.0 h3.4" fill="none" stroke="#959595" stroke-width="0.6" />
<text x="1008.8" y="494.5" font-family="Liberation Sans,sans-serif" font-size="3.2" font-weight="normal" fill="#5e5e5e" text-anchor="middle" textLength="6" lengthAdjust="spacingAndGlyphs" >R3207</text>
<text x="1078.1" y="479.8" font-family="Liberation Sans,sans-serif" font-size="3.2" font-weight="normal" fill="#5e5e5e" text-anchor="middle" textLength="6" lengthAdjust="spacingAndGlyphs" >R3370</text>
<text x="963.0" y="498.1" font-family="Liberation Sans,sans-serif" font-size="3.2" font-weight="normal" fill="#5e5e5e" text-anchor="middle" textLength="6" lengthAdjust="spacingAndGlyphs" >L3908</text>
<rect x="930.9" y="519.8" width="1.2" height="5.4" rx="0" fill="#b4b4b4" stroke="none" stroke-width="0" />
<rect x="933.1" y="519.8" width="1.2" height="5.4" rx="0" fill="#b4b4b4" stroke="none" stroke-width="0" />
<path d="M930.9 521.4 h3.4 M930.9 523.6 h3.4" fill="none" stroke="#959595" stroke-width="0.6" />
<text x="1030.0" y="484.4" font-family="Liberation Sans,sans-serif" font-size="3.2" font-weight="normal" fill="#5e5e5e" text-anchor="middle" textLength="6" lengthAdjust="spacingAndGlyphs" >L1561</text>
<rect x="1031.2" y="520.0" width="8.4" height="4.8" rx="0" fill="none" stroke="#bdbdbd" stroke-width="0.6" stroke-dasharray="1 0.6"/>
<text x="1035.4" y="523.5" font-family="Liberation Sans,sans-serif" font-size="3.2" font-weight="normal" fill="#4a4a4a" text-anchor="middle" textLength="7" lengthAdjust="spacingAndGlyphs" >C3304</text>
<text x="980.6" y="586.4" font-family="Liberation Sans,sans-serif" font-size="3.2" font-weight="normal" fill="#5e5e5e" text-anchor="middle" textLength="6" lengthAdjust="spacingAndGlyphs" >L2864</text>
<text x="1048.7" y="477.0" font-family="Liberation Sans,sans-serif" font-size="3.2" font-weight="normal" fill="#5e5e5e" text-anchor="middle" textLength="6" lengthAdjust="spacingAndGlyphs" >C2573</text>
<text x="1020.2" y="567.6" font-family="Liberation Sans,sans-serif" font-size="3.2" font-weight="normal" fill="#5e5e5e" text-anchor="middle" textLength="6" lengthAdjust="spacingAndGlyphs" >L3406</text>
<text x="959.5" y="550.2" font-family="Liberation Sans,sans-serif" font-size="3.2" font-weight="normal" fill="#5e5e5e" text-anchor="middle" textLength="6" lengthAdjust="spacingAndGlyphs" >R3941</text>
<rect x="1074.5" y="488.1" width="8.4" height="4.8" rx="0" fill="none" stroke="#bdbdbd" stroke-width="0.6" stroke-dasharray="1 0.6"/>
<text x="1078.7" y="491.6" font-family="Liberation Sans,sans-serif" font-size="3.2" font-weight="normal" fill="#4a4a4a" text-anchor="middle" textLength="7" lengthAdjust="spacingAndGlyphs" >R3773</text>
<rect x="957.1" y="568.6" width="1.2" height="5.4" rx="0" fill="#b4b4b4" stroke="none" stroke-width="0" />
<rect x="959.3" y="568.6" width="1.2" height="5.4" rx="0" fill="#b4b4b4" stroke="none" stroke-width="0" />
<path d="M957.1 570.2 h3.4 M957.1 572.4 h3.4" fill="none" stroke="#959595" stroke-width="0.6" />
<rect x="1051.4" y="554.8" width="8.4" height="4.8" rx="0" fill="none" stroke="#bdbdbd" stroke-width="0.6" stroke-dasharray="1 0.6"/>
<text x="1055.6" y="558.3" font-family="Liberation Sans,sans-serif" font-size="3.2" font-weight="normal" fill="#4a4a4a" text-anchor="middle" textLength="7" lengthAdjust="spacingAndGlyphs" >C3046</text>
<text x="1027.3" y="478.9" font-family="Liberation Sans,sans-serif" font-size="3.2" font-weight="normal" fill="#5e5e5e" text-anchor="middle" textLength="6" lengthAdjust="spacingAndGlyphs" >L2208</text>
<text x="997.4" y="533.8" font-family="Liberation Sans,sans-serif" font-size="3.2" font-weight="normal" fill="#5e5e5e" text-anchor="middle" textLength="6" lengthAdjust="spacingAndGlyphs" >C177</text>
<rect x="999.1" y="468.6" width="1.2" height="5.4" rx="0" fill="#b4b4b4" stroke="none" stroke-width="0" />
<rect x="1001.3" y="468.6" width="1.2" height="5.4" rx="0" fill="#b4b4b4" stroke="none" stroke-width="0" />
<path d="M999.1 470.2 h3.4 M999.1 472.4 h3.4" fill="none" stroke="#959595" stroke-width="0.6" />
<text x="1043.6" y="499.2" font-family="Liberation Sans,sans-serif" font-size="3.2" font-weight="normal" fill="#5e5e5e" text-anchor="middle" textLength="6" lengthAdjust="spacingAndGlyphs" >C3507</text>
<rect x="1037.6" y="463.4" width="1.2" height="5.4" rx="0" fill="#b4b4b4" stroke="none" stroke-width="0" />
<rect x="1039.8" y="463.4" width="1.2" height="5.4" rx="0" fill="#b4b4b4" stroke="none" stroke-width="0" />
<path d="M1037.6 465.0 h3.4 M1037.6 467.2 h3.4" fill="none" stroke="#959595" stroke-width="0.6" />
<rect x="1078.0" y="579.1" width="8.4" height="4.8" rx="0" fill="none" stroke="#bdbdbd" stroke-width="0.6" stroke-dasharray="1 0.6"/>
<text x="1082.2" y="582.6" font-family="Liberation Sans,sans-serif" font-size="3.2" font-weight="normal" fill="#4a4a4a" text-anchor="middle" textLength="7" lengthAdjust="spacingAndGlyphs" >C2961</text>
<text x="1032.9" y="545.4" font-family="Liberation Sans,sans-serif" font-size="4.6" font-weight="bold" fill="#2a2a2a" text-anchor="middle" >✕</text>
<text x="939.7" y="559.5" font-family="Liberation Sans,sans-serif" font-size="3.2" font-weight="normal" fill="#5e5e5e" text-anchor="middle" textLength="6" lengthAdjust="spacingAndGlyphs" >R3821</text>
<rect x="1086.0" y="472.5" width="1.2" height="5.4" rx="0" fill="#b4b4b4" stroke="none" stroke-width="0" />
<rect x="1088.2" y="472.5" width="1.2" height="5.4" rx="0" fill="#b4b4b4" stroke="none" stroke-width="0" />
<path d="M1086.0 474.1 h3.4 M1086.0 476.3 h3.4" fill="none" stroke="#959595" stroke-width="0.6" />
<text x="1000.1" y="488.2" font-family="Liberation Sans,sans-serif" font-size="3.2" font-weight="normal" fill="#5e5e5e" text-anchor="middle" textLength="6" lengthAdjust="spacingAndGlyphs" >R454</text>
<rect x="996.9" y="550.1" width="1.2" height="5.4" rx="0" fill="#b4b4b4" stroke="none" stroke-width="0" />
<rect x="999.1" y="550.1" width="1.2" height="5.4" rx="0" fill="#b4b4b4" stroke="none" stroke-width="0" />
<path d="M996.9 551.7 h3.4 M996.9 553.9 h3.4" fill="none" stroke="#959595" stroke-width="0.6" />
<text x="954.4" y="486.3" font-family="Liberation Sans,sans-serif" font-size="3.2" font-weight="normal" fill="#5e5e5e" text-anchor="middle" textLength="6" lengthAdjust="spacingAndGlyphs" >C1100</text>
<rect x="1079.2" y="564.2" width="1.2" height="5.4" rx="0" fill="#b4b4b4" stroke="none" stroke-width="0" />
<rect x="1081.4" y="564.2" width="1.2" height="5.4" rx="0" fill="#b4b4b4" stroke="none" stroke-width="0" />
<path d="M1079.2 565.8 h3.4 M1079.2 568.0 h3.4" fill="none" stroke="#959595" stroke-width="0.6" />
<rect x="973.6" y="548.6" width="1.2" height="5.4" rx="0" fill="#b4b4b4" stroke="none" stroke-width="0" />
<rect x="975.8" y="548.6" width="1.2" height="5.4" rx="0" fill="#b4b4b4" stroke="none" stroke-width="0" />
<path d="M973.6 550.2 h3.4 M973.6 552.4 h3.4" fill="none" stroke="#959595" stroke-width="0.6" />
<text x="968.4" y="472.2" font-family="Liberation Sans,sans-serif" font-size="3.2" font-weight="normal" fill="#5e5e5e" text-anchor="middle" textLength="6" lengthAdjust="spacingAndGlyphs" >C2563</text>
<text x="1009.2" y="485.0" font-family="Liberation Sans,sans-serif" font-size="3.2" font-weight="normal" fill="#5e5e5e" text-anchor="middle" textLength="6" lengthAdjust="spacingAndGlyphs" >R880</text>
<text x="980.2" y="484.9" font-family="Liberation Sans,sans-serif" font-size="3.2" font-weight="normal" fill="#5e5e5e" text-anchor="middle" textLength="6" lengthAdjust="spacingAndGlyphs" >C882</text>
<rect x="949.1" y="518.1" width="1.2" height="5.4" rx="0" fill="#b4b4b4" stroke="none" stroke-width="0" />
<rect x="951.3" y="518.1" width="1.2" height="5.4" rx="0" fill="#b4b4b4" stroke="none" stroke-width="0" />
<path d="M949.1 519.7 h3.4 M949.1 521.9 h3.4" fill="none" stroke="#959595" stroke-width="0.6" />
<rect x="1029.6" y="549.1" width="1.2" height="5.4" rx="0" fill="#b4b4b4" stroke="none" stroke-width="0" />
<rect x="1031.8" y="549.1" width="1.2" height="5.4" rx="0" fill="#b4b4b4" stroke="none" stroke-width="0" />
<path d="M1029.6 550.7 h3.4 M1029.6 552.9 h3.4" fill="none" stroke="#959595" stroke-width="0.6" />
<rect x="987.7" y="474.7" width="1.2" height="5.4" rx="0" fill="#b4b4b4" stroke="none" stroke-width="0" />
<rect x="989.9" y="474.7" width="1.2" height="5.4" rx="0" fill="#b4b4b4" stroke="none" stroke-width="0" />
<path d="M987.7 476.3 h3.4 M987.7 478.5 h3.4" fill="none" stroke="#959595" stroke-width="0.6" />
<rect x="953.8" y="560.5" width="1.2" height="5.4" rx="0" fill="#b4b4b4" stroke="none" stroke-width="0" />
<rect x="956.0" y="560.5" width="1.2" height="5.4" rx="0" fill="#b4b4b4" stroke="none" stroke-width="0" />
<path d="M953.8 562.1 h3.4 M953.8 564.3 h3.4" fill="none" stroke="#959595" stroke-width="0.6" />
<text x="1023.5" y="517.4" font-family="Liberation Sans,sans-serif" font-size="3.2" font-weight="normal" fill="#5e5e5e" text-anchor="middle" textLength="6" lengthAdjust="spacingAndGlyphs" >C3714</text>
<text x="1080.6" y="520.0" font-family="Liberation Sans,sans-serif" font-size="3.2" font-weight="normal" fill="#5e5e5e" text-anchor="middle" textLength="6" lengthAdjust="spacingAndGlyphs" >C1519</text>
<text x="963.7" y="481.1" font-family="Liberation Sans,sans-serif" font-size="3.2" font-weight="normal" fill="#5e5e5e" text-anchor="middle" textLength="6" lengthAdjust="spacingAndGlyphs" >C3331</text>
<rect x="977.1" y="574.3" width="8.4" height="4.8" rx="0" fill="none" stroke="#bdbdbd" stroke-width="0.6" stroke-dasharray="1 0.6"/>
<text x="981.3" y="577.8" font-family="Liberation Sans,sans-serif" font-size="3.2" font-weight="normal" fill="#4a4a4a" text-anchor="middle" textLength="7" lengthAdjust="spacingAndGlyphs" >R927</text>
<rect x="1047.1" y="467.1" width="1.2" height="5.4" rx="0" fill="#b4b4b4" stroke="none" stroke-width="0" />
<rect x="1049.3" y="467.1" width="1.2" height="5.4" rx="0" fill="#b4b4b4" stroke="none" stroke-width="0" />
<path d="M1047.1 468.7 h3.4 M1047.1 470.9 h3.4" fill="none" stroke="#959595" stroke-width="0.6" />
<text x="989.3" y="488.3" font-family="Liberation Sans,sans-serif" font-size="3.2" font-weight="normal" fill="#5e5e5e" text-anchor="middle" textLength="6" lengthAdjust="spacingAndGlyphs" >C2768</text>
<text x="992.5" y="497.3" font-family="Liberation Sans,sans-serif" font-size="3.2" font-weight="normal" fill="#5e5e5e" text-anchor="middle" textLength="6" lengthAdjust="spacingAndGlyphs" >C3636</text>
<rect x="1062.4" y="521.5" width="8.4" height="4.8" rx="0" fill="none" stroke="#bdbdbd" stroke-width="0.6" stroke-dasharray="1 0.6"/>
<text x="1066.6" y="525.0" font-family="Liberation Sans,sans-serif" font-size="3.2" font-weight="normal" fill="#4a4a4a" text-anchor="middle" textLength="7" lengthAdjust="spacingAndGlyphs" >R1907</text>
<rect x="1091.8" y="519.6" width="1.2" height="5.4" rx="0" fill="#b4b4b4" stroke="none" stroke-width="0" />
<rect x="1094.0" y="519.6" width="1.2" height="5.4" rx="0" fill="#b4b4b4" stroke="none" stroke-width="0" />
<path d="M1091.8 521.2 h3.4 M1091.8 523.4 h3.4" fill="none" stroke="#959595" stroke-width="0.6" />
<rect x="995.1" y="504.7" width="1.2" height="5.4" rx="0" fill="#b4b4b4" stroke="none" stroke-width="0" />
<rect x="997.3" y="504.7" width="1.2" height="5.4" rx="0" fill="#b4b4b4" stroke="none" stroke-width="0" />
<path d="M995.1 506.3 h3.4 M995.1 508.5 h3.4" fill="none" stroke="#959595" stroke-width="0.6" />
<rect x="1005.8" y="563.2" width="1.2" height="5.4" rx="0" fill="#b4b4b4" stroke="none" stroke-width="0" />
<rect x="1008.0" y="563.2" width="1.2" height="5.4" rx="0" fill="#b4b4b4" stroke="none" stroke-width="0" />
<path d="M1005.8 564.8 h3.4 M1005.8 567.0 h3.4" fill="none" stroke="#959595" stroke-width="0.6" />
<text x="982.0" y="477.3" font-family="Liberation Sans,sans-serif" font-size="3.2" font-weight="normal" fill="#5e5e5e" text-anchor="middle" textLength="6" lengthAdjust="spacingAndGlyphs" >R3036</text>
<text x="933.5" y="514.3" font-family="Liberation Sans,sans-serif" font-size="3.2" font-weight="normal" fill="#5e5e5e" text-anchor="middle" textLength="6" lengthAdjust="spacingAndGlyphs" >L3446</text>
<text x="1075.6" y="486.4" font-family="Liberation Sans,sans-serif" font-size="3.2" font-weight="normal" fill="#5e5e5e" text-anchor="middle" textLength="6" lengthAdjust="spacingAndGlyphs" >C2836</text>
<text x="970.5" y="572.0" font-family="Liberation Sans,sans-serif" font-size="3.2" font-weight="normal" fill="#5e5e5e" text-anchor="middle" textLength="6" lengthAdjust="spacingAndGlyphs" >R768</text>
<rect x="962.6" y="575.1" width="1.2" height="5.4" rx="0" fill="#b4b4b4" stroke="none" stroke-width="0" />
<rect x="964.8" y="575.1" width="1.2" height="5.4" rx="0" fill="#b4b4b4" stroke="none" stroke-width="0" />
<path d="M962.6 576.7 h3.4 M962.6 578.9 h3.4" fill="none" stroke="#959595" stroke-width="0.6" />
<rect x="1034.3" y="488.9" width="8.4" height="4.8" rx="0" fill="none" stroke="#bdbdbd" stroke-width="0.6" stroke-dasharray="1 0.6"/>
<text x="1038.5" y="492.4" font-family="Liberation Sans,sans-serif" font-size="3.2" font-weight="normal" fill="#4a4a4a" text-anchor="middle" textLength="7" lengthAdjust="spacingAndGlyphs" >L2803</text>
<text x="1035.6" y="517.5" font-family="Liberation Sans,sans-serif" font-size="3.2" font-weight="normal" fill="#5e5e5e" text-anchor="middle" textLength="6" lengthAdjust="spacingAndGlyphs" >L3791</text>
<text x="941.6" y="565.4" font-family="Liberation Sans,sans-serif" font-size="3.2" font-weight="normal" fill="#5e5e5e" text-anchor="middle" textLength="6" lengthAdjust="spacingAndGlyphs" >C3037</text>
<text x="957.2" y="507.9" font-family="Liberation Sans,sans-serif" font-size="3.2" font-weight="normal" fill="#5e5e5e" text-anchor="middle" textLength="6" lengthAdjust="spacingAndGlyphs" >R2033</text>
<text x="992.6" y="464.9" font-family="Liberation Sans,sans-serif" font-size="3.2" font-weight="normal" fill="#5e5e5e" text-anchor="middle" textLength="6" lengthAdjust="spacingAndGlyphs" >R1460</text>
<text x="952.6" y="516.7" font-family="Liberation Sans,sans-serif" font-size="3.2" font-weight="normal" fill="#5e5e5e" text-anchor="middle" textLength="6" lengthAdjust="spacingAndGlyphs" >R3832</text>
<text x="1066.9" y="540.0" font-family="Liberation Sans,sans-serif" font-size="3.2" font-weight="normal" fill="#5e5e5e" text-anchor="middle" textLength="6" lengthAdjust="spacingAndGlyphs" >C3006</text>
<rect x="1059.2" y="544.3" width="1.2" height="5.4" rx="0" fill="#b4b4b4" stroke="none" stroke-width="0" />
<rect x="1061.4" y="544.3" width="1.2" height="5.4" rx="0" fill="#b4b4b4" stroke="none" stroke-width="0" />
<path d="M1059.2 545.9 h3.4 M1059.2 548.1 h3.4" fill="none" stroke="#959595" stroke-width="0.6" />
<text x="1001.3" y="494.5" font-family="Liberation Sans,sans-serif" font-size="4.6" font-weight="bold" fill="#2a2a2a" text-anchor="middle" >✕</text>
<rect x="974.4" y="493.6" width="8.4" height="4.8" rx="0" fill="none" stroke="#bdbdbd" stroke-width="0.6" stroke-dasharray="1 0.6"/>
<text x="978.6" y="497.1" font-family="Liberation Sans,sans-serif" font-size="3.2" font-weight="normal" fill="#4a4a4a" text-anchor="middle" textLength="7" lengthAdjust="spacingAndGlyphs" >C658</text>
<text x="1004.1" y="517.6" font-family="Liberation Sans,sans-serif" font-size="3.2" font-weight="normal" fill="#5e5e5e" text-anchor="middle" textLength="6" lengthAdjust="spacingAndGlyphs" >R523</text>
<text x="943.6" y="588.8" font-family="Liberation Sans,sans-serif" font-size="3.2" font-weight="normal" fill="#5e5e5e" text-anchor="middle" textLength="6" lengthAdjust="spacingAndGlyphs" >L1729</text>
<text x="1010.9" y="507.1" font-family="Liberation Sans,sans-serif" font-size="3.2" font-weight="normal" fill="#5e5e5e" text-anchor="middle" textLength="6" lengthAdjust="spacingAndGlyphs" >L452</text>
<text x="1087.1" y="514.7" font-family="Liberation Sans,sans-serif" font-size="4.6" font-weight="bold" fill="#2a2a2a" text-anchor="middle" >✕</text>
<text x="939.8" y="542.7" font-family="Liberation Sans,sans-serif" font-size="3.2" font-weight="normal" fill="#5e5e5e" text-anchor="middle" textLength="6" lengthAdjust="spacingAndGlyphs" >C499</text>
<text x="1021.4" y="560.7" font-family="Liberation Sans,sans-serif" font-size="3.2" font-weight="normal" fill="#5e5e5e" text-anchor="middle" textLength="6" lengthAdjust="spacingAndGlyphs" >C659</text>
<text x="960.9" y="465.8" font-family="Liberation Sans,sans-serif" font-size="4.6" font-weight="bold" fill="#2a2a2a" text-anchor="middle" >✕</text>
<text x="1022.4" y="577.9" font-family="Liberation Sans,sans-serif" font-size="3.2" font-weight="normal" fill="#5e5e5e" text-anchor="middle" textLength="6" lengthAdjust="spacingAndGlyphs" >R3097</text>
<text x="996.6" y="478.1" font-family="Liberation Sans,sans-serif" font-size="3.2" font-weight="normal" fill="#5e5e5e" text-anchor="middle" textLength="6" lengthAdjust="spacingAndGlyphs" >R3451</text>
<rect x="1026.2" y="463.0" width="1.2" height="5.4" rx="0" fill="#b4b4b4" stroke="none" stroke-width="0" />
<rect x="1028.4" y="463.0" width="1.2" height="5.4" rx="0" fill="#b4b4b4" stroke="none" stroke-width="0" />
<path d="M1026.2 464.6 h3.4 M1026.2 466.8 h3.4" fill="none" stroke="#959595" stroke-width="0.6" />
<rect x="1083.7" y="499.8" width="1.2" height="5.4" rx="0" fill="#b4b4b4" stroke="none" stroke-width="0" />
<rect x="1085.9" y="499.8" width="1.2" height="5.4" rx="0" fill="#b4b4b4" stroke="none" stroke-width="0" />
<path d="M1083.7 501.4 h3.4 M1083.7 503.6 h3.4" fill="none" stroke="#959595" stroke-width="0.6" />
<rect x="1062.0" y="574.1" width="8.4" height="4.8" rx="0" fill="none" stroke="#bdbdbd" stroke-width="0.6" stroke-dasharray="1 0.6"/>
<text x="1066.2" y="577.6" font-family="Liberation Sans,sans-serif" font-size="3.2" font-weight="normal" fill="#4a4a4a" text-anchor="middle" textLength="7" lengthAdjust="spacingAndGlyphs" >R958</text>
<text x="1052.4" y="531.5" font-family="Liberation Sans,sans-serif" font-size="4.6" font-weight="bold" fill="#2a2a2a" text-anchor="middle" >✕</text>
<rect x="947.4" y="539.6" width="8.4" height="4.8" rx="0" fill="none" stroke="#bdbdbd" stroke-width="0.6" stroke-dasharray="1 0.6"/>
<text x="951.6" y="543.1" font-family="Liberation Sans,sans-serif" font-size="3.2" font-weight="normal" fill="#4a4a4a" text-anchor="middle" textLength="7" lengthAdjust="spacingAndGlyphs" >C438</text>
<rect x="991.5" y="582.9" width="1.2" height="5.4" rx="0" fill="#b4b4b4" stroke="none" stroke-width="0" />
<rect x="993.7" y="582.9" width="1.2" height="5.4" rx="0" fill="#b4b4b4" stroke="none" stroke-width="0" />
<path d="M991.5 584.5 h3.4 M991.5 586.7 h3.4" fill="none" stroke="#959595" stroke-width="0.6" />
<text x="984.6" y="472.4" font-family="Liberation Sans,sans-serif" font-size="4.6" font-weight="bold" fill="#2a2a2a" text-anchor="middle" >✕</text>
<rect x="993.2" y="564.4" width="8.4" height="4.8" rx="0" fill="none" stroke="#bdbdbd" stroke-width="0.6" stroke-dasharray="1 0.6"/>
<text x="997.4" y="567.9" font-family="Liberation Sans,sans-serif" font-size="3.2" font-weight="normal" fill="#4a4a4a" text-anchor="middle" textLength="7" lengthAdjust="spacingAndGlyphs" >L3185</text>
<rect x="939.5" y="532.7" width="1.2" height="5.4" rx="0" fill="#b4b4b4" stroke="none" stroke-width="0" />
<rect x="941.7" y="532.7" width="1.2" height="5.4" rx="0" fill="#b4b4b4" stroke="none" stroke-width="0" />
<path d="M939.5 534.3 h3.4 M939.5 536.5 h3.4" fill="none" stroke="#959595" stroke-width="0.6" />
<text x="953.0" y="493.1" font-family="Liberation Sans,sans-serif" font-size="3.2" font-weight="normal" fill="#5e5e5e" text-anchor="middle" textLength="6" lengthAdjust="spacingAndGlyphs" >L2493</text>
<text x="1026.8" y="513.0" font-family="Liberation Sans,sans-serif" font-size="3.2" font-weight="normal" fill="#5e5e5e" text-anchor="middle" textLength="6" lengthAdjust="spacingAndGlyphs" >C1098</text>
<rect x="934.1" y="496.3" width="8.4" height="4.8" rx="0" fill="none" stroke="#bdbdbd" stroke-width="0.6" stroke-dasharray="1 0.6"/>
<text x="938.3" y="499.8" font-family="Liberation Sans,sans-serif" font-size="3.2" font-weight="normal" fill="#4a4a4a" text-anchor="middle" textLength="7" lengthAdjust="spacingAndGlyphs" >C3295</text>
<rect x="1011.4" y="532.1" width="8.4" height="4.8" rx="0" fill="none" stroke="#bdbdbd" stroke-width="0.6" stroke-dasharray="1 0.6"/>
<text x="1015.6" y="535.6" font-family="Liberation Sans,sans-serif" font-size="3.2" font-weight="normal" fill="#4a4a4a" text-anchor="middle" textLength="7" lengthAdjust="spacingAndGlyphs" >C2804</text>
<text x="1060.1" y="563.5" font-family="Liberation Sans,sans-serif" font-size="3.2" font-weight="normal" fill="#5e5e5e" text-anchor="middle" textLength="6" lengthAdjust="spacingAndGlyphs" >C3444</text>
<text x="1045.6" y="512.1" font-family="Liberation Sans,sans-serif" font-size="3.2" font-weight="normal" fill="#5e5e5e" text-anchor="middle" textLength="6" lengthAdjust="spacingAndGlyphs" >R3134</text>
<text x="1035.4" y="499.5" font-family="Liberation Sans,sans-serif" font-size="3.2" font-weight="normal" fill="#5e5e5e" text-anchor="middle" textLength="6" lengthAdjust="spacingAndGlyphs" >C723</text>
<text x="1042.6" y="486.5" font-family="Liberation Sans,sans-serif" font-size="3.2" font-weight="normal" fill="#5e5e5e" text-anchor="middle" textLength="6" lengthAdjust="spacingAndGlyphs" >R855</text>
<rect x="1022.1" y="532.5" width="1.2" height="5.4" rx="0" fill="#b4b4b4" stroke="none" stroke-width="0" />
<rect x="1024.3" y="532.5" width="1.2" height="5.4" rx="0" fill="#b4b4b4" stroke="none" stroke-width="0" />
<path d="M1022.1 534.1 h3.4 M1022.1 536.3 h3.4" fill="none" stroke="#959595" stroke-width="0.6" />
<text x="941.8" y="569.8" font-family="Liberation Sans,sans-serif" font-size="3.2" font-weight="normal" fill="#5e5e5e" text-anchor="middle" textLength="6" lengthAdjust="spacingAndGlyphs" >R1166</text>
<text x="1005.6" y="525.2" font-family="Liberation Sans,sans-serif" font-size="3.2" font-weight="normal" fill="#5e5e5e" text-anchor="middle" textLength="6" lengthAdjust="spacingAndGlyphs" >R2273</text>
<rect x="1071.7" y="499.7" width="8.4" height="4.8" rx="0" fill="none" stroke="#bdbdbd" stroke-width="0.6" stroke-dasharray="1 0.6"/>
<text x="1075.9" y="503.2" font-family="Liberation Sans,sans-serif" font-size="3.2" font-weight="normal" fill="#4a4a4a" text-anchor="middle" textLength="7" lengthAdjust="spacingAndGlyphs" >R2384</text>
<rect x="966.5" y="547.2" width="1.2" height="5.4" rx="0" fill="#b4b4b4" stroke="none" stroke-width="0" />
<rect x="968.7" y="547.2" width="1.2" height="5.4" rx="0" fill="#b4b4b4" stroke="none" stroke-width="0" />
<path d="M966.5 548.8 h3.4 M966.5 551.0 h3.4" fill="none" stroke="#959595" stroke-width="0.6" />
<text x="972.1" y="484.0" font-family="Liberation Sans,sans-serif" font-size="3.2" font-weight="normal" fill="#5e5e5e" text-anchor="middle" textLength="6" lengthAdjust="spacingAndGlyphs" >R1705</text>
<text x="1088.6" y="557.2" font-family="Liberation Sans,sans-serif" font-size="3.2" font-weight="normal" fill="#5e5e5e" text-anchor="middle" textLength="6" lengthAdjust="spacingAndGlyphs" >C2122</text>
<text x="1091.5" y="574.0" font-family="Liberation Sans,sans-serif" font-size="3.2" font-weight="normal" fill="#5e5e5e" text-anchor="middle" textLength="6" lengthAdjust="spacingAndGlyphs" >R340</text>
<rect x="1018.7" y="482.2" width="1.2" height="5.4" rx="0" fill="#b4b4b4" stroke="none" stroke-width="0" />
<rect x="1020.9" y="482.2" width="1.2" height="5.4" rx="0" fill="#b4b4b4" stroke="none" stroke-width="0" />
<path d="M1018.7 483.8 h3.4 M1018.7 486.0 h3.4" fill="none" stroke="#959595" stroke-width="0.6" />
<text x="1055.5" y="465.7" font-family="Liberation Sans,sans-serif" font-size="3.2" font-weight="normal" fill="#5e5e5e" text-anchor="middle" textLength="6" lengthAdjust="spacingAndGlyphs" >C2494</text>
<text x="956.2" y="512.2" font-family="Liberation Sans,sans-serif" font-size="3.2" font-weight="normal" fill="#5e5e5e" text-anchor="middle" textLength="6" lengthAdjust="spacingAndGlyphs" >C420</text>
<rect x="948.5" y="497.4" width="1.2" height="5.4" rx="0" fill="#b4b4b4" stroke="none" stroke-width="0" />
<rect x="950.7" y="497.4" width="1.2" height="5.4" rx="0" fill="#b4b4b4" stroke="none" stroke-width="0" />
<path d="M948.5 499.0 h3.4 M948.5 501.2 h3.4" fill="none" stroke="#959595" stroke-width="0.6" />
<rect x="1068.5" y="580.2" width="1.2" height="5.4" rx="0" fill="#b4b4b4" stroke="none" stroke-width="0" />
<rect x="1070.7" y="580.2" width="1.2" height="5.4" rx="0" fill="#b4b4b4" stroke="none" stroke-width="0" />
<path d="M1068.5 581.8 h3.4 M1068.5 584.0 h3.4" fill="none" stroke="#959595" stroke-width="0.6" />
<rect x="1017.4" y="539.9" width="8.4" height="4.8" rx="0" fill="none" stroke="#bdbdbd" stroke-width="0.6" stroke-dasharray="1 0.6"/>
<text x="1021.6" y="543.4" font-family="Liberation Sans,sans-serif" font-size="3.2" font-weight="normal" fill="#4a4a4a" text-anchor="middle" textLength="7" lengthAdjust="spacingAndGlyphs" >R101</text>
<text x="991.8" y="551.8" font-family="Liberation Sans,sans-serif" font-size="3.2" font-weight="normal" fill="#5e5e5e" text-anchor="middle" textLength="6" lengthAdjust="spacingAndGlyphs" >R363</text>
<text x="980.2" y="490.8" font-family="Liberation Sans,sans-serif" font-size="3.2" font-weight="normal" fill="#5e5e5e" text-anchor="middle" textLength="6" lengthAdjust="spacingAndGlyphs" >R3201</text>
<text x="1011.3" y="477.5" font-family="Liberation Sans,sans-serif" font-size="3.2" font-weight="normal" fill="#5e5e5e" text-anchor="middle" textLength="6" lengthAdjust="spacingAndGlyphs" >C3447</text>
<text x="1054.8" y="495.9" font-family="Liberation Sans,sans-serif" font-size="3.2" font-weight="normal" fill="#5e5e5e" text-anchor="middle" textLength="6" lengthAdjust="spacingAndGlyphs" >R3912</text>
<text x="980.9" y="505.5" font-family="Liberation Sans,sans-serif" font-size="3.2" font-weight="normal" fill="#5e5e5e" text-anchor="middle" textLength="6" lengthAdjust="spacingAndGlyphs" >L2414</text>
<rect x="1024.7" y="469.5" width="1.2" height="5.4" rx="0" fill="#b4b4b4" stroke="none" stroke-width="0" />
<rect x="1026.9" y="469.5" width="1.2" height="5.4" rx="0" fill="#b4b4b4" stroke="none" stroke-width="0" />
<path d="M1024.7 471.1 h3.4 M1024.7 473.3 h3.4" fill="none" stroke="#959595" stroke-width="0.6" />
<rect x="1083.2" y="572.0" width="1.2" height="5.4" rx="0" fill="#b4b4b4" stroke="none" stroke-width="0" />
<rect x="1085.4" y="572.0" width="1.2" height="5.4" rx="0" fill="#b4b4b4" stroke="none" stroke-width="0" />
<path d="M1083.2 573.6 h3.4 M1083.2 575.8 h3.4" fill="none" stroke="#959595" stroke-width="0.6" />
<rect x="930.4" y="502.4" width="1.2" height="5.4" rx="0" fill="#b4b4b4" stroke="none" stroke-width="0" />
<rect x="932.6" y="502.4" width="1.2" height="5.4" rx="0" fill="#b4b4b4" stroke="none" stroke-width="0" />
<path d="M930.4 504.0 h3.4 M930.4 506.2 h3.4" fill="none" stroke="#959595" stroke-width="0.6" />
<rect x="1025.0" y="563.3" width="1.2" height="5.4" rx="0" fill="#b4b4b4" stroke="none" stroke-width="0" />
<rect x="1027.2" y="563.3" width="1.2" height="5.4" rx="0" fill="#b4b4b4" stroke="none" stroke-width="0" />
<path d="M1025.0 564.9 h3.4 M1025.0 567.1 h3.4" fill="none" stroke="#959595" stroke-width="0.6" />
<text x="948.9" y="531.7" font-family="Liberation Sans,sans-serif" font-size="3.2" font-weight="normal" fill="#5e5e5e" text-anchor="middle" textLength="6" lengthAdjust="spacingAndGlyphs" >C3957</text>
<text x="979.1" y="558.4" font-family="Liberation Sans,sans-serif" font-size="3.2" font-weight="normal" fill="#5e5e5e" text-anchor="middle" textLength="6" lengthAdjust="spacingAndGlyphs" >L2948</text>
<text x="1017.4" y="502.5" font-family="Liberation Sans,sans-serif" font-size="3.2" font-weight="normal" fill="#5e5e5e" text-anchor="middle" textLength="6" lengthAdjust="spacingAndGlyphs" >C359</text>
<text x="982.8" y="549.1" font-family="Liberation Sans,sans-serif" font-size="3.2" font-weight="normal" fill="#5e5e5e" text-anchor="middle" textLength="6" lengthAdjust="spacingAndGlyphs" >C2294</text>
<rect x="940.5" y="522.5" width="1.2" height="5.4" rx="0" fill="#b4b4b4" stroke="none" stroke-width="0" />
<rect x="942.7" y="522.5" width="1.2" height="5.4" rx="0" fill="#b4b4b4" stroke="none" stroke-width="0" />
<path d="M940.5 524.1 h3.4 M940.5 526.3 h3.4" fill="none" stroke="#959595" stroke-width="0.6" />
<text x="1038.6" y="512.1" font-family="Liberation Sans,sans-serif" font-size="4.6" font-weight="bold" fill="#2a2a2a" text-anchor="middle" >✕</text>
<text x="1064.9" y="486.9" font-family="Liberation Sans,sans-serif" font-size="3.2" font-weight="normal" fill="#5e5e5e" text-anchor="middle" textLength="6" lengthAdjust="spacingAndGlyphs" >C2296</text>
<text x="1068.2" y="547.9" font-family="Liberation Sans,sans-serif" font-size="3.2" font-weight="normal" fill="#5e5e5e" text-anchor="middle" textLength="6" lengthAdjust="spacingAndGlyphs" >R560</text>
<text x="934.2" y="493.6" font-family="Liberation Sans,sans-serif" font-size="3.2" font-weight="normal" fill="#5e5e5e" text-anchor="middle" textLength="6" lengthAdjust="spacingAndGlyphs" >C407</text>
<text x="1083.7" y="465.7" font-family="Liberation Sans,sans-serif" font-size="3.2" font-weight="normal" fill="#5e5e5e" text-anchor="middle" textLength="6" lengthAdjust="spacingAndGlyphs" >C2497</text>
<text x="1043.7" y="554.1" font-family="Liberation Sans,sans-serif" font-size="3.2" font-weight="normal" fill="#5e5e5e" text-anchor="middle" textLength="6" lengthAdjust="spacingAndGlyphs" >R3867</text>
<text x="938.0" y="574.4" font-family="Liberation Sans,sans-serif" font-size="3.2" font-weight="normal" fill="#5e5e5e" text-anchor="middle" textLength="6" lengthAdjust="spacingAndGlyphs" >R217</text>
<text x="942.6" y="548.1" font-family="Liberation Sans,sans-serif" font-size="3.2" font-weight="normal" fill="#5e5e5e" text-anchor="middle" textLength="6" lengthAdjust="spacingAndGlyphs" >L1874</text>
<text x="1063.4" y="535.6" font-family="Liberation Sans,sans-serif" font-size="3.2" font-weight="normal" fill="#5e5e5e" text-anchor="middle" textLength="6" lengthAdjust="spacingAndGlyphs" >L516</text>
<text x="956.3" y="581.4" font-family="Liberation Sans,sans-serif" font-size="3.2" font-weight="normal" fill="#5e5e5e" text-anchor="middle" textLength="6" lengthAdjust="spacingAndGlyphs" >L548</text>
<text x="957.7" y="558.9" font-family="Liberation Sans,sans-serif" font-size="3.2" font-weight="normal" fill="#5e5e5e" text-anchor="middle" textLength="6" lengthAdjust="spacingAndGlyphs" >R3856</text>
<rect x="1080.5" y="555.9" width="1.2" height="5.4" rx="0" fill="#b4b4b4" stroke="none" stroke-width="0" />
<rect x="1082.7" y="555.9" width="1.2" height="5.4" rx="0" fill="#b4b4b4" stroke="none" stroke-width="0" />
<path d="M1080.5 557.5 h3.4 M1080.5 559.7 h3.4" fill="none" stroke="#959595" stroke-width="0.6" />
<rect x="989.4" y="571.0" width="8.4" height="4.8" rx="0" fill="none" stroke="#bdbdbd" stroke-width="0.6" stroke-dasharray="1 0.6"/>
<text x="993.6" y="574.5" font-family="Liberation Sans,sans-serif" font-size="3.2" font-weight="normal" fill="#4a4a4a" text-anchor="middle" textLength="7" lengthAdjust="spacingAndGlyphs" >R785</text>
<rect x="1137.0" y="525.1" width="1.2" height="5.4" rx="0" fill="#b4b4b4" stroke="none" stroke-width="0" />
<rect x="1139.2" y="525.1" width="1.2" height="5.4" rx="0" fill="#b4b4b4" stroke="none" stroke-width="0" />
<path d="M1137.0 526.7 h3.4 M1137.0 528.9 h3.4" fill="none" stroke="#959595" stroke-width="0.6" />
<rect x="1150.0" y="523.0" width="8.4" height="4.8" rx="0" fill="none" stroke="#bdbdbd" stroke-width="0.6" stroke-dasharray="1 0.6"/>
<text x="1154.2" y="526.5" font-family="Liberation Sans,sans-serif" font-size="3.2" font-weight="normal" fill="#4a4a4a" text-anchor="middle" textLength="7" lengthAdjust="spacingAndGlyphs" >C3986</text>
<text x="1145.1" y="522.5" font-family="Liberation Sans,sans-serif" font-size="3.2" font-weight="normal" fill="#5e5e5e" text-anchor="middle" textLength="6" lengthAdjust="spacingAndGlyphs" >R235</text>
<rect x="1146.9" y="483.3" width="1.2" height="5.4" rx="0" fill="#b4b4b4" stroke="none" stroke-width="0" />
<rect x="1149.1" y="483.3" width="1.2" height="5.4" rx="0" fill="#b4b4b4" stroke="none" stroke-width="0" />
<path d="M1146.9 484.9 h3.4 M1146.9 487.1 h3.4" fill="none" stroke="#959595" stroke-width="0.6" />
<text x="1158.2" y="493.6" font-family="Liberation Sans,sans-serif" font-size="3.2" font-weight="normal" fill="#5e5e5e" text-anchor="middle" textLength="6" lengthAdjust="spacingAndGlyphs" >C1977</text>
<rect x="1127.2" y="529.1" width="1.2" height="5.4" rx="0" fill="#b4b4b4" stroke="none" stroke-width="0" />
<rect x="1129.4" y="529.1" width="1.2" height="5.4" rx="0" fill="#b4b4b4" stroke="none" stroke-width="0" />
<path d="M1127.2 530.7 h3.4 M1127.2 532.9 h3.4" fill="none" stroke="#959595" stroke-width="0.6" />
<text x="1116.9" y="493.3" font-family="Liberation Sans,sans-serif" font-size="3.2" font-weight="normal" fill="#5e5e5e" text-anchor="middle" textLength="6" lengthAdjust="spacingAndGlyphs" >R363</text>
<text x="1117.8" y="526.6" font-family="Liberation Sans,sans-serif" font-size="3.2" font-weight="normal" fill="#5e5e5e" text-anchor="middle" textLength="6" lengthAdjust="spacingAndGlyphs" >C2552</text>
<text x="1137.9" y="514.4" font-family="Liberation Sans,sans-serif" font-size="4.6" font-weight="bold" fill="#2a2a2a" text-anchor="middle" >✕</text>
<rect x="1119.4" y="533.0" width="1.2" height="5.4" rx="0" fill="#b4b4b4" stroke="none" stroke-width="0" />
<rect x="1121.6" y="533.0" width="1.2" height="5.4" rx="0" fill="#b4b4b4" stroke="none" stroke-width="0" />
<path d="M1119.4 534.6 h3.4 M1119.4 536.8 h3.4" fill="none" stroke="#959595" stroke-width="0.6" />
<text x="1141.2" y="493.8" font-family="Liberation Sans,sans-serif" font-size="3.2" font-weight="normal" fill="#5e5e5e" text-anchor="middle" textLength="6" lengthAdjust="spacingAndGlyphs" >C1293</text>
<rect x="1115.8" y="508.9" width="1.2" height="5.4" rx="0" fill="#b4b4b4" stroke="none" stroke-width="0" />
<rect x="1118.0" y="508.9" width="1.2" height="5.4" rx="0" fill="#b4b4b4" stroke="none" stroke-width="0" />
<path d="M1115.8 510.5 h3.4 M1115.8 512.7 h3.4" fill="none" stroke="#959595" stroke-width="0.6" />
<rect x="1114.2" y="538.6" width="1.2" height="5.4" rx="0" fill="#b4b4b4" stroke="none" stroke-width="0" />
<rect x="1116.4" y="538.6" width="1.2" height="5.4" rx="0" fill="#b4b4b4" stroke="none" stroke-width="0" />
<path d="M1114.2 540.2 h3.4 M1114.2 542.4 h3.4" fill="none" stroke="#959595" stroke-width="0.6" />
<text x="1104.9" y="537.5" font-family="Liberation Sans,sans-serif" font-size="3.2" font-weight="normal" fill="#5e5e5e" text-anchor="middle" textLength="6" lengthAdjust="spacingAndGlyphs" >C2381</text>
<rect x="1124.7" y="487.8" width="1.2" height="5.4" rx="0" fill="#b4b4b4" stroke="none" stroke-width="0" />
<rect x="1126.9" y="487.8" width="1.2" height="5.4" rx="0" fill="#b4b4b4" stroke="none" stroke-width="0" />
<path d="M1124.7 489.4 h3.4 M1124.7 491.6 h3.4" fill="none" stroke="#959595" stroke-width="0.6" />
<text x="1126.8" y="497.1" font-family="Liberation Sans,sans-serif" font-size="3.2" font-weight="normal" fill="#5e5e5e" text-anchor="middle" textLength="6" lengthAdjust="spacingAndGlyphs" >C3388</text>
<text x="1104.3" y="499.6" font-family="Liberation Sans,sans-serif" font-size="3.2" font-weight="normal" fill="#5e5e5e" text-anchor="middle" textLength="6" lengthAdjust="spacingAndGlyphs" >C2330</text>
<text x="1108.6" y="504.0" font-family="Liberation Sans,sans-serif" font-size="3.2" font-weight="normal" fill="#5e5e5e" text-anchor="middle" textLength="6" lengthAdjust="spacingAndGlyphs" >C808</text>
<text x="1122.9" y="544.9" font-family="Liberation Sans,sans-serif" font-size="3.2" font-weight="normal" fill="#5e5e5e" text-anchor="middle" textLength="6" lengthAdjust="spacingAndGlyphs" >C898</text>
<text x="1136.9" y="545.7" font-family="Liberation Sans,sans-serif" font-size="3.2" font-weight="normal" fill="#5e5e5e" text-anchor="middle" textLength="6" lengthAdjust="spacingAndGlyphs" >R3183</text>
<rect x="1157.5" y="512.5" width="1.2" height="5.4" rx="0" fill="#b4b4b4" stroke="none" stroke-width="0" />
<rect x="1159.7" y="512.5" width="1.2" height="5.4" rx="0" fill="#b4b4b4" stroke="none" stroke-width="0" />
<path d="M1157.5 514.1 h3.4 M1157.5 516.3 h3.4" fill="none" stroke="#959595" stroke-width="0.6" />
<text x="1108.5" y="488.5" font-family="Liberation Sans,sans-serif" font-size="3.2" font-weight="normal" fill="#5e5e5e" text-anchor="middle" textLength="6" lengthAdjust="spacingAndGlyphs" >C1974</text>
<text x="1104.3" y="509.3" font-family="Liberation Sans,sans-serif" font-size="3.2" font-weight="normal" fill="#5e5e5e" text-anchor="middle" textLength="6" lengthAdjust="spacingAndGlyphs" >C3527</text>
<text x="1135.5" y="478.2" font-family="Liberation Sans,sans-serif" font-size="3.2" font-weight="normal" fill="#5e5e5e" text-anchor="middle" textLength="6" lengthAdjust="spacingAndGlyphs" >L308</text>
<rect x="1125.7" y="479.8" width="8.4" height="4.8" rx="0" fill="none" stroke="#bdbdbd" stroke-width="0.6" stroke-dasharray="1 0.6"/>
<text x="1129.9" y="483.3" font-family="Liberation Sans,sans-serif" font-size="3.2" font-weight="normal" fill="#4a4a4a" text-anchor="middle" textLength="7" lengthAdjust="spacingAndGlyphs" >L324</text>
<rect x="1153.4" y="476.3" width="1.2" height="5.4" rx="0" fill="#b4b4b4" stroke="none" stroke-width="0" />
<rect x="1155.6" y="476.3" width="1.2" height="5.4" rx="0" fill="#b4b4b4" stroke="none" stroke-width="0" />
<path d="M1153.4 477.9 h3.4 M1153.4 480.1 h3.4" fill="none" stroke="#959595" stroke-width="0.6" />
<rect x="1135.5" y="503.6" width="1.2" height="5.4" rx="0" fill="#b4b4b4" stroke="none" stroke-width="0" />
<rect x="1137.7" y="503.6" width="1.2" height="5.4" rx="0" fill="#b4b4b4" stroke="none" stroke-width="0" />
<path d="M1135.5 505.2 h3.4 M1135.5 507.4 h3.4" fill="none" stroke="#959595" stroke-width="0.6" />
<text x="1140.2" y="484.8" font-family="Liberation Sans,sans-serif" font-size="3.2" font-weight="normal" fill="#5e5e5e" text-anchor="middle" textLength="6" lengthAdjust="spacingAndGlyphs" >R3823</text>
<rect x="1122.4" y="525.6" width="1.2" height="5.4" rx="0" fill="#b4b4b4" stroke="none" stroke-width="0" />
<rect x="1124.6" y="525.6" width="1.2" height="5.4" rx="0" fill="#b4b4b4" stroke="none" stroke-width="0" />
<path d="M1122.4 527.2 h3.4 M1122.4 529.4 h3.4" fill="none" stroke="#959595" stroke-width="0.6" />
<text x="1158.8" y="498.3" font-family="Liberation Sans,sans-serif" font-size="3.2" font-weight="normal" fill="#5e5e5e" text-anchor="middle" textLength="6" lengthAdjust="spacingAndGlyphs" >L3351</text>
<text x="1154.6" y="555.5" font-family="Liberation Sans,sans-serif" font-size="3.2" font-weight="normal" fill="#5e5e5e" text-anchor="middle" textLength="6" lengthAdjust="spacingAndGlyphs" >R208</text>
<text x="1155.6" y="570.4" font-family="Liberation Sans,sans-serif" font-size="3.2" font-weight="normal" fill="#5e5e5e" text-anchor="middle" textLength="6" lengthAdjust="spacingAndGlyphs" >L2572</text>
<text x="1131.9" y="606.9" font-family="Liberation Sans,sans-serif" font-size="3.2" font-weight="normal" fill="#5e5e5e" text-anchor="middle" textLength="6" lengthAdjust="spacingAndGlyphs" >C2754</text>
<rect x="1142.1" y="603.1" width="1.2" height="5.4" rx="0" fill="#b4b4b4" stroke="none" stroke-width="0" />
<rect x="1144.3" y="603.1" width="1.2" height="5.4" rx="0" fill="#b4b4b4" stroke="none" stroke-width="0" />
<path d="M1142.1 604.7 h3.4 M1142.1 606.9 h3.4" fill="none" stroke="#959595" stroke-width="0.6" />
<text x="1157.2" y="624.8" font-family="Liberation Sans,sans-serif" font-size="3.2" font-weight="normal" fill="#5e5e5e" text-anchor="middle" textLength="6" lengthAdjust="spacingAndGlyphs" >C964</text>
<rect x="1154.0" y="574.0" width="8.4" height="4.8" rx="0" fill="none" stroke="#bdbdbd" stroke-width="0.6" stroke-dasharray="1 0.6"/>
<text x="1158.2" y="577.5" font-family="Liberation Sans,sans-serif" font-size="3.2" font-weight="normal" fill="#4a4a4a" text-anchor="middle" textLength="7" lengthAdjust="spacingAndGlyphs" >C1979</text>
<text x="1155.6" y="613.3" font-family="Liberation Sans,sans-serif" font-size="3.2" font-weight="normal" fill="#5e5e5e" text-anchor="middle" textLength="6" lengthAdjust="spacingAndGlyphs" >C2540</text>
<rect x="1116.6" y="620.9" width="1.2" height="5.4" rx="0" fill="#b4b4b4" stroke="none" stroke-width="0" />
<rect x="1118.8" y="620.9" width="1.2" height="5.4" rx="0" fill="#b4b4b4" stroke="none" stroke-width="0" />
<path d="M1116.6 622.5 h3.4 M1116.6 624.7 h3.4" fill="none" stroke="#959595" stroke-width="0.6" />
<text x="1111.6" y="621.8" font-family="Liberation Sans,sans-serif" font-size="3.2" font-weight="normal" fill="#5e5e5e" text-anchor="middle" textLength="6" lengthAdjust="spacingAndGlyphs" >C3808</text>
<text x="1159.3" y="602.7" font-family="Liberation Sans,sans-serif" font-size="3.2" font-weight="normal" fill="#5e5e5e" text-anchor="middle" textLength="6" lengthAdjust="spacingAndGlyphs" >C2088</text>
<rect x="1155.0" y="584.2" width="1.2" height="5.4" rx="0" fill="#b4b4b4" stroke="none" stroke-width="0" />
<rect x="1157.2" y="584.2" width="1.2" height="5.4" rx="0" fill="#b4b4b4" stroke="none" stroke-width="0" />
<path d="M1155.0 585.8 h3.4 M1155.0 588.0 h3.4" fill="none" stroke="#959595" stroke-width="0.6" />
<rect x="1149.9" y="599.7" width="1.2" height="5.4" rx="0" fill="#b4b4b4" stroke="none" stroke-width="0" />
<rect x="1152.1" y="599.7" width="1.2" height="5.4" rx="0" fill="#b4b4b4" stroke="none" stroke-width="0" />
<path d="M1149.9 601.3 h3.4 M1149.9 603.5 h3.4" fill="none" stroke="#959595" stroke-width="0.6" />
<text x="938.5" y="618.7" font-family="Liberation Sans,sans-serif" font-size="3.2" font-weight="normal" fill="#5e5e5e" text-anchor="middle" textLength="6" lengthAdjust="spacingAndGlyphs" >C987</text>
<rect x="945.6" y="614.6" width="1.2" height="5.4" rx="0" fill="#b4b4b4" stroke="none" stroke-width="0" />
<rect x="947.8" y="614.6" width="1.2" height="5.4" rx="0" fill="#b4b4b4" stroke="none" stroke-width="0" />
<path d="M945.6 616.2 h3.4 M945.6 618.4 h3.4" fill="none" stroke="#959595" stroke-width="0.6" />
<text x="928.2" y="657.2" font-family="Liberation Sans,sans-serif" font-size="3.2" font-weight="normal" fill="#5e5e5e" text-anchor="middle" textLength="6" lengthAdjust="spacingAndGlyphs" >R779</text>
<text x="929.1" y="650.6" font-family="Liberation Sans,sans-serif" font-size="3.2" font-weight="normal" fill="#5e5e5e" text-anchor="middle" textLength="6" lengthAdjust="spacingAndGlyphs" >L1966</text>
<text x="936.5" y="625.0" font-family="Liberation Sans,sans-serif" font-size="4.6" font-weight="bold" fill="#2a2a2a" text-anchor="middle" >✕</text>
<rect x="945.5" y="629.2" width="1.2" height="5.4" rx="0" fill="#b4b4b4" stroke="none" stroke-width="0" />
<rect x="947.7" y="629.2" width="1.2" height="5.4" rx="0" fill="#b4b4b4" stroke="none" stroke-width="0" />
<path d="M945.5 630.8 h3.4 M945.5 633.0 h3.4" fill="none" stroke="#959595" stroke-width="0.6" />
<text x="934.8" y="637.3" font-family="Liberation Sans,sans-serif" font-size="3.2" font-weight="normal" fill="#5e5e5e" text-anchor="middle" textLength="6" lengthAdjust="spacingAndGlyphs" >C1196</text>
<text x="928.6" y="619.9" font-family="Liberation Sans,sans-serif" font-size="3.2" font-weight="normal" fill="#5e5e5e" text-anchor="middle" textLength="6" lengthAdjust="spacingAndGlyphs" >C1476</text>
<text x="946.6" y="624.8" font-family="Liberation Sans,sans-serif" font-size="3.2" font-weight="normal" fill="#5e5e5e" text-anchor="middle" textLength="6" lengthAdjust="spacingAndGlyphs" >C2112</text>
<text x="1066.2" y="705.4" font-family="Liberation Sans,sans-serif" font-size="3.2" font-weight="normal" fill="#5e5e5e" text-anchor="middle" textLength="6" lengthAdjust="spacingAndGlyphs" >C1474</text>
<text x="1063.9" y="697.7" font-family="Liberation Sans,sans-serif" font-size="3.2" font-weight="normal" fill="#5e5e5e" text-anchor="middle" textLength="6" lengthAdjust="spacingAndGlyphs" >L2513</text>
<text x="1051.9" y="695.5" font-family="Liberation Sans,sans-serif" font-size="3.2" font-weight="normal" fill="#5e5e5e" text-anchor="middle" textLength="6" lengthAdjust="spacingAndGlyphs" >C2238</text>
<rect x="1014.3" y="698.9" width="1.2" height="5.4" rx="0" fill="#b4b4b4" stroke="none" stroke-width="0" />
<rect x="1016.5" y="698.9" width="1.2" height="5.4" rx="0" fill="#b4b4b4" stroke="none" stroke-width="0" />
<path d="M1014.3 700.5 h3.4 M1014.3 702.7 h3.4" fill="none" stroke="#959595" stroke-width="0.6" />
<text x="1081.5" y="693.9" font-family="Liberation Sans,sans-serif" font-size="3.2" font-weight="normal" fill="#5e5e5e" text-anchor="middle" textLength="6" lengthAdjust="spacingAndGlyphs" >L2612</text>
<rect x="1042.0" y="692.8" width="1.2" height="5.4" rx="0" fill="#b4b4b4" stroke="none" stroke-width="0" />
<rect x="1044.2" y="692.8" width="1.2" height="5.4" rx="0" fill="#b4b4b4" stroke="none" stroke-width="0" />
<path d="M1042.0 694.4 h3.4 M1042.0 696.6 h3.4" fill="none" stroke="#959595" stroke-width="0.6" />
<rect x="1024.7" y="705.5" width="1.2" height="5.4" rx="0" fill="#b4b4b4" stroke="none" stroke-width="0" />
<rect x="1026.9" y="705.5" width="1.2" height="5.4" rx="0" fill="#b4b4b4" stroke="none" stroke-width="0" />
<path d="M1024.7 707.1 h3.4 M1024.7 709.3 h3.4" fill="none" stroke="#959595" stroke-width="0.6" />
<text x="1013.4" y="710.0" font-family="Liberation Sans,sans-serif" font-size="3.2" font-weight="normal" fill="#5e5e5e" text-anchor="middle" textLength="6" lengthAdjust="spacingAndGlyphs" >R2623</text>
<rect x="1024.0" y="693.9" width="1.2" height="5.4" rx="0" fill="#b4b4b4" stroke="none" stroke-width="0" />
<rect x="1026.2" y="693.9" width="1.2" height="5.4" rx="0" fill="#b4b4b4" stroke="none" stroke-width="0" />
<path d="M1024.0 695.5 h3.4 M1024.0 697.7 h3.4" fill="none" stroke="#959595" stroke-width="0.6" />
<text x="1058.3" y="709.0" font-family="Liberation Sans,sans-serif" font-size="4.6" font-weight="bold" fill="#2a2a2a" text-anchor="middle" >✕</text>
<text x="1072.5" y="698.5" font-family="Liberation Sans,sans-serif" font-size="3.2" font-weight="normal" fill="#5e5e5e" text-anchor="middle" textLength="6" lengthAdjust="spacingAndGlyphs" >C1152</text>
<text x="1032.4" y="692.9" font-family="Liberation Sans,sans-serif" font-size="3.2" font-weight="normal" fill="#5e5e5e" text-anchor="middle" textLength="6" lengthAdjust="spacingAndGlyphs" >R2319</text>
<rect x="1117.8" y="399.3" width="1.2" height="5.4" rx="0" fill="#b4b4b4" stroke="none" stroke-width="0" />
<rect x="1120.0" y="399.3" width="1.2" height="5.4" rx="0" fill="#b4b4b4" stroke="none" stroke-width="0" />
<path d="M1117.8 400.9 h3.4 M1117.8 403.1 h3.4" fill="none" stroke="#959595" stroke-width="0.6" />
<rect x="1134.9" y="444.3" width="1.2" height="5.4" rx="0" fill="#b4b4b4" stroke="none" stroke-width="0" />
<rect x="1137.1" y="444.3" width="1.2" height="5.4" rx="0" fill="#b4b4b4" stroke="none" stroke-width="0" />
<path d="M1134.9 445.9 h3.4 M1134.9 448.1 h3.4" fill="none" stroke="#959595" stroke-width="0.6" />
<text x="1127.7" y="410.3" font-family="Liberation Sans,sans-serif" font-size="4.6" font-weight="bold" fill="#2a2a2a" text-anchor="middle" >✕</text>
<text x="1141.8" y="454.9" font-family="Liberation Sans,sans-serif" font-size="3.2" font-weight="normal" fill="#5e5e5e" text-anchor="middle" textLength="6" lengthAdjust="spacingAndGlyphs" >R2716</text>
<text x="1136.0" y="416.0" font-family="Liberation Sans,sans-serif" font-size="3.2" font-weight="normal" fill="#5e5e5e" text-anchor="middle" textLength="6" lengthAdjust="spacingAndGlyphs" >R1329</text>
<rect x="1109.1" y="407.2" width="1.2" height="5.4" rx="0" fill="#b4b4b4" stroke="none" stroke-width="0" />
<rect x="1111.3" y="407.2" width="1.2" height="5.4" rx="0" fill="#b4b4b4" stroke="none" stroke-width="0" />
<path d="M1109.1 408.8 h3.4 M1109.1 411.0 h3.4" fill="none" stroke="#959595" stroke-width="0.6" />
<text x="1129.0" y="444.3" font-family="Liberation Sans,sans-serif" font-size="3.2" font-weight="normal" fill="#5e5e5e" text-anchor="middle" textLength="6" lengthAdjust="spacingAndGlyphs" >C2820</text>
<text x="1128.7" y="456.4" font-family="Liberation Sans,sans-serif" font-size="3.2" font-weight="normal" fill="#5e5e5e" text-anchor="middle" textLength="6" lengthAdjust="spacingAndGlyphs" >R1729</text>
<rect x="1128.0" y="398.3" width="8.4" height="4.8" rx="0" fill="none" stroke="#bdbdbd" stroke-width="0.6" stroke-dasharray="1 0.6"/>
<text x="1132.2" y="401.8" font-family="Liberation Sans,sans-serif" font-size="3.2" font-weight="normal" fill="#4a4a4a" text-anchor="middle" textLength="7" lengthAdjust="spacingAndGlyphs" >R1176</text>
<text x="1127.3" y="450.1" font-family="Liberation Sans,sans-serif" font-size="3.2" font-weight="normal" fill="#5e5e5e" text-anchor="middle" textLength="6" lengthAdjust="spacingAndGlyphs" >R1405</text>
<rect x="1131.5" y="404.6" width="1.2" height="5.4" rx="0" fill="#b4b4b4" stroke="none" stroke-width="0" />
<rect x="1133.7" y="404.6" width="1.2" height="5.4" rx="0" fill="#b4b4b4" stroke="none" stroke-width="0" />
<path d="M1131.5 406.2 h3.4 M1131.5 408.4 h3.4" fill="none" stroke="#959595" stroke-width="0.6" />
<text x="1126.8" y="417.7" font-family="Liberation Sans,sans-serif" font-size="3.2" font-weight="normal" fill="#5e5e5e" text-anchor="middle" textLength="6" lengthAdjust="spacingAndGlyphs" >R2611</text>
<rect x="809.5" y="469.6" width="50.0" height="51.4" rx="0" fill="none" stroke="#c0c0c0" stroke-width="0.8" />
<text x="834.5" y="495.7" font-family="Liberation Sans,sans-serif" font-size="1" font-weight="normal" fill="#111" text-anchor="middle" ></text>
<text x="833.6" y="502.0" font-family="Liberation Sans,sans-serif" font-size="16.9" font-weight="normal" fill="#000" text-anchor="middle" textLength="42" lengthAdjust="spacingAndGlyphs" >U1101</text>
<path d="M809.5 469.6 l3 0 M809.5 518 l0 3" fill="none" stroke="#555" stroke-width="1" />
<rect x="712.4" y="485.7" width="18.1" height="14.0" rx="0" fill="none" stroke="#bdbdbd" stroke-width="0.8" />
<text x="721.5" y="494.8" font-family="Liberation Sans,sans-serif" font-size="5.8" font-weight="normal" fill="#333" text-anchor="middle" textLength="14" lengthAdjust="spacingAndGlyphs" >L1002</text>
<rect x="710.3" y="506.6" width="27.2" height="17.9" rx="0" fill="none" stroke="#7a7a7a" stroke-width="1.1" />
<text x="723.9" y="518.9" font-family="Liberation Sans,sans-serif" font-size="9.2" font-weight="normal" fill="#000" text-anchor="middle" textLength="23" lengthAdjust="spacingAndGlyphs" >U1002</text>
<path d="M712 508.4 h24 M712 522.6 h24" fill="none" stroke="#b5b5b5" stroke-width="1.4" stroke-dasharray="2 1.3"/>
<circle cx="735.0" cy="504.3" r="1.4" fill="#bbb" stroke="#666" stroke-width="0.8"/>
<rect x="743.8" y="505.5" width="14.7" height="7.8" rx="0" fill="none" stroke="#bdbdbd" stroke-width="0.8" stroke-dasharray="1 0.7"/>
<text x="751.1" y="511.3" font-family="Liberation Sans,sans-serif" font-size="5.4" font-weight="normal" fill="#333" text-anchor="middle" textLength="13" lengthAdjust="spacingAndGlyphs" >C1203</text>
<rect x="743.8" y="517.1" width="14.7" height="7.7" rx="0" fill="none" stroke="#bdbdbd" stroke-width="0.8" stroke-dasharray="1 0.7"/>
<text x="751.1" y="522.9" font-family="Liberation Sans,sans-serif" font-size="5.4" font-weight="normal" fill="#333" text-anchor="middle" textLength="13" lengthAdjust="spacingAndGlyphs" >C1202</text>
<rect x="747.3" y="485.4" width="8.1" height="15.4" rx="0" fill="none" stroke="#bdbdbd" stroke-width="0.8" stroke-dasharray="1 0.7"/>
<text font-family="Liberation Sans,sans-serif" font-size="5.2" font-weight="normal" fill="#333" text-anchor="middle" textLength="13" lengthAdjust="spacingAndGlyphs" transform="translate(751.3 493.1) rotate(-90) translate(0 1.9)">C1206</text>
<rect x="759.5" y="485.4" width="7.4" height="15.4" rx="0" fill="none" stroke="#bdbdbd" stroke-width="0.8" stroke-dasharray="1 0.7"/>
<text font-family="Liberation Sans,sans-serif" font-size="5.2" font-weight="normal" fill="#333" text-anchor="middle" textLength="13" lengthAdjust="spacingAndGlyphs" transform="translate(763.2 493.1) rotate(-90) translate(0 1.9)">C1207</text>
<rect x="770.4" y="483.2" width="21.9" height="19.2" rx="0" fill="none" stroke="#bdbdbd" stroke-width="0.8" />
<text x="781.3" y="495.6" font-family="Liberation Sans,sans-serif" font-size="7.8" font-weight="normal" fill="#222" text-anchor="middle" textLength="19" lengthAdjust="spacingAndGlyphs" >L1203</text>
<path d="M777.5 483.2 v19.2 M785 483.2 v19.2" fill="none" stroke="#d0d0d0" stroke-width="0.6" />
<rect x="776.3" y="515.9" width="17.5" height="13.7" rx="0" fill="none" stroke="#bdbdbd" stroke-width="0.8" />
<text x="785.0" y="524.9" font-family="Liberation Sans,sans-serif" font-size="6" font-weight="normal" fill="#222" text-anchor="middle" textLength="14" lengthAdjust="spacingAndGlyphs" >L1206</text>
<rect x="776.3" y="532.4" width="17.5" height="14.2" rx="0" fill="none" stroke="#bdbdbd" stroke-width="0.8" />
<text x="785.0" y="541.7" font-family="Liberation Sans,sans-serif" font-size="6" font-weight="normal" fill="#222" text-anchor="middle" textLength="14" lengthAdjust="spacingAndGlyphs" >L1205</text>
<path d="M782 515.9 v13.7 M788 515.9 v13.7 M782 532.4 v14.2 M788 532.4 v14.2" fill="none" stroke="#d4d4d4" stroke-width="0.6" />
<rect x="823.8" y="533.5" width="14.0" height="18.1" rx="0" fill="none" stroke="#bdbdbd" stroke-width="0.8" stroke-dasharray="1 0.7"/>
<text font-family="Liberation Sans,sans-serif" font-size="5.8" font-weight="normal" fill="#222" text-anchor="middle" textLength="14" lengthAdjust="spacingAndGlyphs" transform="translate(830.8 542.5) rotate(-90) translate(0 2.1)">L1202</text>
<rect x="842.3" y="533.5" width="14.4" height="18.1" rx="0" fill="none" stroke="#bdbdbd" stroke-width="0.8" stroke-dasharray="1 0.7"/>
<text font-family="Liberation Sans,sans-serif" font-size="5.8" font-weight="normal" fill="#222" text-anchor="middle" textLength="14" lengthAdjust="spacingAndGlyphs" transform="translate(849.5 542.5) rotate(-90) translate(0 2.1)">L1201</text>
<rect x="870.2" y="521.2" width="22.4" height="18.8" rx="0" fill="none" stroke="#bdbdbd" stroke-width="0.8" />
<text x="881.4" y="533.3" font-family="Liberation Sans,sans-serif" font-size="7.4" font-weight="normal" fill="#111" text-anchor="middle" textLength="17.5" lengthAdjust="spacingAndGlyphs" >L1204</text>
<path d="M877.5 521.2 v18.8 M885 521.2 v18.8" fill="none" stroke="#d4d4d4" stroke-width="0.6" />
<rect x="885.9" y="466.0" width="17.5" height="22.3" rx="0" fill="none" stroke="#bdbdbd" stroke-width="0.8" stroke-dasharray="1 0.7"/>
<text font-family="Liberation Sans,sans-serif" font-size="6.8" font-weight="normal" fill="#111" text-anchor="middle" textLength="17" lengthAdjust="spacingAndGlyphs" transform="translate(894.6 477.1) rotate(-90) translate(0 2.4)">G1101</text>
<rect x="868.5" y="465.0" width="11.5" height="5.4" rx="0" fill="#d5f5dc" stroke="none" stroke-width="0" />
<text x="874.3" y="469.3" font-family="Liberation Sans,sans-serif" font-size="3.6" font-weight="normal" fill="#7fd890" text-anchor="middle" >C1108</text>
<circle cx="889.8" cy="460.0" r="1.7" fill="none" stroke="#555" stroke-width="0.8"/>
<circle cx="905.7" cy="488.7" r="1.7" fill="none" stroke="#555" stroke-width="0.8"/>
<rect x="890.4" y="510.3" width="14.4" height="7.1" rx="0" fill="none" stroke="#bdbdbd" stroke-width="0.8" stroke-dasharray="1 0.7"/>
<text x="897.6" y="515.8" font-family="Liberation Sans,sans-serif" font-size="5.4" font-weight="normal" fill="#333" text-anchor="middle" textLength="12.5" lengthAdjust="spacingAndGlyphs" >C1209</text>
<rect x="895.9" y="522.9" width="7.3" height="14.7" rx="0" fill="none" stroke="#bdbdbd" stroke-width="0.8" stroke-dasharray="1 0.7"/>
<text font-family="Liberation Sans,sans-serif" font-size="5" font-weight="normal" fill="#333" text-anchor="middle" textLength="12.5" lengthAdjust="spacingAndGlyphs" transform="translate(899.5 530.2) rotate(-90) translate(0 1.8)">C1210</text>
<rect x="873.9" y="498.8" width="10.0" height="5.2" rx="0" fill="none" stroke="#bdbdbd" stroke-width="0.8" stroke-dasharray="1 0.7"/>
<text x="878.9" y="502.8" font-family="Liberation Sans,sans-serif" font-size="3.8" font-weight="normal" fill="#333" text-anchor="middle" textLength="8.5" lengthAdjust="spacingAndGlyphs" >C1103</text>
<rect x="873.9" y="506.6" width="10.0" height="5.3" rx="0" fill="none" stroke="#bdbdbd" stroke-width="0.8" stroke-dasharray="1 0.7"/>
<text x="878.9" y="510.6" font-family="Liberation Sans,sans-serif" font-size="3.8" font-weight="normal" fill="#333" text-anchor="middle" textLength="8.5" lengthAdjust="spacingAndGlyphs" >C1109</text>
<rect x="894.3" y="493.5" width="10.0" height="5.5" rx="0" fill="none" stroke="#bdbdbd" stroke-width="0.8" stroke-dasharray="1 0.7"/>
<text x="899.3" y="497.6" font-family="Liberation Sans,sans-serif" font-size="3.8" font-weight="normal" fill="#444" text-anchor="middle" textLength="8.5" lengthAdjust="spacingAndGlyphs" >C1313</text>
<rect x="894.3" y="501.4" width="10.0" height="5.6" rx="0" fill="none" stroke="#bdbdbd" stroke-width="0.8" stroke-dasharray="1 0.7"/>
<text x="899.3" y="505.6" font-family="Liberation Sans,sans-serif" font-size="3.8" font-weight="normal" fill="#444" text-anchor="middle" textLength="8.5" lengthAdjust="spacingAndGlyphs" >C1301</text>
<rect x="874.2" y="483.6" width="6.0" height="9.9" rx="0" fill="none" stroke="#bdbdbd" stroke-width="0.8" stroke-dasharray="1 0.7"/>
<text font-family="Liberation Sans,sans-serif" font-size="3.6" font-weight="normal" fill="#333" text-anchor="middle" textLength="8.5" lengthAdjust="spacingAndGlyphs" transform="translate(877.2 488.6) rotate(-90) translate(0 1.3)">L1101</text>
<text font-family="Liberation Sans,sans-serif" font-size="4.6" font-weight="normal" fill="#444" text-anchor="middle" textLength="8.5" lengthAdjust="spacingAndGlyphs" transform="translate(866.0 523.5) rotate(-90) translate(0 1.7)">C508</text>
<text x="832.5" y="528.6" font-family="Liberation Sans,sans-serif" font-size="4.4" font-weight="normal" fill="#333" text-anchor="middle" textLength="9.5" lengthAdjust="spacingAndGlyphs" >C1204</text>
<text x="850.3" y="528.6" font-family="Liberation Sans,sans-serif" font-size="4.4" font-weight="normal" fill="#333" text-anchor="middle" textLength="9.5" lengthAdjust="spacingAndGlyphs" >C1201</text>
<text x="808.4" y="528.2" font-family="Liberation Sans,sans-serif" font-size="4.2" font-weight="normal" fill="#444" text-anchor="middle" textLength="9" lengthAdjust="spacingAndGlyphs" >C1211</text>
<rect x="830.0" y="460.5" width="1.2" height="4.8" rx="0" fill="#c4c4c4" stroke="none" stroke-width="0" />
<rect x="832.2" y="460.5" width="1.2" height="4.8" rx="0" fill="#c4c4c4" stroke="none" stroke-width="0" />
<path d="M830.0 462 h3.4 M830.0 464 h3.4" fill="none" stroke="#a4a4a4" stroke-width="0.6" />
<rect x="835.2" y="460.5" width="1.2" height="4.8" rx="0" fill="#c4c4c4" stroke="none" stroke-width="0" />
<rect x="837.4" y="460.5" width="1.2" height="4.8" rx="0" fill="#c4c4c4" stroke="none" stroke-width="0" />
<path d="M835.2 462 h3.4 M835.2 464 h3.4" fill="none" stroke="#a4a4a4" stroke-width="0.6" />
<rect x="840.4" y="460.5" width="1.2" height="4.8" rx="0" fill="#c4c4c4" stroke="none" stroke-width="0" />
<rect x="842.6" y="460.5" width="1.2" height="4.8" rx="0" fill="#c4c4c4" stroke="none" stroke-width="0" />
<path d="M840.4 462 h3.4 M840.4 464 h3.4" fill="none" stroke="#a4a4a4" stroke-width="0.6" />
<rect x="845.6" y="460.5" width="1.2" height="4.8" rx="0" fill="#c4c4c4" stroke="none" stroke-width="0" />
<rect x="847.8" y="460.5" width="1.2" height="4.8" rx="0" fill="#c4c4c4" stroke="none" stroke-width="0" />
<path d="M845.6 462 h3.4 M845.6 464 h3.4" fill="none" stroke="#a4a4a4" stroke-width="0.6" />
<rect x="850.8" y="460.5" width="1.2" height="4.8" rx="0" fill="#c4c4c4" stroke="none" stroke-width="0" />
<rect x="853.0" y="460.5" width="1.2" height="4.8" rx="0" fill="#c4c4c4" stroke="none" stroke-width="0" />
<path d="M850.8 462 h3.4 M850.8 464 h3.4" fill="none" stroke="#a4a4a4" stroke-width="0.6" />
<rect x="856.0" y="460.5" width="1.2" height="4.8" rx="0" fill="#c4c4c4" stroke="none" stroke-width="0" />
<rect x="858.2" y="460.5" width="1.2" height="4.8" rx="0" fill="#c4c4c4" stroke="none" stroke-width="0" />
<path d="M856.0 462 h3.4 M856.0 464 h3.4" fill="none" stroke="#a4a4a4" stroke-width="0.6" />
<text font-family="Liberation Sans,sans-serif" font-size="9" font-weight="normal" fill="#111" text-anchor="middle" textLength="15" lengthAdjust="spacingAndGlyphs" transform="translate(755.8 556.0) rotate(-90) translate(0 3.2)">C633</text>
<text font-family="Liberation Sans,sans-serif" font-size="9" font-weight="normal" fill="#111" text-anchor="middle" textLength="15" lengthAdjust="spacingAndGlyphs" transform="translate(766.8 556.0) rotate(-90) translate(0 3.2)">C635</text>
<text font-family="Liberation Sans,sans-serif" font-size="8" font-weight="normal" fill="#111" text-anchor="middle" textLength="14.5" lengthAdjust="spacingAndGlyphs" transform="translate(743.6 568.3) rotate(-90) translate(0 2.9)">C634</text>
<text font-family="Liberation Sans,sans-serif" font-size="8" font-weight="normal" fill="#111" text-anchor="middle" textLength="14.5" lengthAdjust="spacingAndGlyphs" transform="translate(753.4 629.0) rotate(-90) translate(0 2.9)">C636</text>
<rect x="844.1" y="570.4" width="60.0" height="7.0" rx="0" fill="none" stroke="#5e5e5e" stroke-width="1.0" />
<rect x="870.7" y="615.5" width="19.1" height="12.8" rx="0" fill="none" stroke="#333" stroke-width="1.1" />
<text x="880.2" y="625.0" font-family="Liberation Sans,sans-serif" font-size="8.6" font-weight="bold" fill="#000" text-anchor="middle" textLength="16.5" lengthAdjust="spacingAndGlyphs" >R913</text>
<rect x="875.3" y="631.0" width="14.9" height="13.3" rx="0" fill="none" stroke="#bdbdbd" stroke-width="0.8" stroke-dasharray="1 0.7"/>
<text x="882.8" y="639.8" font-family="Liberation Sans,sans-serif" font-size="6" font-weight="normal" fill="#222" text-anchor="middle" textLength="12.5" lengthAdjust="spacingAndGlyphs" >U902</text>
<circle cx="870.7" cy="608.5" r="4.0" fill="none" stroke="#777" stroke-width="0.9"/>
<rect x="860.2" y="633.2" width="4.2" height="19.3" rx="2.1" fill="none" stroke="#666" stroke-width="0.9" />
<rect x="773.5" y="573.0" width="6.3" height="14.0" rx="0" fill="none" stroke="#bdbdbd" stroke-width="0.8" />
<text font-family="Liberation Sans,sans-serif" font-size="4.6" font-weight="normal" fill="#333" text-anchor="middle" textLength="9" lengthAdjust="spacingAndGlyphs" transform="translate(776.6 580.0) rotate(-90) translate(0 1.7)">L101</text>
<rect x="786.5" y="558.0" width="10.0" height="6.2" rx="0" fill="none" stroke="#c8c8c8" stroke-width="0.6" />
<text x="791.5" y="562.7" font-family="Liberation Sans,sans-serif" font-size="4.4" font-weight="normal" fill="#444" text-anchor="middle" textLength="8" lengthAdjust="spacingAndGlyphs" >C148</text>
<rect x="786.5" y="566.0" width="10.0" height="6.2" rx="0" fill="none" stroke="#c8c8c8" stroke-width="0.6" />
<text x="791.5" y="570.7" font-family="Liberation Sans,sans-serif" font-size="4.4" font-weight="normal" fill="#444" text-anchor="middle" textLength="8" lengthAdjust="spacingAndGlyphs" >C146</text>
<rect x="815.5" y="555.5" width="10.0" height="6.2" rx="0" fill="none" stroke="#c8c8c8" stroke-width="0.6" />
<text x="820.5" y="560.2" font-family="Liberation Sans,sans-serif" font-size="4.4" font-weight="normal" fill="#444" text-anchor="middle" textLength="8" lengthAdjust="spacingAndGlyphs" >C125</text>
<rect x="815.5" y="563.5" width="10.0" height="6.2" rx="0" fill="none" stroke="#c8c8c8" stroke-width="0.6" />
<text x="820.5" y="568.2" font-family="Liberation Sans,sans-serif" font-size="4.4" font-weight="normal" fill="#444" text-anchor="middle" textLength="8" lengthAdjust="spacingAndGlyphs" >C121</text>
<rect x="819.0" y="572.0" width="10.0" height="6.2" rx="0" fill="none" stroke="#c8c8c8" stroke-width="0.6" />
<text x="824.0" y="576.7" font-family="Liberation Sans,sans-serif" font-size="4.4" font-weight="normal" fill="#444" text-anchor="middle" textLength="8" lengthAdjust="spacingAndGlyphs" >C126</text>
<rect x="784.5" y="604.5" width="10.0" height="6.2" rx="0" fill="none" stroke="#c8c8c8" stroke-width="0.6" />
<text x="789.5" y="609.2" font-family="Liberation Sans,sans-serif" font-size="4.4" font-weight="normal" fill="#444" text-anchor="middle" textLength="8" lengthAdjust="spacingAndGlyphs" >C154</text>
<rect x="785.5" y="618.0" width="10.0" height="6.2" rx="0" fill="none" stroke="#c8c8c8" stroke-width="0.6" />
<text x="790.5" y="622.7" font-family="Liberation Sans,sans-serif" font-size="4.4" font-weight="normal" fill="#444" text-anchor="middle" textLength="8" lengthAdjust="spacingAndGlyphs" >C156</text>
<rect x="852.0" y="560.5" width="10.0" height="6.0" rx="0" fill="none" stroke="#bdbdbd" stroke-width="0.8" stroke-dasharray="1 0.7"/>
<text x="857.0" y="564.9" font-family="Liberation Sans,sans-serif" font-size="3.8" font-weight="normal" fill="#444" text-anchor="middle" textLength="9" lengthAdjust="spacingAndGlyphs" >C1301</text>
<rect x="824.5" y="578.0" width="5.0" height="11.5" rx="0" fill="none" stroke="#d0d0d0" stroke-width="0.5" />
<text font-family="Liberation Sans,sans-serif" font-size="4.2" font-weight="normal" fill="#555" text-anchor="middle" textLength="8" lengthAdjust="spacingAndGlyphs" transform="translate(827.0 583.8) rotate(-90) translate(0 1.5)">C136</text>
<rect x="735.5" y="359.5" width="10.0" height="5.3" rx="0" fill="none" stroke="#bcbcbc" stroke-width="0.6" stroke-dasharray="1 0.7"/>
<text x="740.5" y="363.4" font-family="Liberation Sans,sans-serif" font-size="3.6" font-weight="normal" fill="#333" text-anchor="middle" textLength="8.5" lengthAdjust="spacingAndGlyphs" >C2125</text>
<rect x="735.5" y="367.5" width="10.0" height="5.1" rx="0" fill="none" stroke="#bcbcbc" stroke-width="0.6" stroke-dasharray="1 0.7"/>
<text x="740.5" y="371.3" font-family="Liberation Sans,sans-serif" font-size="3.6" font-weight="normal" fill="#333" text-anchor="middle" textLength="8.5" lengthAdjust="spacingAndGlyphs" >C2126</text>
<rect x="733.5" y="385.0" width="9.5" height="8.5" rx="0" fill="none" stroke="#bcbcbc" stroke-width="0.6" stroke-dasharray="1 0.7"/>
<text x="738.2" y="390.5" font-family="Liberation Sans,sans-serif" font-size="3.6" font-weight="normal" fill="#333" text-anchor="middle" textLength="8.0" lengthAdjust="spacingAndGlyphs" >U2106</text>
<rect x="737.0" y="403.5" width="9.0" height="8.3" rx="0" fill="none" stroke="#bcbcbc" stroke-width="0.6" stroke-dasharray="1 0.7"/>
<text x="741.5" y="408.9" font-family="Liberation Sans,sans-serif" font-size="3.6" font-weight="normal" fill="#333" text-anchor="middle" textLength="7.5" lengthAdjust="spacingAndGlyphs" >R2104</text>
<rect x="738.5" y="414.5" width="9.5" height="6.0" rx="0" fill="none" stroke="#bcbcbc" stroke-width="0.6" stroke-dasharray="1 0.7"/>
<text x="743.2" y="418.8" font-family="Liberation Sans,sans-serif" font-size="3.6" font-weight="normal" fill="#333" text-anchor="middle" textLength="8.0" lengthAdjust="spacingAndGlyphs" >C2135</text>
<rect x="752.0" y="421.8" width="10.5" height="5.2" rx="0" fill="none" stroke="#bcbcbc" stroke-width="0.6" stroke-dasharray="1 0.7"/>
<text x="757.2" y="425.7" font-family="Liberation Sans,sans-serif" font-size="3.6" font-weight="normal" fill="#333" text-anchor="middle" textLength="9.0" lengthAdjust="spacingAndGlyphs" >D1608</text>
<rect x="752.0" y="429.5" width="10.5" height="5.5" rx="0" fill="none" stroke="#bcbcbc" stroke-width="0.6" stroke-dasharray="1 0.7"/>
<text x="757.2" y="433.5" font-family="Liberation Sans,sans-serif" font-size="3.6" font-weight="normal" fill="#333" text-anchor="middle" textLength="9.0" lengthAdjust="spacingAndGlyphs" >D1609</text>
<rect x="712.0" y="427.5" width="11.0" height="6.0" rx="0" fill="none" stroke="#bcbcbc" stroke-width="0.6" stroke-dasharray="1 0.7"/>
<text x="717.5" y="431.8" font-family="Liberation Sans,sans-serif" font-size="3.6" font-weight="normal" fill="#333" text-anchor="middle" textLength="9.5" lengthAdjust="spacingAndGlyphs" >C2122</text>
<rect x="800.0" y="430.5" width="9.0" height="5.5" rx="0" fill="none" stroke="#bcbcbc" stroke-width="0.6" stroke-dasharray="1 0.7"/>
<text x="804.5" y="434.5" font-family="Liberation Sans,sans-serif" font-size="3.6" font-weight="normal" fill="#333" text-anchor="middle" textLength="7.5" lengthAdjust="spacingAndGlyphs" >J1407</text>
<rect x="798.5" y="401.0" width="10.5" height="12.5" rx="0" fill="none" stroke="#bcbcbc" stroke-width="0.6" stroke-dasharray="1 0.7"/>
<text x="803.8" y="408.5" font-family="Liberation Sans,sans-serif" font-size="3.6" font-weight="normal" fill="#333" text-anchor="middle" textLength="9.0" lengthAdjust="spacingAndGlyphs" >U1601</text>
<text font-family="Liberation Sans,sans-serif" font-size="3.6" font-weight="bold" fill="#333" text-anchor="middle" textLength="10" lengthAdjust="spacingAndGlyphs" transform="translate(728.0 382.0) rotate(-90) translate(0 1.3)">R2128</text>
<text font-family="Liberation Sans,sans-serif" font-size="3.6" font-weight="bold" fill="#333" text-anchor="middle" textLength="10" lengthAdjust="spacingAndGlyphs" transform="translate(726.5 408.0) rotate(-90) translate(0 1.3)">R2118</text>
<text font-family="Liberation Sans,sans-serif" font-size="3.6" font-weight="bold" fill="#333" text-anchor="middle" textLength="10" lengthAdjust="spacingAndGlyphs" transform="translate(780.5 408.0) rotate(-90) translate(0 1.3)">R2120</text>
<text font-family="Liberation Sans,sans-serif" font-size="3.6" font-weight="bold" fill="#333" text-anchor="middle" textLength="10" lengthAdjust="spacingAndGlyphs" transform="translate(816.5 409.0) rotate(-90) translate(0 1.3)">R1600</text>
<text font-family="Liberation Sans,sans-serif" font-size="3.6" font-weight="bold" fill="#333" text-anchor="middle" textLength="10" lengthAdjust="spacingAndGlyphs" transform="translate(815.5 429.0) rotate(-90) translate(0 1.3)">C1612</text>
<text font-family="Liberation Sans,sans-serif" font-size="3.6" font-weight="bold" fill="#333" text-anchor="middle" textLength="10" lengthAdjust="spacingAndGlyphs" transform="translate(764.0 407.0) rotate(-90) translate(0 1.3)">C2138</text>
<text font-family="Liberation Sans,sans-serif" font-size="3.6" font-weight="bold" fill="#333" text-anchor="middle" textLength="10" lengthAdjust="spacingAndGlyphs" transform="translate(772.0 407.0) rotate(-90) translate(0 1.3)">C2137</text>
<text x="791.0" y="428.5" font-family="Liberation Sans,sans-serif" font-size="3.8" font-weight="bold" fill="#222" text-anchor="middle" textLength="9.5" lengthAdjust="spacingAndGlyphs" >R1660</text>
<text x="791.0" y="436.2" font-family="Liberation Sans,sans-serif" font-size="3.8" font-weight="bold" fill="#222" text-anchor="middle" textLength="9.5" lengthAdjust="spacingAndGlyphs" >R1662</text>
<text x="738.0" y="381.2" font-family="Liberation Sans,sans-serif" font-size="4.2" font-weight="bold" fill="#222" text-anchor="middle" >✕</text>
<text x="732.0" y="420.0" font-family="Liberation Sans,sans-serif" font-size="4.2" font-weight="bold" fill="#222" text-anchor="middle" >✕</text>
<text x="769.0" y="433.0" font-family="Liberation Sans,sans-serif" font-size="4.2" font-weight="bold" fill="#222" text-anchor="middle" >✕</text>
<text x="787.0" y="406.0" font-family="Liberation Sans,sans-serif" font-size="4.2" font-weight="bold" fill="#222" text-anchor="middle" >✕</text>
<circle cx="810.5" cy="414.0" r="1.2" fill="#888" stroke="#555" stroke-width="0.7"/>
<circle cx="799.5" cy="436.5" r="1.3" fill="none" stroke="#444" stroke-width="0.8"/>
<rect x="713.0" y="369.0" width="4.8" height="6.2" rx="0" fill="none" stroke="#c4c4c4" stroke-width="0.5" />
<path d="M713 371 h4.8 M713 373.2 h4.8" fill="none" stroke="#b5b5b5" stroke-width="0.5" />
<rect x="713.0" y="380.0" width="4.8" height="6.2" rx="0" fill="none" stroke="#c4c4c4" stroke-width="0.5" />
<path d="M713 382 h4.8 M713 384.2 h4.8" fill="none" stroke="#b5b5b5" stroke-width="0.5" />
<rect x="713.0" y="391.0" width="4.8" height="6.2" rx="0" fill="none" stroke="#c4c4c4" stroke-width="0.5" />
<path d="M713 393 h4.8 M713 395.2 h4.8" fill="none" stroke="#b5b5b5" stroke-width="0.5" />
<rect x="713.0" y="400.0" width="4.8" height="6.2" rx="0" fill="none" stroke="#c4c4c4" stroke-width="0.5" />
<path d="M713 402 h4.8 M713 404.2 h4.8" fill="none" stroke="#b5b5b5" stroke-width="0.5" />
<rect x="713.0" y="411.0" width="4.8" height="6.2" rx="0" fill="none" stroke="#c4c4c4" stroke-width="0.5" />
<path d="M713 413 h4.8 M713 415.2 h4.8" fill="none" stroke="#b5b5b5" stroke-width="0.5" />
<rect x="713.0" y="420.0" width="4.8" height="6.2" rx="0" fill="none" stroke="#c4c4c4" stroke-width="0.5" />
<path d="M713 422 h4.8 M713 424.2 h4.8" fill="none" stroke="#b5b5b5" stroke-width="0.5" />
<rect x="844.5" y="385.8" width="17.0" height="17.0" rx="0" fill="none" stroke="#c4c4c4" stroke-width="0.6" stroke-dasharray="1.2 1"/>
<circle cx="853.0" cy="394.3" r="5.2" fill="#e9e9e9" stroke="#777" stroke-width="0.9"/>
<circle cx="853.0" cy="394.3" r="2.6" fill="none" stroke="#999" stroke-width="0.6"/>
<text font-family="Liberation Sans,sans-serif" font-size="7.4" font-weight="bold" fill="#111" text-anchor="middle" textLength="16" lengthAdjust="spacingAndGlyphs" transform="translate(853.5 394.3) rotate(90) translate(0 2.7)">J3300</text>
<circle cx="844.0" cy="405.5" r="1.2" fill="none" stroke="#666" stroke-width="0.7"/>
<text x="857.0" y="367.5" font-family="Liberation Sans,sans-serif" font-size="2.6" font-weight="normal" fill="#999" text-anchor="middle" textLength="4" lengthAdjust="spacingAndGlyphs" >C33</text>
<text x="857.0" y="372.0" font-family="Liberation Sans,sans-serif" font-size="2.6" font-weight="normal" fill="#999" text-anchor="middle" textLength="4" lengthAdjust="spacingAndGlyphs" >C33</text>
<text x="851.0" y="372.5" font-family="Liberation Sans,sans-serif" font-size="2.6" font-weight="normal" fill="#999" text-anchor="middle" textLength="4" lengthAdjust="spacingAndGlyphs" >C33</text>
<text x="864.5" y="369.5" font-family="Liberation Sans,sans-serif" font-size="2.6" font-weight="normal" fill="#999" text-anchor="middle" textLength="4" lengthAdjust="spacingAndGlyphs" >C33</text>
<rect x="603.5" y="616.3" width="18.4" height="22.3" rx="0" fill="none" stroke="#b5b5b5" stroke-width="0.8" />
<text font-family="Liberation Sans,sans-serif" font-size="10.4" font-weight="bold" fill="#000" text-anchor="middle" textLength="21" lengthAdjust="spacingAndGlyphs" transform="translate(612.7 627.5) rotate(-90) translate(0 3.7)">L901</text>
<path d="M603.5 622 h18.4 M603.5 632.5 h18.4" fill="none" stroke="#c4c4c4" stroke-width="0.6" />
<rect x="604.5" y="606.9" width="13.9" height="7.0" rx="0" fill="none" stroke="#c0c0c0" stroke-width="0.8" />
<text x="611.5" y="612.3" font-family="Liberation Sans,sans-serif" font-size="5.2" font-weight="normal" fill="#333" text-anchor="middle" textLength="11" lengthAdjust="spacingAndGlyphs" >C905</text>
<rect x="603.0" y="592.2" width="5.6" height="11.2" rx="0" fill="none" stroke="#bdbdbd" stroke-width="0.8" stroke-dasharray="1 0.7"/>
<text font-family="Liberation Sans,sans-serif" font-size="4.2" font-weight="normal" fill="#333" text-anchor="middle" textLength="9" lengthAdjust="spacingAndGlyphs" transform="translate(605.8 597.8) rotate(-90) translate(0 1.5)">C908</text>
<rect x="676.7" y="591.5" width="10.2" height="5.6" rx="0" fill="none" stroke="#bdbdbd" stroke-width="0.8" stroke-dasharray="1 0.7"/>
<text x="681.8" y="595.8" font-family="Liberation Sans,sans-serif" font-size="4.2" font-weight="normal" fill="#333" text-anchor="middle" textLength="8.5" lengthAdjust="spacingAndGlyphs" >C903</text>
<rect x="625.0" y="617.7" width="7.0" height="13.3" rx="0" fill="none" stroke="#bdbdbd" stroke-width="0.8" stroke-dasharray="1 0.7"/>
<text font-family="Liberation Sans,sans-serif" font-size="4.4" font-weight="normal" fill="#333" text-anchor="middle" textLength="10" lengthAdjust="spacingAndGlyphs" transform="translate(628.5 624.4) rotate(-90) translate(0 1.6)">C904</text>
<rect x="650.0" y="620.5" width="5.5" height="11.0" rx="0" fill="none" stroke="#bdbdbd" stroke-width="0.8" stroke-dasharray="1 0.7"/>
<text font-family="Liberation Sans,sans-serif" font-size="3.8" font-weight="normal" fill="#444" text-anchor="middle" textLength="8" lengthAdjust="spacingAndGlyphs" transform="translate(652.8 626.0) rotate(-90) translate(0 1.4)">C906</text>
<text x="666.0" y="626.0" font-family="Liberation Sans,sans-serif" font-size="5" font-weight="normal" fill="#333" text-anchor="middle" textLength="11" lengthAdjust="spacingAndGlyphs" >D904</text>
<rect x="625.4" y="639.3" width="35.4" height="35.3" rx="0" fill="none" stroke="#cfcfcf" stroke-width="0.6" stroke-dasharray="1.2 0.8"/>
<path d="M635 645.6 L655.5 645.6 L655.5 670 L631.7 670 L631.7 649 Z" fill="none" stroke="#c0c0c0" stroke-width="0.8" />
<rect x="631.0" y="640.6" width="2.0" height="3.2" rx="0" fill="none" stroke="#cacaca" stroke-width="0.5" />
<rect x="628.0" y="670.8" width="2.0" height="3.2" rx="0" fill="none" stroke="#cacaca" stroke-width="0.5" />
<rect x="634.6" y="640.6" width="2.0" height="3.2" rx="0" fill="none" stroke="#cacaca" stroke-width="0.5" />
<rect x="631.6" y="670.8" width="2.0" height="3.2" rx="0" fill="none" stroke="#cacaca" stroke-width="0.5" />
<rect x="638.2" y="640.6" width="2.0" height="3.2" rx="0" fill="none" stroke="#cacaca" stroke-width="0.5" />
<rect x="635.2" y="670.8" width="2.0" height="3.2" rx="0" fill="none" stroke="#cacaca" stroke-width="0.5" />
<rect x="641.8" y="640.6" width="2.0" height="3.2" rx="0" fill="none" stroke="#cacaca" stroke-width="0.5" />
<rect x="638.8" y="670.8" width="2.0" height="3.2" rx="0" fill="none" stroke="#cacaca" stroke-width="0.5" />
<rect x="645.4" y="640.6" width="2.0" height="3.2" rx="0" fill="none" stroke="#cacaca" stroke-width="0.5" />
<rect x="642.4" y="670.8" width="2.0" height="3.2" rx="0" fill="none" stroke="#cacaca" stroke-width="0.5" />
<rect x="649.0" y="640.6" width="2.0" height="3.2" rx="0" fill="none" stroke="#cacaca" stroke-width="0.5" />
<rect x="646.0" y="670.8" width="2.0" height="3.2" rx="0" fill="none" stroke="#cacaca" stroke-width="0.5" />
<rect x="652.6" y="640.6" width="2.0" height="3.2" rx="0" fill="none" stroke="#cacaca" stroke-width="0.5" />
<rect x="649.6" y="670.8" width="2.0" height="3.2" rx="0" fill="none" stroke="#cacaca" stroke-width="0.5" />
<rect x="626.6" y="645.5" width="3.2" height="2.0" rx="0" fill="none" stroke="#cacaca" stroke-width="0.5" />
<rect x="656.6" y="644.0" width="3.2" height="2.0" rx="0" fill="none" stroke="#cacaca" stroke-width="0.5" />
<rect x="626.6" y="649.4" width="3.2" height="2.0" rx="0" fill="none" stroke="#cacaca" stroke-width="0.5" />
<rect x="656.6" y="647.9" width="3.2" height="2.0" rx="0" fill="none" stroke="#cacaca" stroke-width="0.5" />
<rect x="626.6" y="653.3" width="3.2" height="2.0" rx="0" fill="none" stroke="#cacaca" stroke-width="0.5" />
<rect x="656.6" y="651.8" width="3.2" height="2.0" rx="0" fill="none" stroke="#cacaca" stroke-width="0.5" />
<rect x="626.6" y="657.2" width="3.2" height="2.0" rx="0" fill="none" stroke="#cacaca" stroke-width="0.5" />
<rect x="656.6" y="655.7" width="3.2" height="2.0" rx="0" fill="none" stroke="#cacaca" stroke-width="0.5" />
<rect x="626.6" y="661.1" width="3.2" height="2.0" rx="0" fill="none" stroke="#cacaca" stroke-width="0.5" />
<rect x="656.6" y="659.6" width="3.2" height="2.0" rx="0" fill="none" stroke="#cacaca" stroke-width="0.5" />
<rect x="626.6" y="665.0" width="3.2" height="2.0" rx="0" fill="none" stroke="#cacaca" stroke-width="0.5" />
<rect x="656.6" y="663.5" width="3.2" height="2.0" rx="0" fill="none" stroke="#cacaca" stroke-width="0.5" />
<text font-family="Liberation Sans,sans-serif" font-size="13.6" font-weight="normal" fill="#000" text-anchor="middle" textLength="27" lengthAdjust="spacingAndGlyphs" transform="translate(644.0 658.2) rotate(-90) translate(0 4.9)">U901</text>
<circle cx="625.5" cy="677.3" r="1.7" fill="none" stroke="#999" stroke-width="0.7"/>
<text font-family="Liberation Sans,sans-serif" font-size="10" font-weight="bold" fill="#000" text-anchor="middle" textLength="22" lengthAdjust="spacingAndGlyphs" transform="translate(685.6 612.0) rotate(-90) translate(0 3.6)">D903</text>
<rect x="666.6" y="678.5" width="10.5" height="17.5" rx="0" fill="none" stroke="#bdbdbd" stroke-width="0.8" stroke-dasharray="1 0.7"/>
<text font-family="Liberation Sans,sans-serif" font-size="3.8" font-weight="normal" fill="#333" text-anchor="middle" textLength="11" lengthAdjust="spacingAndGlyphs" transform="translate(671.9 687.2) rotate(-90) translate(0 1.4)">R1624</text>
<rect x="651.5" y="692.4" width="12.3" height="16.8" rx="0" fill="none" stroke="#c8c8c8" stroke-width="0.6" />
<text font-family="Liberation Sans,sans-serif" font-size="3.8" font-weight="normal" fill="#333" text-anchor="middle" textLength="10" lengthAdjust="spacingAndGlyphs" transform="translate(657.6 700.8) rotate(-90) translate(0 1.4)">U1601</text>
<rect x="667.8" y="702.2" width="14.9" height="7.0" rx="0" fill="none" stroke="#c8c8c8" stroke-width="0.6" />
<text x="675.2" y="707.3" font-family="Liberation Sans,sans-serif" font-size="4.4" font-weight="normal" fill="#333" text-anchor="middle" textLength="12" lengthAdjust="spacingAndGlyphs" >C1610</text>
<rect x="642.5" y="697.5" width="6.0" height="9.5" rx="0" fill="none" stroke="#bdbdbd" stroke-width="0.8" stroke-dasharray="1 0.7"/>
<text font-family="Liberation Sans,sans-serif" font-size="3.2" font-weight="normal" fill="#444" text-anchor="middle" textLength="8" lengthAdjust="spacingAndGlyphs" transform="translate(645.5 702.2) rotate(-90) translate(0 1.2)">C1606</text>
<text font-family="Liberation Sans,sans-serif" font-size="3.8" font-weight="normal" fill="#666" text-anchor="middle" textLength="8" lengthAdjust="spacingAndGlyphs" transform="translate(637.5 696.5) rotate(-90) translate(0 1.4)">C406</text>
<rect x="604.5" y="644.5" width="5.3" height="10.0" rx="0" fill="none" stroke="#bdbdbd" stroke-width="0.8" stroke-dasharray="1 0.7"/>
<text font-family="Liberation Sans,sans-serif" font-size="3.4" font-weight="normal" fill="#444" text-anchor="middle" textLength="8" lengthAdjust="spacingAndGlyphs" transform="translate(607.1 649.5) rotate(-90) translate(0 1.2)">C907</text>
<rect x="614.5" y="643.0" width="5.0" height="9.0" rx="0" fill="none" stroke="#bdbdbd" stroke-width="0.8" stroke-dasharray="1 0.7"/>
<text font-family="Liberation Sans,sans-serif" font-size="3.4" font-weight="normal" fill="#444" text-anchor="middle" textLength="7" lengthAdjust="spacingAndGlyphs" transform="translate(617.0 647.5) rotate(-90) translate(0 1.2)">C909</text>
<rect x="604.5" y="658.5" width="10.5" height="5.7" rx="0" fill="none" stroke="#bdbdbd" stroke-width="0.8" stroke-dasharray="1 0.7"/>
<text x="609.8" y="662.7" font-family="Liberation Sans,sans-serif" font-size="3.8" font-weight="normal" fill="#444" text-anchor="middle" textLength="8" lengthAdjust="spacingAndGlyphs" >C906</text>
<text x="614.0" y="671.5" font-family="Liberation Sans,sans-serif" font-size="7" font-weight="bold" fill="#333" text-anchor="middle" >✕</text>
<text x="608.5" y="679.5" font-family="Liberation Sans,sans-serif" font-size="4.2" font-weight="bold" fill="#333" text-anchor="middle" >✕</text>
<text x="662.3" y="632.5" font-family="Liberation Sans,sans-serif" font-size="4.6" font-weight="bold" fill="#222" text-anchor="middle" >✕</text>
<text x="673.0" y="652.0" font-family="Liberation Sans,sans-serif" font-size="4.6" font-weight="bold" fill="#222" text-anchor="middle" >✕</text>
<text x="673.0" y="666.0" font-family="Liberation Sans,sans-serif" font-size="4.6" font-weight="bold" fill="#222" text-anchor="middle" >✕</text>
<text x="666.8" y="656.0" font-family="Liberation Sans,sans-serif" font-size="4.6" font-weight="bold" fill="#222" text-anchor="middle" >✕</text>
<rect x="703.8" y="527.0" width="4.2" height="10.0" rx="0" fill="none" stroke="#bdbdbd" stroke-width="0.8" stroke-dasharray="1 0.7"/>
<text font-family="Liberation Sans,sans-serif" font-size="3.2" font-weight="normal" fill="#444" text-anchor="middle" textLength="8" lengthAdjust="spacingAndGlyphs" transform="translate(705.9 532.0) rotate(-90) translate(0 1.2)">R1002</text>
<rect x="696.0" y="533.0" width="4.0" height="9.0" rx="0" fill="none" stroke="#bdbdbd" stroke-width="0.8" stroke-dasharray="1 0.7"/>
<text font-family="Liberation Sans,sans-serif" font-size="3.2" font-weight="normal" fill="#444" text-anchor="middle" textLength="8" lengthAdjust="spacingAndGlyphs" transform="translate(698.0 537.5) rotate(-90) translate(0 1.2)">L1003</text>
<text x="713.8" y="543.0" font-family="Liberation Sans,sans-serif" font-size="3.6" font-weight="bold" fill="#333" text-anchor="middle" textLength="9" lengthAdjust="spacingAndGlyphs" >R1004</text>
<text x="701.5" y="549.8" font-family="Liberation Sans,sans-serif" font-size="3.6" font-weight="bold" fill="#333" text-anchor="middle" textLength="9" lengthAdjust="spacingAndGlyphs" >R1003</text>
<rect x="702.0" y="685.4" width="39.6" height="24.6" rx="0" fill="none" stroke="#cfcfcf" stroke-width="0.6" />
<rect x="704.2" y="686.0" width="2.1" height="10.5" rx="0" fill="#a0a0a0" stroke="none" stroke-width="0" />
<rect x="704.2" y="700.5" width="2.1" height="9.0" rx="0" fill="#a0a0a0" stroke="none" stroke-width="0" />
<rect x="707.9" y="686.0" width="2.1" height="10.5" rx="0" fill="#a0a0a0" stroke="none" stroke-width="0" />
<rect x="707.9" y="700.5" width="2.1" height="9.0" rx="0" fill="#a0a0a0" stroke="none" stroke-width="0" />
<rect x="711.6" y="686.0" width="2.1" height="10.5" rx="0" fill="#a0a0a0" stroke="none" stroke-width="0" />
<rect x="711.6" y="700.5" width="2.1" height="9.0" rx="0" fill="#a0a0a0" stroke="none" stroke-width="0" />
<rect x="715.3" y="686.0" width="2.1" height="10.5" rx="0" fill="#a0a0a0" stroke="none" stroke-width="0" />
<rect x="715.3" y="700.5" width="2.1" height="9.0" rx="0" fill="#a0a0a0" stroke="none" stroke-width="0" />
<rect x="719.0" y="686.0" width="2.1" height="10.5" rx="0" fill="#a0a0a0" stroke="none" stroke-width="0" />
<rect x="719.0" y="700.5" width="2.1" height="9.0" rx="0" fill="#a0a0a0" stroke="none" stroke-width="0" />
<rect x="722.7" y="686.0" width="2.1" height="10.5" rx="0" fill="#a0a0a0" stroke="none" stroke-width="0" />
<rect x="722.7" y="700.5" width="2.1" height="9.0" rx="0" fill="#a0a0a0" stroke="none" stroke-width="0" />
<rect x="726.4" y="686.0" width="2.1" height="10.5" rx="0" fill="#a0a0a0" stroke="none" stroke-width="0" />
<rect x="726.4" y="700.5" width="2.1" height="9.0" rx="0" fill="#a0a0a0" stroke="none" stroke-width="0" />
<rect x="730.1" y="686.0" width="2.1" height="10.5" rx="0" fill="#a0a0a0" stroke="none" stroke-width="0" />
<rect x="730.1" y="700.5" width="2.1" height="9.0" rx="0" fill="#a0a0a0" stroke="none" stroke-width="0" />
<rect x="733.8" y="686.0" width="2.1" height="10.5" rx="0" fill="#a0a0a0" stroke="none" stroke-width="0" />
<rect x="733.8" y="700.5" width="2.1" height="9.0" rx="0" fill="#a0a0a0" stroke="none" stroke-width="0" />
<rect x="737.5" y="686.0" width="2.1" height="10.5" rx="0" fill="#a0a0a0" stroke="none" stroke-width="0" />
<rect x="737.5" y="700.5" width="2.1" height="9.0" rx="0" fill="#a0a0a0" stroke="none" stroke-width="0" />
<path d="M702 691 h39.6 M702 705.5 h39.6" fill="none" stroke="#9a9a9a" stroke-width="0.9" />
<path d="M702.6 689 v17 M741 689 v17" fill="none" stroke="#9a9a9a" stroke-width="1.2" />
<rect x="704.5" y="693.2" width="34.6" height="10.0" rx="0" fill="#fff" stroke="none" stroke-width="0" opacity="0.55"/>
<text x="721.6" y="702.7" font-family="Liberation Sans,sans-serif" font-size="11.8" font-weight="normal" fill="#000" text-anchor="middle" textLength="33" lengthAdjust="spacingAndGlyphs" >J2201</text>
<path d="M702.3 680.5 H714.2" fill="none" stroke="#666" stroke-width="0.9" />
<text x="708.0" y="719.8" font-family="Liberation Sans,sans-serif" font-size="8.2" font-weight="normal" fill="#565656" text-anchor="start" textLength="17" lengthAdjust="spacingAndGlyphs" >VOL+</text>
<path d="M728 716.5 h8" fill="none" stroke="#666" stroke-width="0.9" />
<text x="761.0" y="719.6" font-family="Liberation Sans,sans-serif" font-size="8.2" font-weight="normal" fill="#565656" text-anchor="start" textLength="15" lengthAdjust="spacingAndGlyphs" >VOL-</text>
<path d="M777.7 714.5 H789.6 M828.3 714.5 H840.3" fill="none" stroke="#666" stroke-width="0.9" />
<text x="804.0" y="720.2" font-family="Liberation Sans,sans-serif" font-size="8.2" font-weight="normal" fill="#565656" text-anchor="start" textLength="13" lengthAdjust="spacingAndGlyphs" >UID</text>
<text x="731.0" y="673.8" font-family="Liberation Sans,sans-serif" font-size="8.2" font-weight="normal" fill="#565656" text-anchor="start" textLength="22" lengthAdjust="spacingAndGlyphs" >U_BOT</text>
<text x="765.5" y="681.9" font-family="Liberation Sans,sans-serif" font-size="8.2" font-weight="normal" fill="#565656" text-anchor="start" textLength="9" lengthAdjust="spacingAndGlyphs" >DM</text>
<text x="805.5" y="672.3" font-family="Liberation Sans,sans-serif" font-size="8.2" font-weight="normal" fill="#565656" text-anchor="start" textLength="10" lengthAdjust="spacingAndGlyphs" >DP</text>
<path d="M804.3 673.5 H816.9" fill="none" stroke="#777" stroke-width="0.8" />
<text x="839.5" y="671.8" font-family="Liberation Sans,sans-serif" font-size="8.2" font-weight="normal" fill="#565656" text-anchor="start" textLength="12.5" lengthAdjust="spacingAndGlyphs" >1P8</text>
<text x="886.0" y="674.5" font-family="Liberation Sans,sans-serif" font-size="8.2" font-weight="normal" fill="#565656" text-anchor="start" textLength="13" lengthAdjust="spacingAndGlyphs" >NTC</text>
<text x="921.2" y="674.5" font-family="Liberation Sans,sans-serif" font-size="8.2" font-weight="normal" fill="#565656" text-anchor="start" textLength="12.5" lengthAdjust="spacingAndGlyphs" >BID</text>
<text font-family="Liberation Sans,sans-serif" font-size="8.2" font-weight="normal" fill="#565656" text-anchor="middle" textLength="12" lengthAdjust="spacingAndGlyphs" transform="translate(854.8 688.0) rotate(90) translate(0 3.0)">GND</text>
<text font-family="Liberation Sans,sans-serif" font-size="8.2" font-weight="normal" fill="#565656" text-anchor="middle" textLength="16" lengthAdjust="spacingAndGlyphs" transform="translate(750.3 686.6) rotate(90) translate(0 3.0)">VCHG</text>
<text font-family="Liberation Sans,sans-serif" font-size="8.2" font-weight="normal" fill="#565656" text-anchor="middle" textLength="11.5" lengthAdjust="spacingAndGlyphs" transform="translate(764.8 703.0) rotate(90) translate(0 3.0)">PWR</text>
<text font-family="Liberation Sans,sans-serif" font-size="8.2" font-weight="normal" fill="#565656" text-anchor="middle" textLength="11" lengthAdjust="spacingAndGlyphs" transform="translate(958.0 705.5) rotate(90) translate(0 3.0)">VBT</text>
<path d="M745.5 686.8 V699.4" fill="none" stroke="#777" stroke-width="0.8" />
<path d="M833.3 674.5 H843.5 V680.4" fill="none" stroke="#666" stroke-width="0.9" />
<circle cx="760.3" cy="672.0" r="4.0" fill="none" stroke="#c6c6c6" stroke-width="0.8"/>
<text x="760.3" y="672.9" font-family="Liberation Sans,sans-serif" font-size="2.4" font-weight="normal" fill="#8a8a8a" text-anchor="middle" >TP1601</text>
<circle cx="778.8" cy="672.0" r="4.0" fill="none" stroke="#c6c6c6" stroke-width="0.8"/>
<text x="778.8" y="672.9" font-family="Liberation Sans,sans-serif" font-size="2.4" font-weight="normal" fill="#8a8a8a" text-anchor="middle" >TP1601</text>
<circle cx="796.3" cy="671.2" r="4.0" fill="none" stroke="#c6c6c6" stroke-width="0.8"/>
<text x="796.3" y="672.1" font-family="Liberation Sans,sans-serif" font-size="2.4" font-weight="normal" fill="#8a8a8a" text-anchor="middle" >TP1601</text>
<circle cx="824.5" cy="670.6" r="4.0" fill="none" stroke="#c6c6c6" stroke-width="0.8"/>
<text x="824.5" y="671.5" font-family="Liberation Sans,sans-serif" font-size="2.4" font-weight="normal" fill="#8a8a8a" text-anchor="middle" >TP1601</text>
<circle cx="760.3" cy="687.4" r="4.0" fill="none" stroke="#c6c6c6" stroke-width="0.8"/>
<text x="760.3" y="688.3" font-family="Liberation Sans,sans-serif" font-size="2.4" font-weight="normal" fill="#8a8a8a" text-anchor="middle" >TP1601</text>
<circle cx="842.7" cy="689.8" r="4.0" fill="none" stroke="#c6c6c6" stroke-width="0.8"/>
<text x="842.7" y="690.7" font-family="Liberation Sans,sans-serif" font-size="2.4" font-weight="normal" fill="#8a8a8a" text-anchor="middle" >TP1601</text>
<circle cx="842.7" cy="707.2" r="4.0" fill="none" stroke="#c6c6c6" stroke-width="0.8"/>
<text x="842.7" y="708.1" font-family="Liberation Sans,sans-serif" font-size="2.4" font-weight="normal" fill="#8a8a8a" text-anchor="middle" >TP1601</text>
<rect x="754.5" y="697.0" width="6.0" height="8.5" rx="0" fill="none" stroke="#c8c8c8" stroke-width="0.6" />
<text x="757.5" y="702.5" font-family="Liberation Sans,sans-serif" font-size="2.6" font-weight="normal" fill="#999" text-anchor="middle" >TP</text>
<text x="747.0" y="713.6" font-family="Liberation Sans,sans-serif" font-size="2.6" font-weight="normal" fill="#999" text-anchor="middle" textLength="6" lengthAdjust="spacingAndGlyphs" >TP1608</text>
<text x="757.5" y="713.6" font-family="Liberation Sans,sans-serif" font-size="2.6" font-weight="normal" fill="#999" text-anchor="middle" textLength="6" lengthAdjust="spacingAndGlyphs" >TP1609</text>
<text x="797.5" y="714.8" font-family="Liberation Sans,sans-serif" font-size="2.6" font-weight="normal" fill="#999" text-anchor="middle" textLength="6" lengthAdjust="spacingAndGlyphs" >TP1610</text>
<rect x="769.6" y="684.0" width="62.6" height="20.0" rx="3" fill="none" stroke="#555" stroke-width="1.5" />
<rect x="777.0" y="683.2" width="1.9" height="3.6" rx="0" fill="#6a6a6a" stroke="none" stroke-width="0" />
<rect x="777.0" y="701.0" width="1.9" height="3.6" rx="0" fill="#6a6a6a" stroke="none" stroke-width="0" />
<rect x="780.3" y="683.2" width="1.9" height="3.6" rx="0" fill="#6a6a6a" stroke="none" stroke-width="0" />
<rect x="780.3" y="701.0" width="1.9" height="3.6" rx="0" fill="#6a6a6a" stroke="none" stroke-width="0" />
<rect x="783.6" y="683.2" width="1.9" height="3.6" rx="0" fill="#6a6a6a" stroke="none" stroke-width="0" />
<rect x="783.6" y="701.0" width="1.9" height="3.6" rx="0" fill="#6a6a6a" stroke="none" stroke-width="0" />
<rect x="786.9" y="683.2" width="1.9" height="3.6" rx="0" fill="#6a6a6a" stroke="none" stroke-width="0" />
<rect x="786.9" y="701.0" width="1.9" height="3.6" rx="0" fill="#6a6a6a" stroke="none" stroke-width="0" />
<rect x="790.2" y="683.2" width="1.9" height="3.6" rx="0" fill="#6a6a6a" stroke="none" stroke-width="0" />
<rect x="790.2" y="701.0" width="1.9" height="3.6" rx="0" fill="#6a6a6a" stroke="none" stroke-width="0" />
<rect x="793.5" y="683.2" width="1.9" height="3.6" rx="0" fill="#6a6a6a" stroke="none" stroke-width="0" />
<rect x="793.5" y="701.0" width="1.9" height="3.6" rx="0" fill="#6a6a6a" stroke="none" stroke-width="0" />
<rect x="796.8" y="683.2" width="1.9" height="3.6" rx="0" fill="#6a6a6a" stroke="none" stroke-width="0" />
<rect x="796.8" y="701.0" width="1.9" height="3.6" rx="0" fill="#6a6a6a" stroke="none" stroke-width="0" />
<rect x="800.1" y="683.2" width="1.9" height="3.6" rx="0" fill="#6a6a6a" stroke="none" stroke-width="0" />
<rect x="800.1" y="701.0" width="1.9" height="3.6" rx="0" fill="#6a6a6a" stroke="none" stroke-width="0" />
<rect x="803.4" y="683.2" width="1.9" height="3.6" rx="0" fill="#6a6a6a" stroke="none" stroke-width="0" />
<rect x="803.4" y="701.0" width="1.9" height="3.6" rx="0" fill="#6a6a6a" stroke="none" stroke-width="0" />
<rect x="806.7" y="683.2" width="1.9" height="3.6" rx="0" fill="#6a6a6a" stroke="none" stroke-width="0" />
<rect x="806.7" y="701.0" width="1.9" height="3.6" rx="0" fill="#6a6a6a" stroke="none" stroke-width="0" />
<rect x="810.0" y="683.2" width="1.9" height="3.6" rx="0" fill="#6a6a6a" stroke="none" stroke-width="0" />
<rect x="810.0" y="701.0" width="1.9" height="3.6" rx="0" fill="#6a6a6a" stroke="none" stroke-width="0" />
<rect x="813.3" y="683.2" width="1.9" height="3.6" rx="0" fill="#6a6a6a" stroke="none" stroke-width="0" />
<rect x="813.3" y="701.0" width="1.9" height="3.6" rx="0" fill="#6a6a6a" stroke="none" stroke-width="0" />
<rect x="816.6" y="683.2" width="1.9" height="3.6" rx="0" fill="#6a6a6a" stroke="none" stroke-width="0" />
<rect x="816.6" y="701.0" width="1.9" height="3.6" rx="0" fill="#6a6a6a" stroke="none" stroke-width="0" />
<rect x="819.9" y="683.2" width="1.9" height="3.6" rx="0" fill="#6a6a6a" stroke="none" stroke-width="0" />
<rect x="819.9" y="701.0" width="1.9" height="3.6" rx="0" fill="#6a6a6a" stroke="none" stroke-width="0" />
<rect x="823.2" y="683.2" width="1.9" height="3.6" rx="0" fill="#6a6a6a" stroke="none" stroke-width="0" />
<rect x="823.2" y="701.0" width="1.9" height="3.6" rx="0" fill="#6a6a6a" stroke="none" stroke-width="0" />
<rect x="770.6" y="684.6" width="4.6" height="3.8" rx="0" fill="#fff" stroke="#9a9a9a" stroke-width="0.7" />
<rect x="826.6" y="684.6" width="4.6" height="3.8" rx="0" fill="#fff" stroke="#9a9a9a" stroke-width="0.7" />
<rect x="770.6" y="699.6" width="4.6" height="3.8" rx="0" fill="#fff" stroke="#9a9a9a" stroke-width="0.7" />
<rect x="826.6" y="699.6" width="4.6" height="3.8" rx="0" fill="#fff" stroke="#9a9a9a" stroke-width="0.7" />
<text x="801.1" y="700.9" font-family="Liberation Sans,sans-serif" font-size="19.3" font-weight="normal" fill="#000" text-anchor="middle" textLength="51.4" lengthAdjust="spacingAndGlyphs" >J1603</text>
<text x="779.8" y="682.0" font-family="Liberation Sans,sans-serif" font-size="5.6" font-weight="normal" fill="#b0b0b0" text-anchor="middle" >1</text>
<text x="821.0" y="682.0" font-family="Liberation Sans,sans-serif" font-size="5.6" font-weight="normal" fill="#b0b0b0" text-anchor="middle" >14</text>
<text x="780.8" y="711.0" font-family="Liberation Sans,sans-serif" font-size="5.6" font-weight="normal" fill="#b0b0b0" text-anchor="middle" >28</text>
<text x="821.0" y="711.0" font-family="Liberation Sans,sans-serif" font-size="5.6" font-weight="normal" fill="#b0b0b0" text-anchor="middle" >15</text>
<circle cx="872.1" cy="705.4" r="14.7" fill="none" stroke="#5a5a5a" stroke-width="1.0"/>
<circle cx="872.1" cy="705.4" r="7.0" fill="none" stroke="#5a5a5a" stroke-width="1.0"/>
<rect x="898.9" y="681.0" width="49.6" height="21.0" rx="1.5" fill="none" stroke="#9a9a9a" stroke-width="1.6" />
<rect x="901.0" y="683.2" width="45.4" height="16.6" rx="0" fill="none" stroke="#c0c0c0" stroke-width="0.8" />
<rect x="904.5" y="681.4" width="2.2" height="2.4" rx="0" fill="#aaa" stroke="none" stroke-width="0" />
<rect x="904.5" y="699.4" width="2.2" height="2.4" rx="0" fill="#aaa" stroke="none" stroke-width="0" />
<rect x="908.5" y="681.4" width="2.2" height="2.4" rx="0" fill="#aaa" stroke="none" stroke-width="0" />
<rect x="908.5" y="699.4" width="2.2" height="2.4" rx="0" fill="#aaa" stroke="none" stroke-width="0" />
<rect x="912.5" y="681.4" width="2.2" height="2.4" rx="0" fill="#aaa" stroke="none" stroke-width="0" />
<rect x="912.5" y="699.4" width="2.2" height="2.4" rx="0" fill="#aaa" stroke="none" stroke-width="0" />
<rect x="916.5" y="681.4" width="2.2" height="2.4" rx="0" fill="#aaa" stroke="none" stroke-width="0" />
<rect x="916.5" y="699.4" width="2.2" height="2.4" rx="0" fill="#aaa" stroke="none" stroke-width="0" />
<rect x="920.5" y="681.4" width="2.2" height="2.4" rx="0" fill="#aaa" stroke="none" stroke-width="0" />
<rect x="920.5" y="699.4" width="2.2" height="2.4" rx="0" fill="#aaa" stroke="none" stroke-width="0" />
<rect x="924.5" y="681.4" width="2.2" height="2.4" rx="0" fill="#aaa" stroke="none" stroke-width="0" />
<rect x="924.5" y="699.4" width="2.2" height="2.4" rx="0" fill="#aaa" stroke="none" stroke-width="0" />
<rect x="928.5" y="681.4" width="2.2" height="2.4" rx="0" fill="#aaa" stroke="none" stroke-width="0" />
<rect x="928.5" y="699.4" width="2.2" height="2.4" rx="0" fill="#aaa" stroke="none" stroke-width="0" />
<rect x="932.5" y="681.4" width="2.2" height="2.4" rx="0" fill="#aaa" stroke="none" stroke-width="0" />
<rect x="932.5" y="699.4" width="2.2" height="2.4" rx="0" fill="#aaa" stroke="none" stroke-width="0" />
<rect x="936.5" y="681.4" width="2.2" height="2.4" rx="0" fill="#aaa" stroke="none" stroke-width="0" />
<rect x="936.5" y="699.4" width="2.2" height="2.4" rx="0" fill="#aaa" stroke="none" stroke-width="0" />
<rect x="940.5" y="681.4" width="2.2" height="2.4" rx="0" fill="#aaa" stroke="none" stroke-width="0" />
<rect x="940.5" y="699.4" width="2.2" height="2.4" rx="0" fill="#aaa" stroke="none" stroke-width="0" />
<text x="923.7" y="697.6" font-family="Liberation Sans,sans-serif" font-size="16.4" font-weight="normal" fill="#000" text-anchor="middle" textLength="42.5" lengthAdjust="spacingAndGlyphs" >J1601</text>
<path d="M912.8 676.5 H897.5 V682 M897.5 700 V706.5 H905.9 M935.9 676.5 H948.5" fill="none" stroke="#6e6e6e" stroke-width="0.9" />
<circle cx="957.1" cy="692.0" r="4.6" fill="none" stroke="#5e5e5e" stroke-width="0.9"/>
<text x="957.1" y="693.0" font-family="Liberation Sans,sans-serif" font-size="2.6" font-weight="bold" fill="#333" text-anchor="middle" textLength="6" lengthAdjust="spacingAndGlyphs" >TP1604</text>
<path d="M900.5 670.2 a2.6 2.6 0 1 0 3.5 3.6" fill="none" stroke="#b8b8b8" stroke-width="0.7" />
<text x="914.0" y="672.4" font-family="Liberation Sans,sans-serif" font-size="2.6" font-weight="normal" fill="#aaa" text-anchor="middle" textLength="6" lengthAdjust="spacingAndGlyphs" >TP1620</text>
<rect x="952.4" y="617.4" width="24.2" height="19.0" rx="0" fill="none" stroke="#c0c0c0" stroke-width="0.8" />
<text x="964.5" y="630.0" font-family="Liberation Sans,sans-serif" font-size="8.6" font-weight="normal" fill="#111" text-anchor="middle" textLength="21" lengthAdjust="spacingAndGlyphs" >L1001</text>
<text x="969.0" y="648.4" font-family="Liberation Sans,sans-serif" font-size="8.8" font-weight="normal" fill="#000" text-anchor="middle" textLength="21.5" lengthAdjust="spacingAndGlyphs" >D1001</text>
<rect x="960.0" y="640.8" width="16.0" height="8.0" rx="0" fill="none" stroke="#dcdcdc" stroke-width="0.5" />
<rect x="979.7" y="619.2" width="6.7" height="14.4" rx="0" fill="none" stroke="#bdbdbd" stroke-width="0.8" stroke-dasharray="1 0.7"/>
<text font-family="Liberation Sans,sans-serif" font-size="4.4" font-weight="normal" fill="#333" text-anchor="middle" textLength="11" lengthAdjust="spacingAndGlyphs" transform="translate(983.0 626.4) rotate(-90) translate(0 1.6)">C1063</text>
<rect x="934.7" y="639.4" width="16.7" height="15.6" rx="0" fill="none" stroke="#cdcdcd" stroke-width="0.6" stroke-dasharray="1.2 0.8"/>
<circle cx="937.5" cy="642.0" r="0.9" fill="none" stroke="#c8c8c8" stroke-width="0.5"/>
<circle cx="937.5" cy="651.5" r="0.9" fill="none" stroke="#c8c8c8" stroke-width="0.5"/>
<circle cx="948.5" cy="642.0" r="0.9" fill="none" stroke="#c8c8c8" stroke-width="0.5"/>
<circle cx="948.5" cy="651.5" r="0.9" fill="none" stroke="#c8c8c8" stroke-width="0.5"/>
<circle cx="937.5" cy="646.8" r="0.9" fill="none" stroke="#c8c8c8" stroke-width="0.5"/>
<text font-family="Liberation Sans,sans-serif" font-size="4" font-weight="normal" fill="#333" text-anchor="middle" textLength="10" lengthAdjust="spacingAndGlyphs" transform="translate(943.2 647.2) rotate(-90) translate(0 1.4)">U1001</text>
<text font-family="Liberation Sans,sans-serif" font-size="9" font-weight="normal" fill="#000" text-anchor="middle" textLength="22" lengthAdjust="spacingAndGlyphs" transform="translate(974.0 666.0) rotate(-90) translate(0 3.2)">D1606</text>
<rect x="984.5" y="655.5" width="4.6" height="6.8" rx="0" fill="none" stroke="#c8c8c8" stroke-width="0.6" />
<rect x="984.5" y="668.5" width="4.6" height="6.8" rx="0" fill="none" stroke="#c8c8c8" stroke-width="0.6" />
<path d="M984.5 658 h4.6 M984.5 660.2 h4.6 M984.5 671 h4.6 M984.5 673.2 h4.6" fill="none" stroke="#aaa" stroke-width="0.6" />
<text x="936.5" y="631.2" font-family="Liberation Sans,sans-serif" font-size="4.6" font-weight="bold" fill="#222" text-anchor="middle" >✕</text>
<rect x="1008.0" y="630.3" width="81.0" height="19.2" rx="0" fill="#e4e4e4" stroke="#c4c4c4" stroke-width="0.7" />
<rect x="1016.0" y="630.6" width="1.6" height="4.2" rx="0" fill="#b0b0b0" stroke="none" stroke-width="0" />
<rect x="1016.0" y="645.0" width="1.6" height="4.2" rx="0" fill="#b0b0b0" stroke="none" stroke-width="0" />
<rect x="1019.2" y="630.6" width="1.6" height="4.2" rx="0" fill="#b0b0b0" stroke="none" stroke-width="0" />
<rect x="1019.2" y="645.0" width="1.6" height="4.2" rx="0" fill="#b0b0b0" stroke="none" stroke-width="0" />
<rect x="1022.4" y="630.6" width="1.6" height="4.2" rx="0" fill="#b0b0b0" stroke="none" stroke-width="0" />
<rect x="1022.4" y="645.0" width="1.6" height="4.2" rx="0" fill="#b0b0b0" stroke="none" stroke-width="0" />
<rect x="1025.6" y="630.6" width="1.6" height="4.2" rx="0" fill="#b0b0b0" stroke="none" stroke-width="0" />
<rect x="1025.6" y="645.0" width="1.6" height="4.2" rx="0" fill="#b0b0b0" stroke="none" stroke-width="0" />
<rect x="1028.8" y="630.6" width="1.6" height="4.2" rx="0" fill="#b0b0b0" stroke="none" stroke-width="0" />
<rect x="1028.8" y="645.0" width="1.6" height="4.2" rx="0" fill="#b0b0b0" stroke="none" stroke-width="0" />
<rect x="1032.0" y="630.6" width="1.6" height="4.2" rx="0" fill="#b0b0b0" stroke="none" stroke-width="0" />
<rect x="1032.0" y="645.0" width="1.6" height="4.2" rx="0" fill="#b0b0b0" stroke="none" stroke-width="0" />
<rect x="1035.2" y="630.6" width="1.6" height="4.2" rx="0" fill="#b0b0b0" stroke="none" stroke-width="0" />
<rect x="1035.2" y="645.0" width="1.6" height="4.2" rx="0" fill="#b0b0b0" stroke="none" stroke-width="0" />
<rect x="1038.4" y="630.6" width="1.6" height="4.2" rx="0" fill="#b0b0b0" stroke="none" stroke-width="0" />
<rect x="1038.4" y="645.0" width="1.6" height="4.2" rx="0" fill="#b0b0b0" stroke="none" stroke-width="0" />
<rect x="1041.6" y="630.6" width="1.6" height="4.2" rx="0" fill="#b0b0b0" stroke="none" stroke-width="0" />
<rect x="1041.6" y="645.0" width="1.6" height="4.2" rx="0" fill="#b0b0b0" stroke="none" stroke-width="0" />
<rect x="1044.8" y="630.6" width="1.6" height="4.2" rx="0" fill="#b0b0b0" stroke="none" stroke-width="0" />
<rect x="1044.8" y="645.0" width="1.6" height="4.2" rx="0" fill="#b0b0b0" stroke="none" stroke-width="0" />
<rect x="1048.0" y="630.6" width="1.6" height="4.2" rx="0" fill="#b0b0b0" stroke="none" stroke-width="0" />
<rect x="1048.0" y="645.0" width="1.6" height="4.2" rx="0" fill="#b0b0b0" stroke="none" stroke-width="0" />
<rect x="1051.2" y="630.6" width="1.6" height="4.2" rx="0" fill="#b0b0b0" stroke="none" stroke-width="0" />
<rect x="1051.2" y="645.0" width="1.6" height="4.2" rx="0" fill="#b0b0b0" stroke="none" stroke-width="0" />
<rect x="1054.4" y="630.6" width="1.6" height="4.2" rx="0" fill="#b0b0b0" stroke="none" stroke-width="0" />
<rect x="1054.4" y="645.0" width="1.6" height="4.2" rx="0" fill="#b0b0b0" stroke="none" stroke-width="0" />
<rect x="1057.6" y="630.6" width="1.6" height="4.2" rx="0" fill="#b0b0b0" stroke="none" stroke-width="0" />
<rect x="1057.6" y="645.0" width="1.6" height="4.2" rx="0" fill="#b0b0b0" stroke="none" stroke-width="0" />
<rect x="1060.8" y="630.6" width="1.6" height="4.2" rx="0" fill="#b0b0b0" stroke="none" stroke-width="0" />
<rect x="1060.8" y="645.0" width="1.6" height="4.2" rx="0" fill="#b0b0b0" stroke="none" stroke-width="0" />
<rect x="1064.0" y="630.6" width="1.6" height="4.2" rx="0" fill="#b0b0b0" stroke="none" stroke-width="0" />
<rect x="1064.0" y="645.0" width="1.6" height="4.2" rx="0" fill="#b0b0b0" stroke="none" stroke-width="0" />
<rect x="1067.2" y="630.6" width="1.6" height="4.2" rx="0" fill="#b0b0b0" stroke="none" stroke-width="0" />
<rect x="1067.2" y="645.0" width="1.6" height="4.2" rx="0" fill="#b0b0b0" stroke="none" stroke-width="0" />
<rect x="1070.4" y="630.6" width="1.6" height="4.2" rx="0" fill="#b0b0b0" stroke="none" stroke-width="0" />
<rect x="1070.4" y="645.0" width="1.6" height="4.2" rx="0" fill="#b0b0b0" stroke="none" stroke-width="0" />
<rect x="1073.6" y="630.6" width="1.6" height="4.2" rx="0" fill="#b0b0b0" stroke="none" stroke-width="0" />
<rect x="1073.6" y="645.0" width="1.6" height="4.2" rx="0" fill="#b0b0b0" stroke="none" stroke-width="0" />
<rect x="1076.8" y="630.6" width="1.6" height="4.2" rx="0" fill="#b0b0b0" stroke="none" stroke-width="0" />
<rect x="1076.8" y="645.0" width="1.6" height="4.2" rx="0" fill="#b0b0b0" stroke="none" stroke-width="0" />
<rect x="1080.0" y="630.6" width="1.6" height="4.2" rx="0" fill="#b0b0b0" stroke="none" stroke-width="0" />
<rect x="1080.0" y="645.0" width="1.6" height="4.2" rx="0" fill="#b0b0b0" stroke="none" stroke-width="0" />
<rect x="1083.2" y="630.6" width="1.6" height="4.2" rx="0" fill="#b0b0b0" stroke="none" stroke-width="0" />
<rect x="1083.2" y="645.0" width="1.6" height="4.2" rx="0" fill="#b0b0b0" stroke="none" stroke-width="0" />
<rect x="1010.0" y="632.6" width="77.0" height="14.4" rx="0" fill="none" stroke="#aaaaaa" stroke-width="1.2" />
<rect x="1018.5" y="635.6" width="60.0" height="8.6" rx="0" fill="#f0f0f0" stroke="none" stroke-width="0" />
<path d="M1018.5 637.4 H1078.5 M1018.5 642.8 H1078.5" fill="none" stroke="#6a6a6a" stroke-width="0.8" stroke-dasharray="2.4 1.2"/>
<rect x="1011.6" y="635.2" width="5.8" height="9.6" rx="0" fill="#fff" stroke="#9a9a9a" stroke-width="0.8" />
<rect x="1079.6" y="635.2" width="5.8" height="9.6" rx="0" fill="#fff" stroke="#9a9a9a" stroke-width="0.8" />
<text x="1048.8" y="647.0" font-family="Liberation Sans,sans-serif" font-size="19.8" font-weight="normal" fill="#000" text-anchor="middle" textLength="51.2" lengthAdjust="spacingAndGlyphs" >J2002</text>
<path d="M1002 643 V654.8 M1095.6 642.2 V654.5" fill="none" stroke="#666" stroke-width="0.9" />
<path d="M1023.7 655.5 H1035.5 M1057.5 655.5 H1069.6 M1052.6 624.5 H1076.6" fill="none" stroke="#666" stroke-width="0.9" />
<text x="1021.0" y="628.0" font-family="Liberation Sans,sans-serif" font-size="5.6" font-weight="normal" fill="#b4b4b4" text-anchor="middle" >38</text>
<text x="1081.8" y="628.0" font-family="Liberation Sans,sans-serif" font-size="5.6" font-weight="normal" fill="#b4b4b4" text-anchor="middle" >20</text>
<text x="1020.5" y="658.0" font-family="Liberation Sans,sans-serif" font-size="5.6" font-weight="normal" fill="#b4b4b4" text-anchor="middle" >1</text>
<text x="1080.0" y="659.0" font-family="Liberation Sans,sans-serif" font-size="5.6" font-weight="normal" fill="#b4b4b4" text-anchor="middle" >19</text>
<rect x="959.4" y="515.5" width="29.3" height="29.0" rx="0" fill="none" stroke="#c4c4c4" stroke-width="0.8" />
<text font-family="Liberation Sans,sans-serif" font-size="11.6" font-weight="normal" fill="#000" text-anchor="middle" textLength="27" lengthAdjust="spacingAndGlyphs" transform="translate(974.0 530.0) rotate(-90) translate(0 4.2)">U3101</text>
<path d="M958.5 527 v5 M988.7 540 v4" fill="none" stroke="#444" stroke-width="1" />
<rect x="1098.7" y="550.4" width="50.0" height="46.4" rx="0" fill="none" stroke="#d0d0d0" stroke-width="0.6" stroke-dasharray="1.2 0.8"/>
<path d="M1098.7 550 V556 M1148.7 550 V556 M1098.7 591 V597 M1148.7 591 V597" fill="none" stroke="#555" stroke-width="1.3" />
<rect x="1101.5" y="551.2" width="2.2" height="3.4" rx="0" fill="none" stroke="#c6c6c6" stroke-width="0.5" />
<rect x="1101.5" y="592.4" width="2.2" height="3.4" rx="0" fill="none" stroke="#c6c6c6" stroke-width="0.5" />
<rect x="1105.4" y="551.2" width="2.2" height="3.4" rx="0" fill="none" stroke="#c6c6c6" stroke-width="0.5" />
<rect x="1105.4" y="592.4" width="2.2" height="3.4" rx="0" fill="none" stroke="#c6c6c6" stroke-width="0.5" />
<rect x="1109.3" y="551.2" width="2.2" height="3.4" rx="0" fill="none" stroke="#c6c6c6" stroke-width="0.5" />
<rect x="1109.3" y="592.4" width="2.2" height="3.4" rx="0" fill="none" stroke="#c6c6c6" stroke-width="0.5" />
<rect x="1113.2" y="551.2" width="2.2" height="3.4" rx="0" fill="none" stroke="#c6c6c6" stroke-width="0.5" />
<rect x="1113.2" y="592.4" width="2.2" height="3.4" rx="0" fill="none" stroke="#c6c6c6" stroke-width="0.5" />
<rect x="1117.1" y="551.2" width="2.2" height="3.4" rx="0" fill="none" stroke="#c6c6c6" stroke-width="0.5" />
<rect x="1117.1" y="592.4" width="2.2" height="3.4" rx="0" fill="none" stroke="#c6c6c6" stroke-width="0.5" />
<rect x="1121.0" y="551.2" width="2.2" height="3.4" rx="0" fill="none" stroke="#c6c6c6" stroke-width="0.5" />
<rect x="1121.0" y="592.4" width="2.2" height="3.4" rx="0" fill="none" stroke="#c6c6c6" stroke-width="0.5" />
<rect x="1124.9" y="551.2" width="2.2" height="3.4" rx="0" fill="none" stroke="#c6c6c6" stroke-width="0.5" />
<rect x="1124.9" y="592.4" width="2.2" height="3.4" rx="0" fill="none" stroke="#c6c6c6" stroke-width="0.5" />
<rect x="1128.8" y="551.2" width="2.2" height="3.4" rx="0" fill="none" stroke="#c6c6c6" stroke-width="0.5" />
<rect x="1128.8" y="592.4" width="2.2" height="3.4" rx="0" fill="none" stroke="#c6c6c6" stroke-width="0.5" />
<rect x="1132.7" y="551.2" width="2.2" height="3.4" rx="0" fill="none" stroke="#c6c6c6" stroke-width="0.5" />
<rect x="1132.7" y="592.4" width="2.2" height="3.4" rx="0" fill="none" stroke="#c6c6c6" stroke-width="0.5" />
<rect x="1136.6" y="551.2" width="2.2" height="3.4" rx="0" fill="none" stroke="#c6c6c6" stroke-width="0.5" />
<rect x="1136.6" y="592.4" width="2.2" height="3.4" rx="0" fill="none" stroke="#c6c6c6" stroke-width="0.5" />
<rect x="1140.5" y="551.2" width="2.2" height="3.4" rx="0" fill="none" stroke="#c6c6c6" stroke-width="0.5" />
<rect x="1140.5" y="592.4" width="2.2" height="3.4" rx="0" fill="none" stroke="#c6c6c6" stroke-width="0.5" />
<rect x="1144.4" y="551.2" width="2.2" height="3.4" rx="0" fill="none" stroke="#c6c6c6" stroke-width="0.5" />
<rect x="1144.4" y="592.4" width="2.2" height="3.4" rx="0" fill="none" stroke="#c6c6c6" stroke-width="0.5" />
<rect x="1099.6" y="557.0" width="3.4" height="2.2" rx="0" fill="none" stroke="#cccccc" stroke-width="0.5" />
<rect x="1144.6" y="557.0" width="3.4" height="2.2" rx="0" fill="none" stroke="#cccccc" stroke-width="0.5" />
<rect x="1099.6" y="561.2" width="3.4" height="2.2" rx="0" fill="none" stroke="#cccccc" stroke-width="0.5" />
<rect x="1144.6" y="561.2" width="3.4" height="2.2" rx="0" fill="none" stroke="#cccccc" stroke-width="0.5" />
<rect x="1099.6" y="565.4" width="3.4" height="2.2" rx="0" fill="none" stroke="#cccccc" stroke-width="0.5" />
<rect x="1144.6" y="565.4" width="3.4" height="2.2" rx="0" fill="none" stroke="#cccccc" stroke-width="0.5" />
<rect x="1099.6" y="569.6" width="3.4" height="2.2" rx="0" fill="none" stroke="#cccccc" stroke-width="0.5" />
<rect x="1144.6" y="569.6" width="3.4" height="2.2" rx="0" fill="none" stroke="#cccccc" stroke-width="0.5" />
<rect x="1099.6" y="573.8" width="3.4" height="2.2" rx="0" fill="none" stroke="#cccccc" stroke-width="0.5" />
<rect x="1144.6" y="573.8" width="3.4" height="2.2" rx="0" fill="none" stroke="#cccccc" stroke-width="0.5" />
<rect x="1099.6" y="578.0" width="3.4" height="2.2" rx="0" fill="none" stroke="#cccccc" stroke-width="0.5" />
<rect x="1144.6" y="578.0" width="3.4" height="2.2" rx="0" fill="none" stroke="#cccccc" stroke-width="0.5" />
<rect x="1099.6" y="582.2" width="3.4" height="2.2" rx="0" fill="none" stroke="#cccccc" stroke-width="0.5" />
<rect x="1144.6" y="582.2" width="3.4" height="2.2" rx="0" fill="none" stroke="#cccccc" stroke-width="0.5" />
<rect x="1099.6" y="586.4" width="3.4" height="2.2" rx="0" fill="none" stroke="#cccccc" stroke-width="0.5" />
<rect x="1144.6" y="586.4" width="3.4" height="2.2" rx="0" fill="none" stroke="#cccccc" stroke-width="0.5" />
<text x="1123.2" y="579.4" font-family="Liberation Sans,sans-serif" font-size="16.8" font-weight="normal" fill="#000" text-anchor="middle" textLength="43.5" lengthAdjust="spacingAndGlyphs" >U3203</text>
<rect x="1121.7" y="503.6" width="11.6" height="15.8" rx="0" fill="none" stroke="#c6c6c6" stroke-width="0.6" stroke-dasharray="1.2 0.8"/>
<rect x="1122.9" y="505.1" width="2.0" height="3.3" rx="0" fill="none" stroke="#d2d2d2" stroke-width="0.4" />
<rect x="1122.9" y="509.4" width="2.0" height="3.3" rx="0" fill="none" stroke="#d2d2d2" stroke-width="0.4" />
<rect x="1122.9" y="513.6" width="2.0" height="3.3" rx="0" fill="none" stroke="#d2d2d2" stroke-width="0.4" />
<rect x="1130.1" y="505.1" width="2.0" height="3.3" rx="0" fill="none" stroke="#d2d2d2" stroke-width="0.4" />
<rect x="1130.1" y="509.4" width="2.0" height="3.3" rx="0" fill="none" stroke="#d2d2d2" stroke-width="0.4" />
<rect x="1130.1" y="513.6" width="2.0" height="3.3" rx="0" fill="none" stroke="#d2d2d2" stroke-width="0.4" />
<text font-family="Liberation Sans,sans-serif" font-size="5" font-weight="normal" fill="#111" text-anchor="middle" textLength="13" lengthAdjust="spacingAndGlyphs" transform="translate(1127.5 511.5) rotate(-90) translate(0 1.8)">S3206</text>
<rect x="1097.6" y="512.4" width="13.9" height="17.0" rx="0" fill="none" stroke="#c6c6c6" stroke-width="0.6" stroke-dasharray="1.2 0.8"/>
<rect x="1098.8" y="513.9" width="2.0" height="3.7" rx="0" fill="none" stroke="#d2d2d2" stroke-width="0.4" />
<rect x="1098.8" y="518.6" width="2.0" height="3.7" rx="0" fill="none" stroke="#d2d2d2" stroke-width="0.4" />
<rect x="1098.8" y="523.2" width="2.0" height="3.7" rx="0" fill="none" stroke="#d2d2d2" stroke-width="0.4" />
<rect x="1108.3" y="513.9" width="2.0" height="3.7" rx="0" fill="none" stroke="#d2d2d2" stroke-width="0.4" />
<rect x="1108.3" y="518.6" width="2.0" height="3.7" rx="0" fill="none" stroke="#d2d2d2" stroke-width="0.4" />
<rect x="1108.3" y="523.2" width="2.0" height="3.7" rx="0" fill="none" stroke="#d2d2d2" stroke-width="0.4" />
<text font-family="Liberation Sans,sans-serif" font-size="5" font-weight="normal" fill="#111" text-anchor="middle" textLength="13" lengthAdjust="spacingAndGlyphs" transform="translate(1104.5 520.9) rotate(-90) translate(0 1.8)">S3208</text>
<rect x="1072.0" y="523.8" width="12.4" height="15.7" rx="0" fill="none" stroke="#c6c6c6" stroke-width="0.6" stroke-dasharray="1.2 0.8"/>
<rect x="1073.2" y="525.3" width="2.0" height="3.2" rx="0" fill="none" stroke="#d2d2d2" stroke-width="0.4" />
<rect x="1073.2" y="529.5" width="2.0" height="3.2" rx="0" fill="none" stroke="#d2d2d2" stroke-width="0.4" />
<rect x="1073.2" y="533.8" width="2.0" height="3.2" rx="0" fill="none" stroke="#d2d2d2" stroke-width="0.4" />
<rect x="1081.2" y="525.3" width="2.0" height="3.2" rx="0" fill="none" stroke="#d2d2d2" stroke-width="0.4" />
<rect x="1081.2" y="529.5" width="2.0" height="3.2" rx="0" fill="none" stroke="#d2d2d2" stroke-width="0.4" />
<rect x="1081.2" y="533.8" width="2.0" height="3.2" rx="0" fill="none" stroke="#d2d2d2" stroke-width="0.4" />
<text font-family="Liberation Sans,sans-serif" font-size="5" font-weight="normal" fill="#111" text-anchor="middle" textLength="13" lengthAdjust="spacingAndGlyphs" transform="translate(1078.2 531.6) rotate(-90) translate(0 1.8)">S3204</text>
<rect x="1045.3" y="534.3" width="12.2" height="15.4" rx="0" fill="none" stroke="#c6c6c6" stroke-width="0.6" stroke-dasharray="1.2 0.8"/>
<rect x="1046.5" y="535.8" width="2.0" height="3.1" rx="0" fill="none" stroke="#d2d2d2" stroke-width="0.4" />
<rect x="1046.5" y="539.9" width="2.0" height="3.1" rx="0" fill="none" stroke="#d2d2d2" stroke-width="0.4" />
<rect x="1046.5" y="544.1" width="2.0" height="3.1" rx="0" fill="none" stroke="#d2d2d2" stroke-width="0.4" />
<rect x="1054.3" y="535.8" width="2.0" height="3.1" rx="0" fill="none" stroke="#d2d2d2" stroke-width="0.4" />
<rect x="1054.3" y="539.9" width="2.0" height="3.1" rx="0" fill="none" stroke="#d2d2d2" stroke-width="0.4" />
<rect x="1054.3" y="544.1" width="2.0" height="3.1" rx="0" fill="none" stroke="#d2d2d2" stroke-width="0.4" />
<text font-family="Liberation Sans,sans-serif" font-size="5" font-weight="normal" fill="#111" text-anchor="middle" textLength="13" lengthAdjust="spacingAndGlyphs" transform="translate(1051.4 542.0) rotate(-90) translate(0 1.8)">S3201</text>
<rect x="1065.5" y="554.0" width="12.5" height="16.0" rx="0" fill="none" stroke="#c6c6c6" stroke-width="0.6" stroke-dasharray="1.2 0.8"/>
<rect x="1066.7" y="555.5" width="2.0" height="3.3" rx="0" fill="none" stroke="#d2d2d2" stroke-width="0.4" />
<rect x="1066.7" y="559.8" width="2.0" height="3.3" rx="0" fill="none" stroke="#d2d2d2" stroke-width="0.4" />
<rect x="1066.7" y="564.2" width="2.0" height="3.3" rx="0" fill="none" stroke="#d2d2d2" stroke-width="0.4" />
<rect x="1074.8" y="555.5" width="2.0" height="3.3" rx="0" fill="none" stroke="#d2d2d2" stroke-width="0.4" />
<rect x="1074.8" y="559.8" width="2.0" height="3.3" rx="0" fill="none" stroke="#d2d2d2" stroke-width="0.4" />
<rect x="1074.8" y="564.2" width="2.0" height="3.3" rx="0" fill="none" stroke="#d2d2d2" stroke-width="0.4" />
<text font-family="Liberation Sans,sans-serif" font-size="5" font-weight="normal" fill="#111" text-anchor="middle" textLength="13" lengthAdjust="spacingAndGlyphs" transform="translate(1071.8 562.0) rotate(-90) translate(0 1.8)">S3203</text>
<rect x="1012.9" y="585.2" width="11.1" height="16.2" rx="0" fill="none" stroke="#c6c6c6" stroke-width="0.6" stroke-dasharray="1.2 0.8"/>
<rect x="1014.1" y="586.7" width="2.0" height="3.4" rx="0" fill="none" stroke="#d2d2d2" stroke-width="0.4" />
<rect x="1014.1" y="591.1" width="2.0" height="3.4" rx="0" fill="none" stroke="#d2d2d2" stroke-width="0.4" />
<rect x="1014.1" y="595.5" width="2.0" height="3.4" rx="0" fill="none" stroke="#d2d2d2" stroke-width="0.4" />
<rect x="1020.8" y="586.7" width="2.0" height="3.4" rx="0" fill="none" stroke="#d2d2d2" stroke-width="0.4" />
<rect x="1020.8" y="591.1" width="2.0" height="3.4" rx="0" fill="none" stroke="#d2d2d2" stroke-width="0.4" />
<rect x="1020.8" y="595.5" width="2.0" height="3.4" rx="0" fill="none" stroke="#d2d2d2" stroke-width="0.4" />
<text font-family="Liberation Sans,sans-serif" font-size="5" font-weight="normal" fill="#111" text-anchor="middle" textLength="13" lengthAdjust="spacingAndGlyphs" transform="translate(1018.5 593.3) rotate(-90) translate(0 1.8)">S3205</text>
<rect x="1060.3" y="456.0" width="18.1" height="17.5" rx="0" fill="none" stroke="#bdbdbd" stroke-width="0.8" stroke-dasharray="1.2 0.8"/>
<text x="1069.3" y="466.6" font-family="Liberation Sans,sans-serif" font-size="5" font-weight="normal" fill="#333" text-anchor="middle" textLength="14" lengthAdjust="spacingAndGlyphs" >LQ300</text>
<rect x="1012.0" y="455.5" width="10.5" height="6.5" rx="0" fill="none" stroke="#c2c2c2" stroke-width="0.6" stroke-dasharray="1 0.7"/>
<text x="1017.2" y="460.0" font-family="Liberation Sans,sans-serif" font-size="3.6" font-weight="normal" fill="#333" text-anchor="middle" textLength="9.0" lengthAdjust="spacingAndGlyphs" >Z3303</text>
<rect x="1005.5" y="467.0" width="10.5" height="6.5" rx="0" fill="none" stroke="#c2c2c2" stroke-width="0.6" stroke-dasharray="1 0.7"/>
<text x="1010.8" y="471.5" font-family="Liberation Sans,sans-serif" font-size="3.6" font-weight="normal" fill="#333" text-anchor="middle" textLength="9.0" lengthAdjust="spacingAndGlyphs" >Z3301</text>
<rect x="1032.0" y="470.5" width="10.0" height="7.0" rx="0" fill="none" stroke="#c2c2c2" stroke-width="0.6" stroke-dasharray="1 0.7"/>
<text x="1037.0" y="475.3" font-family="Liberation Sans,sans-serif" font-size="3.6" font-weight="normal" fill="#333" text-anchor="middle" textLength="8.5" lengthAdjust="spacingAndGlyphs" >L3302</text>
<rect x="1050.0" y="482.5" width="10.0" height="8.0" rx="0" fill="none" stroke="#c2c2c2" stroke-width="0.6" stroke-dasharray="1 0.7"/>
<text x="1055.0" y="487.8" font-family="Liberation Sans,sans-serif" font-size="3.6" font-weight="normal" fill="#333" text-anchor="middle" textLength="8.5" lengthAdjust="spacingAndGlyphs" >L3306</text>
<rect x="1062.5" y="490.0" width="10.0" height="6.5" rx="0" fill="none" stroke="#c2c2c2" stroke-width="0.6" stroke-dasharray="1 0.7"/>
<text x="1067.5" y="494.5" font-family="Liberation Sans,sans-serif" font-size="3.6" font-weight="normal" fill="#333" text-anchor="middle" textLength="8.5" lengthAdjust="spacingAndGlyphs" >Z3302</text>
<rect x="1093.5" y="484.5" width="10.0" height="6.0" rx="0" fill="none" stroke="#c2c2c2" stroke-width="0.6" stroke-dasharray="1 0.7"/>
<text x="1098.5" y="488.8" font-family="Liberation Sans,sans-serif" font-size="3.6" font-weight="normal" fill="#333" text-anchor="middle" textLength="8.5" lengthAdjust="spacingAndGlyphs" >L3310</text>
<rect x="1144.5" y="500.5" width="10.0" height="6.5" rx="0" fill="none" stroke="#c2c2c2" stroke-width="0.6" stroke-dasharray="1 0.7"/>
<text x="1149.5" y="505.0" font-family="Liberation Sans,sans-serif" font-size="3.6" font-weight="normal" fill="#333" text-anchor="middle" textLength="8.5" lengthAdjust="spacingAndGlyphs" >Z3201</text>
<rect x="1053.5" y="515.0" width="10.0" height="5.5" rx="0" fill="none" stroke="#c2c2c2" stroke-width="0.6" stroke-dasharray="1 0.7"/>
<text x="1058.5" y="519.0" font-family="Liberation Sans,sans-serif" font-size="3.6" font-weight="normal" fill="#333" text-anchor="middle" textLength="8.5" lengthAdjust="spacingAndGlyphs" >S3209</text>
<rect x="1012.0" y="523.5" width="10.0" height="6.0" rx="0" fill="none" stroke="#c2c2c2" stroke-width="0.6" stroke-dasharray="1 0.7"/>
<text x="1017.0" y="527.8" font-family="Liberation Sans,sans-serif" font-size="3.6" font-weight="normal" fill="#333" text-anchor="middle" textLength="8.5" lengthAdjust="spacingAndGlyphs" >C3101</text>
<rect x="1031.5" y="530.5" width="10.0" height="5.5" rx="0" fill="none" stroke="#c2c2c2" stroke-width="0.6" stroke-dasharray="1 0.7"/>
<text x="1036.5" y="534.5" font-family="Liberation Sans,sans-serif" font-size="3.6" font-weight="normal" fill="#333" text-anchor="middle" textLength="8.5" lengthAdjust="spacingAndGlyphs" >R3117</text>
<rect x="1125.0" y="611.5" width="10.5" height="5.0" rx="0" fill="none" stroke="#c2c2c2" stroke-width="0.6" stroke-dasharray="1 0.7"/>
<text x="1130.2" y="615.3" font-family="Liberation Sans,sans-serif" font-size="3.6" font-weight="normal" fill="#333" text-anchor="middle" textLength="9.0" lengthAdjust="spacingAndGlyphs" >Z3212</text>
<rect x="1139.5" y="611.5" width="10.5" height="5.0" rx="0" fill="none" stroke="#c2c2c2" stroke-width="0.6" stroke-dasharray="1 0.7"/>
<text x="1144.8" y="615.3" font-family="Liberation Sans,sans-serif" font-size="3.6" font-weight="normal" fill="#333" text-anchor="middle" textLength="9.0" lengthAdjust="spacingAndGlyphs" >Z3203</text>
<rect x="1125.0" y="619.0" width="10.5" height="5.0" rx="0" fill="none" stroke="#c2c2c2" stroke-width="0.6" stroke-dasharray="1 0.7"/>
<text x="1130.2" y="622.8" font-family="Liberation Sans,sans-serif" font-size="3.6" font-weight="normal" fill="#333" text-anchor="middle" textLength="9.0" lengthAdjust="spacingAndGlyphs" >Z3202</text>
<rect x="1140.0" y="619.0" width="10.0" height="5.0" rx="0" fill="none" stroke="#c2c2c2" stroke-width="0.6" stroke-dasharray="1 0.7"/>
<text x="1145.0" y="622.8" font-family="Liberation Sans,sans-serif" font-size="3.6" font-weight="normal" fill="#333" text-anchor="middle" textLength="8.5" lengthAdjust="spacingAndGlyphs" >R3405</text>
<rect x="1054.0" y="501.0" width="9.0" height="13.5" rx="0" fill="none" stroke="#c2c2c2" stroke-width="0.6" stroke-dasharray="1 0.7"/>
<text x="1058.5" y="509.0" font-family="Liberation Sans,sans-serif" font-size="3.6" font-weight="normal" fill="#333" text-anchor="middle" ></text>
<rect x="1044.0" y="516.5" width="9.0" height="5.0" rx="0" fill="none" stroke="#c2c2c2" stroke-width="0.6" stroke-dasharray="1 0.7"/>
<text x="1048.5" y="520.3" font-family="Liberation Sans,sans-serif" font-size="3.6" font-weight="normal" fill="#333" text-anchor="middle" ></text>
<text font-family="Liberation Sans,sans-serif" font-size="3.8" font-weight="normal" fill="#222" text-anchor="middle" textLength="10" lengthAdjust="spacingAndGlyphs" transform="translate(1117.5 481.8) rotate(-90) translate(0 1.4)">S3304</text>
<text font-family="Liberation Sans,sans-serif" font-size="3.8" font-weight="normal" fill="#222" text-anchor="middle" textLength="10" lengthAdjust="spacingAndGlyphs" transform="translate(1026.5 500.5) rotate(-90) translate(0 1.4)">C3325</text>
<text font-family="Liberation Sans,sans-serif" font-size="3.8" font-weight="normal" fill="#222" text-anchor="middle" textLength="10" lengthAdjust="spacingAndGlyphs" transform="translate(1034.0 568.0) rotate(-90) translate(0 1.4)">S3202</text>
<text font-family="Liberation Sans,sans-serif" font-size="3.8" font-weight="normal" fill="#222" text-anchor="middle" textLength="10" lengthAdjust="spacingAndGlyphs" transform="translate(1047.5 579.5) rotate(-90) translate(0 1.4)">U3207</text>
<text font-family="Liberation Sans,sans-serif" font-size="3.8" font-weight="normal" fill="#222" text-anchor="middle" textLength="10" lengthAdjust="spacingAndGlyphs" transform="translate(1008.0 547.0) rotate(-90) translate(0 1.4)">C3105</text>
<rect x="1038.0" y="562.0" width="12.0" height="14.0" rx="0" fill="none" stroke="#c8c8c8" stroke-width="0.5" stroke-dasharray="1 0.7"/>
<rect x="1039.2" y="563.5" width="2.4" height="2.8" rx="0" fill="none" stroke="#c8c8c8" stroke-width="0.4" />
<rect x="1039.2" y="567.7" width="2.4" height="2.8" rx="0" fill="none" stroke="#c8c8c8" stroke-width="0.4" />
<rect x="1039.2" y="571.9" width="2.4" height="2.8" rx="0" fill="none" stroke="#c8c8c8" stroke-width="0.4" />
<rect x="1042.8" y="563.5" width="2.4" height="2.8" rx="0" fill="none" stroke="#c8c8c8" stroke-width="0.4" />
<rect x="1042.8" y="567.7" width="2.4" height="2.8" rx="0" fill="none" stroke="#c8c8c8" stroke-width="0.4" />
<rect x="1042.8" y="571.9" width="2.4" height="2.8" rx="0" fill="none" stroke="#c8c8c8" stroke-width="0.4" />
<rect x="1046.4" y="563.5" width="2.4" height="2.8" rx="0" fill="none" stroke="#c8c8c8" stroke-width="0.4" />
<rect x="1046.4" y="567.7" width="2.4" height="2.8" rx="0" fill="none" stroke="#c8c8c8" stroke-width="0.4" />
<rect x="1046.4" y="571.9" width="2.4" height="2.8" rx="0" fill="none" stroke="#c8c8c8" stroke-width="0.4" />
<rect x="1048.0" y="577.0" width="11.0" height="14.0" rx="0" fill="none" stroke="#c8c8c8" stroke-width="0.5" stroke-dasharray="1 0.7"/>
<rect x="1049.2" y="578.5" width="2.4" height="2.8" rx="0" fill="none" stroke="#c8c8c8" stroke-width="0.4" />
<rect x="1049.2" y="582.7" width="2.4" height="2.8" rx="0" fill="none" stroke="#c8c8c8" stroke-width="0.4" />
<rect x="1049.2" y="586.9" width="2.4" height="2.8" rx="0" fill="none" stroke="#c8c8c8" stroke-width="0.4" />
<rect x="1052.8" y="578.5" width="2.4" height="2.8" rx="0" fill="none" stroke="#c8c8c8" stroke-width="0.4" />
<rect x="1052.8" y="582.7" width="2.4" height="2.8" rx="0" fill="none" stroke="#c8c8c8" stroke-width="0.4" />
<rect x="1052.8" y="586.9" width="2.4" height="2.8" rx="0" fill="none" stroke="#c8c8c8" stroke-width="0.4" />
<rect x="1056.4" y="578.5" width="2.4" height="2.8" rx="0" fill="none" stroke="#c8c8c8" stroke-width="0.4" />
<rect x="1056.4" y="582.7" width="2.4" height="2.8" rx="0" fill="none" stroke="#c8c8c8" stroke-width="0.4" />
<rect x="1056.4" y="586.9" width="2.4" height="2.8" rx="0" fill="none" stroke="#c8c8c8" stroke-width="0.4" />
<text x="1046.0" y="567.8" font-family="Liberation Sans,sans-serif" font-size="3.6" font-weight="normal" fill="#222" text-anchor="middle" textLength="8" lengthAdjust="spacingAndGlyphs" >3404</text>
<text x="1054.0" y="582.8" font-family="Liberation Sans,sans-serif" font-size="3.6" font-weight="normal" fill="#222" text-anchor="middle" textLength="8" lengthAdjust="spacingAndGlyphs" >3406</text>
<circle cx="1020.9" cy="452.3" r="1.5" fill="none" stroke="#555" stroke-width="0.8"/>
<circle cx="1057.9" cy="454.7" r="1.5" fill="none" stroke="#555" stroke-width="0.8"/>
<circle cx="1013.9" cy="476.0" r="1.5" fill="none" stroke="#555" stroke-width="0.8"/>
<circle cx="1032.8" cy="494.5" r="1.5" fill="none" stroke="#555" stroke-width="0.8"/>
<circle cx="938.8" cy="470.0" r="1.5" fill="none" stroke="#555" stroke-width="0.8"/>
<circle cx="905.6" cy="488.9" r="1.5" fill="none" stroke="#555" stroke-width="0.8"/>
<circle cx="1043.2" cy="534.3" r="1.5" fill="none" stroke="#555" stroke-width="0.8"/>
<circle cx="1042.5" cy="557.1" r="1.5" fill="none" stroke="#555" stroke-width="0.8"/>
<circle cx="1109.6" cy="477.8" r="1.5" fill="none" stroke="#555" stroke-width="0.8"/>
<circle cx="1102.0" cy="482.0" r="1.5" fill="none" stroke="#555" stroke-width="0.8"/>
<circle cx="1071.0" cy="487.0" r="1.5" fill="none" stroke="#555" stroke-width="0.8"/>
<circle cx="1065.8" cy="507.0" r="1.5" fill="none" stroke="#555" stroke-width="0.8"/>
<circle cx="1003.0" cy="561.5" r="1.5" fill="none" stroke="#555" stroke-width="0.8"/>
<circle cx="942.8" cy="574.5" r="1.5" fill="none" stroke="#555" stroke-width="0.8"/>
<circle cx="1128.0" cy="548.0" r="1.5" fill="none" stroke="#555" stroke-width="0.8"/>
<circle cx="1028.5" cy="560.0" r="1.5" fill="none" stroke="#555" stroke-width="0.8"/>
<circle cx="1018.0" cy="574.0" r="1.5" fill="none" stroke="#555" stroke-width="0.8"/>
<circle cx="1041.5" cy="552.0" r="1.5" fill="none" stroke="#555" stroke-width="0.8"/>
<circle cx="1099.4" cy="508.5" r="2.3" fill="none" stroke="#555" stroke-width="0.9"/>
<text x="1089.5" y="485.0" font-family="Liberation Sans,sans-serif" font-size="5.4" font-weight="bold" fill="#222" text-anchor="middle" >✕</text>
<text x="1091.5" y="501.8" font-family="Liberation Sans,sans-serif" font-size="4.6" font-weight="bold" fill="#222" text-anchor="middle" >✕</text>
<text x="1018.8" y="495.0" font-family="Liberation Sans,sans-serif" font-size="5" font-weight="bold" fill="#222" text-anchor="middle" >✕</text>
<text x="1018.8" y="509.0" font-family="Liberation Sans,sans-serif" font-size="5" font-weight="bold" fill="#222" text-anchor="middle" >✕</text>
<text x="1076.0" y="548.0" font-family="Liberation Sans,sans-serif" font-size="5" font-weight="bold" fill="#222" text-anchor="middle" >✕</text>
<text x="1084.4" y="603.3" font-family="Liberation Sans,sans-serif" font-size="4.6" font-weight="bold" fill="#222" text-anchor="middle" >✕</text>
<text x="1103.6" y="603.3" font-family="Liberation Sans,sans-serif" font-size="4.6" font-weight="bold" fill="#222" text-anchor="middle" >✕</text>
<text x="1113.8" y="603.3" font-family="Liberation Sans,sans-serif" font-size="4.6" font-weight="bold" fill="#222" text-anchor="middle" >✕</text>
<text x="1113.8" y="613.0" font-family="Liberation Sans,sans-serif" font-size="4.6" font-weight="bold" fill="#222" text-anchor="middle" >✕</text>
<path d="M1088.6 490.5 v5.2 h5.2" fill="none" stroke="#777" stroke-width="0.8" />
<g transform="rotate(-45 941 478)"><rect x="936.0" y="475.3" width="10.0" height="5.4" rx="0" fill="none" stroke="#c0c0c0" stroke-width="0.6" stroke-dasharray="1 0.7"/><text x="941.0" y="479.6" font-family="Liberation Sans,sans-serif" font-size="3.4" font-weight="normal" fill="#444" text-anchor="middle" textLength="8.5" lengthAdjust="spacingAndGlyphs" >C3301</text></g>
<rect x="1148.3" y="535.0" width="15.8" height="5.0" rx="2.5" fill="none" stroke="#666" stroke-width="0.9" />
<g transform="rotate(35 1114 442.5)"><rect x="1105.5" y="434.0" width="17.0" height="17.0" rx="0" fill="none" stroke="#c6c6c6" stroke-width="0.6" stroke-dasharray="1.2 1"/><circle cx="1114.0" cy="442.5" r="5.0" fill="#ececec" stroke="#888" stroke-width="0.8"/><circle cx="1114.0" cy="442.5" r="2.4" fill="none" stroke="#999" stroke-width="0.6"/></g>
<text font-family="Liberation Sans,sans-serif" font-size="7.4" font-weight="bold" fill="#222" text-anchor="middle" textLength="17" lengthAdjust="spacingAndGlyphs" transform="translate(1106.8 437.2) rotate(-50)">J3701</text>
<circle cx="1098.7" cy="447.0" r="1.4" fill="none" stroke="#666" stroke-width="0.7"/>
<rect x="1128.2" y="421.5" width="9.3" height="14.0" rx="0" fill="none" stroke="#bdbdbd" stroke-width="0.8" stroke-dasharray="1 0.7"/>
<text font-family="Liberation Sans,sans-serif" font-size="4.4" font-weight="normal" fill="#222" text-anchor="middle" textLength="10" lengthAdjust="spacingAndGlyphs" transform="translate(1132.8 428.5) rotate(-90) translate(0 1.6)">U1701</text>
<circle cx="1125.3" cy="421.3" r="1.3" fill="none" stroke="#555" stroke-width="0.8"/>
<rect x="1114.2" y="654.3" width="17.0" height="17.0" rx="0" fill="none" stroke="#c4c4c4" stroke-width="0.6" stroke-dasharray="1.2 1"/>
<circle cx="1122.7" cy="662.8" r="5.2" fill="#e9e9e9" stroke="#777" stroke-width="0.9"/>
<circle cx="1122.7" cy="662.8" r="2.6" fill="none" stroke="#999" stroke-width="0.6"/>
<text font-family="Liberation Sans,sans-serif" font-size="7.4" font-weight="bold" fill="#111" text-anchor="middle" textLength="16" lengthAdjust="spacingAndGlyphs" transform="translate(1123.2 662.8) rotate(90) translate(0 2.7)">J3200</text>
<circle cx="1132.2" cy="653.1" r="1.5" fill="none" stroke="#666" stroke-width="0.7"/>
<rect x="1148.3" y="674.4" width="15.8" height="17.1" rx="0" fill="none" stroke="#cfcfcf" stroke-width="0.6" stroke-dasharray="1.2 1"/>
<rect x="1150.0" y="676.0" width="12.4" height="14.0" rx="5" fill="none" stroke="#c0c0c0" stroke-width="0.7" />
<text font-family="Liberation Sans,sans-serif" font-size="4.6" font-weight="normal" fill="#333" text-anchor="middle" textLength="11" lengthAdjust="spacingAndGlyphs" transform="translate(1156.4 683.0) rotate(90) translate(0 1.7)">J3202</text>
<rect x="1148.3" y="657.3" width="15.8" height="4.6" rx="2.3" fill="none" stroke="#666" stroke-width="0.9" />
<circle cx="1120.6" cy="702.7" r="18.6" fill="none" stroke="#5a5a5a" stroke-width="1.0"/>
<circle cx="1120.6" cy="702.7" r="7.3" fill="none" stroke="#5a5a5a" stroke-width="1.0"/>
<circle cx="1145.8" cy="702.7" r="4.6" fill="none" stroke="#5a5a5a" stroke-width="1.0"/>
<circle cx="1174.9" cy="721.1" r="2.6" fill="none" stroke="#000" stroke-width="1.1"/>
<path d="M1169.4 721.1 H1180.4 M1174.9 715.6 V726.6" fill="none" stroke="#000" stroke-width="1.1" />
<rect x="1075.5" y="684.0" width="10.0" height="5.5" rx="0" fill="none" stroke="#b5b5b5" stroke-width="0.7" />
<text x="1080.5" y="688.0" font-family="Liberation Sans,sans-serif" font-size="3.6" font-weight="normal" fill="#444" text-anchor="middle" textLength="8.5" lengthAdjust="spacingAndGlyphs" >C8402</text>
<rect x="1078.0" y="695.5" width="10.0" height="5.5" rx="0" fill="none" stroke="#b5b5b5" stroke-width="0.7" />
<text x="1083.0" y="699.5" font-family="Liberation Sans,sans-serif" font-size="3.6" font-weight="normal" fill="#444" text-anchor="middle" textLength="8.5" lengthAdjust="spacingAndGlyphs" >C8401</text>
<text x="1016.5" y="688.2" font-family="Liberation Sans,sans-serif" font-size="3.6" font-weight="bold" fill="#222" text-anchor="middle" textLength="9" lengthAdjust="spacingAndGlyphs" >C8408</text>
<text x="1016.5" y="696.0" font-family="Liberation Sans,sans-serif" font-size="3.6" font-weight="bold" fill="#222" text-anchor="middle" textLength="9" lengthAdjust="spacingAndGlyphs" >C8409</text>
<rect x="1040.0" y="685.0" width="7.0" height="5.0" rx="0" fill="none" stroke="#cfcfcf" stroke-width="0.5" />
<path d="M1040 685 l7 5" fill="none" stroke="#d4d4d4" stroke-width="0.5" />
<rect x="1049.0" y="685.0" width="7.0" height="5.0" rx="0" fill="none" stroke="#cfcfcf" stroke-width="0.5" />
<path d="M1049 685 l7 5" fill="none" stroke="#d4d4d4" stroke-width="0.5" />
<rect x="1058.0" y="685.0" width="7.0" height="5.0" rx="0" fill="none" stroke="#cfcfcf" stroke-width="0.5" />
<path d="M1058 685 l7 5" fill="none" stroke="#d4d4d4" stroke-width="0.5" />
<rect x="1067.0" y="685.0" width="7.0" height="5.0" rx="0" fill="none" stroke="#cfcfcf" stroke-width="0.5" />
<path d="M1067 685 l7 5" fill="none" stroke="#d4d4d4" stroke-width="0.5" />
<text x="1033.0" y="701.6" font-family="Liberation Sans,sans-serif" font-size="7" font-weight="bold" fill="#222" text-anchor="middle" >✕</text>
<text x="1041.0" y="706.5" font-family="Liberation Sans,sans-serif" font-size="4.4" font-weight="bold" fill="#222" text-anchor="middle" >✕</text>
<text x="1081.5" y="708.0" font-family="Liberation Sans,sans-serif" font-size="5" font-weight="bold" fill="#222" text-anchor="middle" >✕</text>
<rect x="1048.5" y="698.0" width="4.7" height="11.0" rx="0" fill="none" stroke="#bdbdbd" stroke-width="0.8" stroke-dasharray="1 0.7"/>
<text font-family="Liberation Sans,sans-serif" font-size="3" font-weight="normal" fill="#444" text-anchor="middle" textLength="8" lengthAdjust="spacingAndGlyphs" transform="translate(1050.8 703.5) rotate(-90) translate(0 1.1)">C8412</text>
</svg>
</div></body></html>
